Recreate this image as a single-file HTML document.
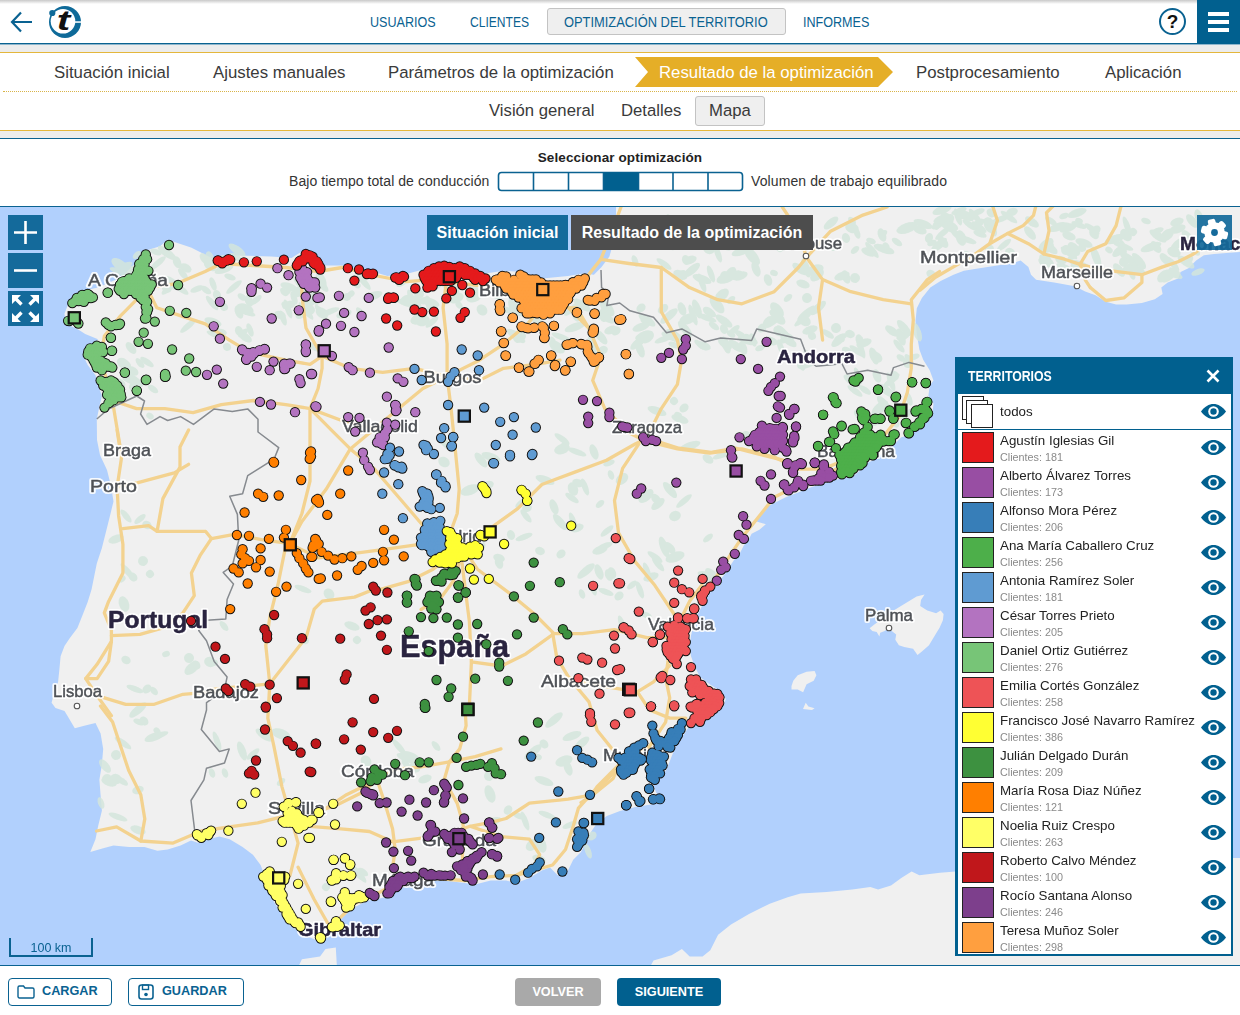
<!DOCTYPE html>
<html lang="es"><head><meta charset="utf-8"><title>Optimización del territorio</title>
<style>
*{box-sizing:border-box;margin:0;padding:0}
html,body{width:1240px;height:1015px;overflow:hidden;background:#fff;font-family:"Liberation Sans","DejaVu Sans",sans-serif;color:#333}
.abs{position:absolute}
#top{position:absolute;left:0;top:0;width:1240px;height:44px;background:#fff;border-bottom:1px solid #0a6291}
#topshadow{position:absolute;left:0;top:0;width:1240px;height:4px;background:linear-gradient(#c9c9c9,#fff)}
.nav{position:absolute;top:14px;font-size:14px;color:#0a6291;white-space:nowrap;line-height:16px;transform-origin:0 50%}
#navsel{position:absolute;left:547px;top:8px;width:239px;height:27px;border:1px solid #c3c3c3;border-radius:3px;background:#efefef}
#burger{position:absolute;left:1197px;top:0;width:43px;height:44px;background:#01608f}
#burger i{position:absolute;left:11px;width:21px;height:3.5px;background:#fff}
#help{position:absolute;left:1159px;top:8px;width:27px;height:27px;border:2px solid #0a6291;border-radius:50%;text-align:center;font-weight:bold;font-size:19px;line-height:23px;color:#111}
#grey1{position:absolute;left:0;top:44px;width:1240px;height:96px;background:#ececec;border-top:1px solid #8fb6cc}
#steps{position:absolute;left:0;top:52px;width:1240px;height:79px;background:#fff;border-top:1.5px solid #e4b73c;border-bottom:1.5px solid #e4b73c}
.step{position:absolute;top:62.5px;font-size:16.8px;line-height:20px;color:#3a3a3a;white-space:nowrap}
#dotline{position:absolute;left:3px;top:91px;width:1234px;height:0;border-top:1px dotted #d9b44a}
.sub{position:absolute;top:101px;font-size:16.7px;line-height:20px;color:#3a3a3a;white-space:nowrap}
#mapa{position:absolute;left:695px;top:96px;width:70px;height:30px;border:1px solid #c3c3c3;border-radius:3px;background:#efefef}
#selbar{position:absolute;left:0;top:138px;width:1240px;height:69px;background:#fff;border-top:1.5px solid #0a6291}
#map{position:absolute;left:0;top:206px;width:1240px;height:760px;border-top:1px solid #0a6291;border-bottom:1px solid #0a6291;background:#b1d0fd;overflow:hidden}
.mbtn{position:absolute;width:35px;height:35px;background:#146a9b}
.tog{position:absolute;top:215px;height:35px;color:#fff;font-weight:bold;font-size:16px;line-height:35px;white-space:nowrap;text-align:center}
.fbtn{position:absolute;top:978px;height:28px;border-radius:4px;font-weight:bold;font-size:12.7px;line-height:28px;white-space:nowrap}
#legend{position:absolute;left:955px;top:357px;width:278px;height:599px;background:#fff;border:2px solid #01608f;border-left-width:3px;border-top:0}
#leghead{position:absolute;left:-3px;top:0;width:278px;height:37px;background:#01608f;color:#fff;font-weight:bold;font-size:13.5px;line-height:39px;padding-left:13px}
.row{position:absolute;left:0;width:273px;height:35px}
.sw{position:absolute;left:4px;top:2px;width:32px;height:31px;border:1px solid #222}
.nm{position:absolute;left:42px;top:3px;font-size:13.35px;line-height:15px;color:#222;white-space:nowrap}
.ct{position:absolute;left:42px;top:20.5px;font-size:10.8px;line-height:12px;color:#8a8a8a;white-space:nowrap}
.eye{position:absolute;left:242.5px;top:10px;width:25px;height:15px}
</style></head><body>
<div id="top"></div><div id="topshadow"></div>
<svg class="abs" style="left:8px;top:8px" width="28" height="28" viewBox="0 0 28 28"><path d="M4 14H24M13 4.5L4 14L13 23.5" fill="none" stroke="#0a6291" stroke-width="2.2"/></svg>
<svg class="abs" style="left:46px;top:4px" width="38" height="36" viewBox="0 0 38 36"><circle cx="19" cy="18" r="16" fill="#0e6a99"/><circle cx="17" cy="17.3" r="12.3" fill="#fff"/><rect x="29" y="17.3" width="7" height="1.5" fill="#fff"/><circle cx="6.3" cy="9" r="3.1" fill="#0e6a99"/><text x="0" y="0" transform="translate(17.5 26.3) scale(1.5 1)" text-anchor="middle" font-family="Liberation Sans,sans-serif" font-weight="bold" font-style="italic" font-size="27" fill="#111">t</text></svg>
<div id="navsel"></div>
<div class="nav" style="left:370px;transform:scaleX(.897)">USUARIOS</div>
<div class="nav" style="left:470px;transform:scaleX(.862)">CLIENTES</div>
<div class="nav" style="left:564px;transform:scaleX(.92)">OPTIMIZACIÓN DEL TERRITORIO</div>
<div class="nav" style="left:803px;transform:scaleX(.898)">INFORMES</div>
<div id="help">?</div>
<div id="burger"><i style="top:12px"></i><i style="top:20px"></i><i style="top:28px"></i></div>
<div id="grey1"></div>
<div id="steps"></div>
<svg class="abs" style="left:635px;top:57px" width="260" height="30" viewBox="0 0 260 30"><path d="M0 0H243L258 15L243 30H0L13 15Z" fill="#e5ae27"/></svg>
<div class="step" style="left:54px">Situación inicial</div>
<div class="step" style="left:213px">Ajustes manuales</div>
<div class="step" style="left:388px">Parámetros de la optimización</div>
<div class="step" style="left:659px;color:#fff">Resultado de la optimización</div>
<div class="step" style="left:916px">Postprocesamiento</div>
<div class="step" style="left:1105px">Aplicación</div>
<div id="dotline"></div>
<div id="mapa"></div>
<div class="sub" style="left:489px">Visión general</div>
<div class="sub" style="left:621px">Detalles</div>
<div class="sub" style="left:709px">Mapa</div>
<div id="selbar"></div>
<div class="abs" style="left:420px;top:150px;width:400px;text-align:center;font-weight:bold;font-size:13.5px;letter-spacing:.1px;line-height:15px;color:#222">Seleccionar optimización</div>
<div class="abs" id="lbl1" style="left:289px;top:174px;font-size:14px;letter-spacing:.06px;line-height:15px;white-space:nowrap">Bajo tiempo total de conducción</div>
<div class="abs" id="lbl2" style="left:751px;top:174px;font-size:14px;letter-spacing:.1px;line-height:15px;white-space:nowrap">Volumen de trabajo equilibrado</div>
<svg class="abs" style="left:497px;top:171px" width="248" height="22" viewBox="0 0 248 22"><rect x="1.5" y="1.5" width="244" height="18" rx="3" fill="#fff" stroke="#0a6291" stroke-width="1.6"/><rect x="106" y="1.5" width="35" height="18" fill="#01608f"/><path d="M36.5 2v17M71.5 2v17M106.5 2v17M141.5 2v17M176 2v17M211 2v17" stroke="#0a6291" stroke-width="1.6"/></svg>
<div id="map">
<svg class="abs" style="left:0;top:0" width="1240" height="758" viewBox="0 0 1240 758">
<g fill="#f0f0f0" stroke="none">
<path d="M64.5 106.4 L69.7 93.5 L85.2 83.2 L98.0 80.6 L121.3 70.3 L134.2 57.4 L140.6 49.6 L147.1 43.2 L160.0 39.3 L167.7 32.8 L191.0 40.6 L203.9 47.0 L211.6 50.9 L232.3 48.3 L271.0 49.6 L291.6 50.9 L305.8 41.9 L320.0 53.5 L325.5 58.6 L343.5 58.6 L374.5 65.1 L387.4 69.0 L408.0 66.4 L423.5 62.5 L433.9 58.6 L449.4 56.1 L464.8 58.6 L485.5 66.4 L503.5 63.8 L521.6 65.1 L542.3 71.5 L568.0 69.0 L583.5 66.4 L593.9 67.7 L601.6 59.9 L609.4 49.6 L613.0 36.7 L615.0 23.8 L616.0 10.9 L616.0 -7.0 L1245.0 -7.0 L1245.0 44.5 L1229.7 45.7 L1214.2 47.0 L1203.9 48.3 L1196.1 53.5 L1188.4 61.2 L1180.6 65.1 L1178.1 71.5 L1167.7 75.4 L1161.3 80.6 L1162.6 87.0 L1154.8 92.2 L1141.9 96.1 L1126.5 97.4 L1116.1 97.4 L1105.8 94.8 L1095.5 88.3 L1085.2 84.5 L1074.8 79.3 L1054.2 75.4 L1036.1 72.8 L1031.0 67.7 L1028.4 59.9 L1020.6 53.5 L1012.9 56.1 L997.4 58.6 L979.4 61.2 L963.9 63.8 L953.5 67.7 L940.6 74.1 L930.3 80.6 L921.9 90.9 L916.8 101.2 L915.5 114.1 L916.8 127.0 L919.4 142.5 L923.2 152.8 L929.7 163.2 L933.5 173.5 L929.7 178.6 L928.4 189.0 L933.5 196.7 L932.3 207.0 L925.8 214.8 L916.8 222.5 L911.6 227.7 L901.3 230.3 L893.5 238.0 L883.2 245.7 L876.0 252.0 L867.7 255.7 L860.0 263.5 L852.3 269.9 L836.8 272.5 L823.9 276.4 L811.0 280.3 L798.1 285.4 L785.2 290.6 L774.8 295.7 L767.1 299.6 L759.4 307.4 L754.2 313.8 L765.8 317.2 L759.4 322.8 L751.6 326.7 L749.0 331.9 L743.9 338.3 L740.0 346.1 L733.5 353.8 L728.4 361.5 L723.2 369.3 L715.5 377.0 L709.0 387.4 L702.6 397.7 L697.4 408.0 L693.5 418.3 L691.0 428.6 L689.7 439.0 L691.0 449.3 L694.8 459.6 L700.0 469.9 L710.3 477.7 L720.6 484.1 L725.8 491.9 L723.2 499.6 L705.2 510.9 L689.7 518.6 L684.5 526.4 L676.8 536.7 L671.6 549.6 L666.5 562.5 L658.7 572.8 L653.5 578.0 L656.1 585.7 L663.9 592.2 L651.0 597.4 L635.5 599.9 L620.0 604.0 L606.8 609.0 L596.5 616.7 L591.3 624.5 L586.1 634.8 L581.0 645.1 L573.2 652.8 L568.1 663.2 L557.7 668.3 L550.0 660.6 L542.3 663.2 L529.4 670.9 L516.5 676.1 L506.1 673.5 L490.6 673.5 L475.2 677.4 L464.8 676.1 L444.2 673.5 L426.1 673.5 L413.2 676.1 L400.3 681.2 L390.0 689.0 L379.7 691.5 L366.8 694.1 L356.5 699.3 L346.1 707.0 L335.8 717.4 L325.5 730.3 L320.0 735.0 L309.7 730.3 L299.4 725.1 L289.0 717.4 L281.3 707.0 L273.5 694.1 L267.1 681.2 L264.5 668.3 L260.6 658.0 L252.9 647.7 L242.6 639.9 L229.7 632.2 L219.4 629.6 L209.0 632.2 L198.7 636.1 L191.0 633.5 L180.6 638.6 L167.7 642.5 L157.4 643.8 L144.5 639.9 L129.0 639.9 L113.5 638.6 L103.2 641.2 L90.3 645.1 L95.5 632.2 L98.1 619.3 L101.9 603.8 L100.6 588.3 L99.4 572.8 L101.9 557.4 L103.2 541.9 L100.6 526.4 L95.5 516.1 L85.2 518.6 L74.8 521.2 L67.1 508.3 L64.5 504.0 L55.5 500.9 L51.6 495.7 L54.2 485.4 L58.1 475.1 L59.4 462.2 L60.6 449.3 L64.5 439.0 L69.7 431.2 L77.4 420.9 L82.6 408.0 L87.7 395.1 L91.6 382.2 L94.2 369.3 L96.8 356.4 L101.9 340.9 L105.8 325.4 L109.7 309.9 L113.5 294.5 L111.0 279.0 L107.0 263.0 L100.0 248.0 L97.0 233.0 L96.8 212.2 L99.4 199.3 L102.0 189.0 L98.0 178.6 L95.5 168.3 L87.7 158.0 L82.6 147.7 L87.7 142.5 L98.0 132.2 L85.2 127.0 L77.4 121.9 L65.8 116.7Z"/>
<path d="M296.8 763.0 L301.9 752.2 L320.0 749.6 L325.5 741.9 L335.8 740.6 L337.1 763.0Z"/>
<path d="M648.4 763.0 L653.5 753.5 L671.6 748.3 L681.9 741.9 L689.7 749.6 L702.6 749.6 L710.3 743.2 L718.1 727.7 L731.0 717.4 L749.0 707.0 L769.7 696.7 L787.7 690.3 L800.6 686.4 L826.5 685.1 L852.3 682.5 L870.3 679.9 L878.1 682.5 L891.0 678.6 L901.3 670.9 L911.6 664.5 L919.4 668.3 L929.7 667.0 L940.0 665.7 L1000.0 661.0 L1232.0 651.0 L1245.0 651.0 L1245.0 763.0Z"/>
<path d="M869.6 421.3 L874.0 417.8 L893.6 403.6 L916.6 389.4 L924.6 387.6 L921.0 392.9 L920.2 399.1 L927.3 403.6 L936.1 406.2 L940.6 403.6 L943.6 407.1 L942.9 413.3 L939.7 420.4 L934.4 429.3 L929.0 438.2 L921.9 444.4 L917.5 447.9 L913.1 441.7 L904.2 439.9 L898.9 438.2 L895.3 432.8 L896.2 427.5 L891.8 424.0 L888.2 421.3 L884.7 424.0 L880.2 425.7 L879.4 429.6 L876.7 424.9 L872.3 424.0Z"/>
<path d="M791.5 479.0 L793.3 473.7 L797.7 468.3 L806.6 464.8 L814.6 463.9 L816.4 468.3 L813.7 473.7 L806.6 477.2 L803.1 485.2 L797.7 482.5 L791.5 482.5Z"/>
<path d="M803.0 502.0 L805.7 495.8 L808.4 499.4 L814.6 501.2 L812.0 503.0Z"/>
</g>
<g fill="#d4e6dc" opacity=".85">
<ellipse cx="975" cy="9" rx="9" ry="3" transform="rotate(50 975 9)"/>
<ellipse cx="943" cy="26" rx="10" ry="3" transform="rotate(-40 943 26)"/>
<ellipse cx="991" cy="6" rx="5" ry="4" transform="rotate(50 991 6)"/>
<ellipse cx="947" cy="12" rx="8" ry="5" transform="rotate(50 947 12)"/>
<ellipse cx="1012" cy="5" rx="6" ry="4" transform="rotate(-20 1012 5)"/>
<ellipse cx="971" cy="9" rx="5" ry="3" transform="rotate(70 971 9)"/>
<ellipse cx="955" cy="26" rx="8" ry="3" transform="rotate(50 955 26)"/>
<ellipse cx="1030" cy="26" rx="8" ry="4" transform="rotate(50 1030 26)"/>
<ellipse cx="990" cy="16" rx="8" ry="4" transform="rotate(20 990 16)"/>
<ellipse cx="965" cy="10" rx="9" ry="3" transform="rotate(20 965 10)"/>
<ellipse cx="1004" cy="38" rx="9" ry="3" transform="rotate(-40 1004 38)"/>
<ellipse cx="947" cy="20" rx="9" ry="3" transform="rotate(35 947 20)"/>
<ellipse cx="989" cy="41" rx="5" ry="4" transform="rotate(20 989 41)"/>
<ellipse cx="978" cy="17" rx="7" ry="4" transform="rotate(-40 978 17)"/>
<ellipse cx="1048" cy="41" rx="7" ry="4" transform="rotate(-40 1048 41)"/>
<ellipse cx="1032" cy="15" rx="8" ry="4" transform="rotate(35 1032 15)"/>
<ellipse cx="970" cy="18" rx="9" ry="3" transform="rotate(35 970 18)"/>
<ellipse cx="980" cy="27" rx="7" ry="3" transform="rotate(20 980 27)"/>
<ellipse cx="948" cy="13" rx="7" ry="5" transform="rotate(-40 948 13)"/>
<ellipse cx="953" cy="19" rx="6" ry="3" transform="rotate(35 953 19)"/>
<ellipse cx="1051" cy="14" rx="7" ry="3" transform="rotate(35 1051 14)"/>
<ellipse cx="1064" cy="9" rx="5" ry="3" transform="rotate(-20 1064 9)"/>
<ellipse cx="932" cy="36" rx="5" ry="3" transform="rotate(-20 932 36)"/>
<ellipse cx="989" cy="18" rx="8" ry="5" transform="rotate(70 989 18)"/>
<ellipse cx="1050" cy="41" rx="9" ry="4" transform="rotate(35 1050 41)"/>
<ellipse cx="1186" cy="55" rx="10" ry="4" transform="rotate(35 1186 55)"/>
<ellipse cx="1116" cy="32" rx="7" ry="4" transform="rotate(-20 1116 32)"/>
<ellipse cx="1069" cy="21" rx="5" ry="3" transform="rotate(-40 1069 21)"/>
<ellipse cx="1074" cy="42" rx="8" ry="5" transform="rotate(50 1074 42)"/>
<ellipse cx="1064" cy="60" rx="8" ry="3" transform="rotate(20 1064 60)"/>
<ellipse cx="1194" cy="44" rx="7" ry="3" transform="rotate(35 1194 44)"/>
<ellipse cx="1199" cy="36" rx="7" ry="3" transform="rotate(-40 1199 36)"/>
<ellipse cx="1165" cy="52" rx="7" ry="4" transform="rotate(50 1165 52)"/>
<ellipse cx="1063" cy="65" rx="8" ry="3" transform="rotate(50 1063 65)"/>
<ellipse cx="1188" cy="53" rx="6" ry="4" transform="rotate(-40 1188 53)"/>
<ellipse cx="1157" cy="24" rx="7" ry="3" transform="rotate(-20 1157 24)"/>
<ellipse cx="1135" cy="55" rx="6" ry="3" transform="rotate(-20 1135 55)"/>
<ellipse cx="1173" cy="57" rx="9" ry="3" transform="rotate(50 1173 57)"/>
<ellipse cx="1129" cy="52" rx="11" ry="4" transform="rotate(35 1129 52)"/>
<ellipse cx="1096" cy="50" rx="11" ry="4" transform="rotate(70 1096 50)"/>
<ellipse cx="1198" cy="65" rx="7" ry="3" transform="rotate(-20 1198 65)"/>
<ellipse cx="1126" cy="28" rx="7" ry="5" transform="rotate(50 1126 28)"/>
<ellipse cx="1178" cy="37" rx="9" ry="4" transform="rotate(-40 1178 37)"/>
<ellipse cx="1177" cy="15" rx="7" ry="4" transform="rotate(-20 1177 15)"/>
<ellipse cx="1127" cy="19" rx="10" ry="3" transform="rotate(70 1127 19)"/>
<ellipse cx="1115" cy="32" rx="11" ry="4" transform="rotate(-20 1115 32)"/>
<ellipse cx="1199" cy="10" rx="8" ry="4" transform="rotate(70 1199 10)"/>
<ellipse cx="1080" cy="58" rx="11" ry="4" transform="rotate(20 1080 58)"/>
<ellipse cx="1082" cy="41" rx="4" ry="4" transform="rotate(70 1082 41)"/>
<ellipse cx="1151" cy="40" rx="11" ry="4" transform="rotate(-20 1151 40)"/>
<ellipse cx="1176" cy="21" rx="6" ry="3" transform="rotate(-20 1176 21)"/>
<ellipse cx="1167" cy="28" rx="8" ry="5" transform="rotate(-40 1167 28)"/>
<ellipse cx="1187" cy="29" rx="7" ry="4" transform="rotate(50 1187 29)"/>
<ellipse cx="1119" cy="63" rx="8" ry="4" transform="rotate(50 1119 63)"/>
<ellipse cx="1131" cy="60" rx="9" ry="4" transform="rotate(-20 1131 60)"/>
<ellipse cx="1084" cy="36" rx="9" ry="4" transform="rotate(20 1084 36)"/>
<ellipse cx="1156" cy="40" rx="7" ry="4" transform="rotate(50 1156 40)"/>
<ellipse cx="1068" cy="19" rx="4" ry="3" transform="rotate(35 1068 19)"/>
<ellipse cx="1139" cy="54" rx="10" ry="4" transform="rotate(50 1139 54)"/>
<ellipse cx="1196" cy="44" rx="5" ry="3" transform="rotate(50 1196 44)"/>
<ellipse cx="884" cy="42" rx="11" ry="4" transform="rotate(20 884 42)"/>
<ellipse cx="931" cy="67" rx="5" ry="4" transform="rotate(35 931 67)"/>
<ellipse cx="835" cy="40" rx="5" ry="3" transform="rotate(-40 835 40)"/>
<ellipse cx="846" cy="31" rx="5" ry="4" transform="rotate(70 846 31)"/>
<ellipse cx="897" cy="35" rx="6" ry="3" transform="rotate(35 897 35)"/>
<ellipse cx="846" cy="70" rx="7" ry="4" transform="rotate(70 846 70)"/>
<ellipse cx="920" cy="23" rx="7" ry="4" transform="rotate(20 920 23)"/>
<ellipse cx="871" cy="34" rx="5" ry="3" transform="rotate(20 871 34)"/>
<ellipse cx="886" cy="39" rx="4" ry="3" transform="rotate(50 886 39)"/>
<ellipse cx="855" cy="71" rx="5" ry="5" transform="rotate(-20 855 71)"/>
<ellipse cx="937" cy="19" rx="6" ry="3" transform="rotate(-20 937 19)"/>
<ellipse cx="852" cy="21" rx="7" ry="5" transform="rotate(20 852 21)"/>
<ellipse cx="869" cy="45" rx="8" ry="4" transform="rotate(20 869 45)"/>
<ellipse cx="831" cy="16" rx="9" ry="4" transform="rotate(-40 831 16)"/>
<ellipse cx="852" cy="14" rx="5" ry="3" transform="rotate(50 852 14)"/>
<ellipse cx="923" cy="17" rx="10" ry="4" transform="rotate(20 923 17)"/>
<ellipse cx="939" cy="38" rx="10" ry="4" transform="rotate(-40 939 38)"/>
<ellipse cx="883" cy="27" rx="5" ry="3" transform="rotate(-40 883 27)"/>
<ellipse cx="842" cy="69" rx="8" ry="4" transform="rotate(-20 842 69)"/>
<ellipse cx="855" cy="43" rx="5" ry="3" transform="rotate(-40 855 43)"/>
<ellipse cx="939" cy="15" rx="4" ry="4" transform="rotate(-20 939 15)"/>
<ellipse cx="882" cy="28" rx="7" ry="4" transform="rotate(70 882 28)"/>
<ellipse cx="872" cy="43" rx="10" ry="3" transform="rotate(50 872 43)"/>
<ellipse cx="857" cy="26" rx="6" ry="3" transform="rotate(70 857 26)"/>
<ellipse cx="907" cy="21" rx="11" ry="5" transform="rotate(-20 907 21)"/>
<ellipse cx="692" cy="63" rx="10" ry="4" transform="rotate(-40 692 63)"/>
<ellipse cx="702" cy="72" rx="10" ry="4" transform="rotate(20 702 72)"/>
<ellipse cx="774" cy="66" rx="4" ry="3" transform="rotate(20 774 66)"/>
<ellipse cx="752" cy="49" rx="11" ry="5" transform="rotate(50 752 49)"/>
<ellipse cx="735" cy="39" rx="10" ry="3" transform="rotate(-20 735 39)"/>
<ellipse cx="690" cy="53" rx="7" ry="4" transform="rotate(-20 690 53)"/>
<ellipse cx="725" cy="69" rx="5" ry="5" transform="rotate(-20 725 69)"/>
<ellipse cx="746" cy="40" rx="4" ry="3" transform="rotate(-20 746 40)"/>
<ellipse cx="702" cy="76" rx="10" ry="3" transform="rotate(70 702 76)"/>
<ellipse cx="800" cy="62" rx="9" ry="4" transform="rotate(35 800 62)"/>
<ellipse cx="711" cy="67" rx="9" ry="3" transform="rotate(70 711 67)"/>
<ellipse cx="815" cy="63" rx="9" ry="5" transform="rotate(-20 815 63)"/>
<ellipse cx="817" cy="68" rx="8" ry="5" transform="rotate(-40 817 68)"/>
<ellipse cx="806" cy="61" rx="10" ry="4" transform="rotate(70 806 61)"/>
<ellipse cx="780" cy="41" rx="4" ry="4" transform="rotate(-40 780 41)"/>
<ellipse cx="653" cy="31" rx="4" ry="3" transform="rotate(50 653 31)"/>
<ellipse cx="671" cy="32" rx="4" ry="4" transform="rotate(70 671 32)"/>
<ellipse cx="686" cy="53" rx="5" ry="4" transform="rotate(70 686 53)"/>
<ellipse cx="674" cy="21" rx="5" ry="3" transform="rotate(70 674 21)"/>
<ellipse cx="675" cy="20" rx="9" ry="4" transform="rotate(35 675 20)"/>
<ellipse cx="635" cy="54" rx="6" ry="3" transform="rotate(70 635 54)"/>
<ellipse cx="669" cy="12" rx="5" ry="3" transform="rotate(70 669 12)"/>
<ellipse cx="672" cy="39" rx="5" ry="4" transform="rotate(35 672 39)"/>
<ellipse cx="152" cy="72" rx="9" ry="4" transform="rotate(20 152 72)"/>
<ellipse cx="205" cy="52" rx="7" ry="4" transform="rotate(50 205 52)"/>
<ellipse cx="144" cy="87" rx="11" ry="3" transform="rotate(35 144 87)"/>
<ellipse cx="129" cy="63" rx="11" ry="5" transform="rotate(35 129 63)"/>
<ellipse cx="145" cy="85" rx="5" ry="4" transform="rotate(-20 145 85)"/>
<ellipse cx="210" cy="51" rx="7" ry="4" transform="rotate(70 210 51)"/>
<ellipse cx="181" cy="82" rx="9" ry="3" transform="rotate(35 181 82)"/>
<ellipse cx="167" cy="46" rx="11" ry="4" transform="rotate(35 167 46)"/>
<ellipse cx="156" cy="45" rx="6" ry="3" transform="rotate(20 156 45)"/>
<ellipse cx="120" cy="76" rx="10" ry="3" transform="rotate(-20 120 76)"/>
<ellipse cx="206" cy="83" rx="6" ry="3" transform="rotate(35 206 83)"/>
<ellipse cx="167" cy="81" rx="5" ry="5" transform="rotate(20 167 81)"/>
<ellipse cx="223" cy="52" rx="4" ry="4" transform="rotate(70 223 52)"/>
<ellipse cx="232" cy="50" rx="6" ry="4" transform="rotate(-20 232 50)"/>
<ellipse cx="213" cy="77" rx="7" ry="3" transform="rotate(70 213 77)"/>
<ellipse cx="168" cy="82" rx="8" ry="3" transform="rotate(-40 168 82)"/>
<ellipse cx="126" cy="75" rx="7" ry="4" transform="rotate(70 126 75)"/>
<ellipse cx="224" cy="62" rx="10" ry="4" transform="rotate(-20 224 62)"/>
<ellipse cx="177" cy="55" rx="6" ry="4" transform="rotate(70 177 55)"/>
<ellipse cx="151" cy="71" rx="6" ry="4" transform="rotate(35 151 71)"/>
<ellipse cx="134" cy="70" rx="5" ry="4" transform="rotate(35 134 70)"/>
<ellipse cx="186" cy="61" rx="6" ry="4" transform="rotate(35 186 61)"/>
<ellipse cx="137" cy="48" rx="5" ry="3" transform="rotate(-40 137 48)"/>
<ellipse cx="158" cy="56" rx="10" ry="3" transform="rotate(-40 158 56)"/>
<ellipse cx="210" cy="59" rx="7" ry="4" transform="rotate(35 210 59)"/>
<ellipse cx="152" cy="76" rx="7" ry="4" transform="rotate(20 152 76)"/>
<ellipse cx="135" cy="63" rx="8" ry="5" transform="rotate(-20 135 63)"/>
<ellipse cx="131" cy="83" rx="7" ry="4" transform="rotate(35 131 83)"/>
<ellipse cx="234" cy="80" rx="10" ry="3" transform="rotate(-40 234 80)"/>
<ellipse cx="171" cy="76" rx="10" ry="5" transform="rotate(35 171 76)"/>
<ellipse cx="120" cy="58" rx="10" ry="5" transform="rotate(35 120 58)"/>
<ellipse cx="237" cy="50" rx="5" ry="3" transform="rotate(50 237 50)"/>
<ellipse cx="237" cy="43" rx="10" ry="4" transform="rotate(35 237 43)"/>
<ellipse cx="130" cy="77" rx="4" ry="3" transform="rotate(50 130 77)"/>
<ellipse cx="230" cy="70" rx="6" ry="3" transform="rotate(20 230 70)"/>
<ellipse cx="183" cy="60" rx="9" ry="3" transform="rotate(20 183 60)"/>
<ellipse cx="183" cy="67" rx="7" ry="3" transform="rotate(50 183 67)"/>
<ellipse cx="120" cy="65" rx="11" ry="3" transform="rotate(20 120 65)"/>
<ellipse cx="197" cy="82" rx="7" ry="3" transform="rotate(-20 197 82)"/>
<ellipse cx="124" cy="59" rx="9" ry="3" transform="rotate(-20 124 59)"/>
<ellipse cx="250" cy="123" rx="7" ry="3" transform="rotate(70 250 123)"/>
<ellipse cx="239" cy="105" rx="7" ry="4" transform="rotate(70 239 105)"/>
<ellipse cx="239" cy="124" rx="5" ry="4" transform="rotate(70 239 124)"/>
<ellipse cx="298" cy="87" rx="7" ry="3" transform="rotate(-20 298 87)"/>
<ellipse cx="212" cy="96" rx="9" ry="3" transform="rotate(50 212 96)"/>
<ellipse cx="249" cy="94" rx="6" ry="4" transform="rotate(70 249 94)"/>
<ellipse cx="188" cy="119" rx="10" ry="3" transform="rotate(-40 188 119)"/>
<ellipse cx="316" cy="92" rx="4" ry="3" transform="rotate(35 316 92)"/>
<ellipse cx="243" cy="126" rx="6" ry="3" transform="rotate(-40 243 126)"/>
<ellipse cx="310" cy="103" rx="5" ry="5" transform="rotate(70 310 103)"/>
<ellipse cx="245" cy="102" rx="9" ry="5" transform="rotate(20 245 102)"/>
<ellipse cx="242" cy="90" rx="5" ry="3" transform="rotate(35 242 90)"/>
<ellipse cx="314" cy="90" rx="11" ry="3" transform="rotate(20 314 90)"/>
<ellipse cx="288" cy="102" rx="10" ry="3" transform="rotate(70 288 102)"/>
<ellipse cx="246" cy="105" rx="10" ry="3" transform="rotate(20 246 105)"/>
<ellipse cx="283" cy="111" rx="8" ry="3" transform="rotate(70 283 111)"/>
<ellipse cx="287" cy="85" rx="4" ry="3" transform="rotate(-40 287 85)"/>
<ellipse cx="216" cy="128" rx="10" ry="3" transform="rotate(20 216 128)"/>
<ellipse cx="227" cy="140" rx="4" ry="4" transform="rotate(70 227 140)"/>
<ellipse cx="224" cy="100" rx="4" ry="4" transform="rotate(70 224 100)"/>
<ellipse cx="313" cy="87" rx="10" ry="3" transform="rotate(70 313 87)"/>
<ellipse cx="314" cy="140" rx="7" ry="3" transform="rotate(35 314 140)"/>
<ellipse cx="294" cy="91" rx="7" ry="3" transform="rotate(70 294 91)"/>
<ellipse cx="222" cy="125" rx="5" ry="3" transform="rotate(20 222 125)"/>
<ellipse cx="245" cy="130" rx="8" ry="4" transform="rotate(35 245 130)"/>
<ellipse cx="285" cy="98" rx="4" ry="3" transform="rotate(50 285 98)"/>
<ellipse cx="256" cy="93" rx="7" ry="3" transform="rotate(-40 256 93)"/>
<ellipse cx="217" cy="88" rx="5" ry="4" transform="rotate(70 217 88)"/>
<ellipse cx="316" cy="93" rx="5" ry="4" transform="rotate(70 316 93)"/>
<ellipse cx="213" cy="115" rx="9" ry="4" transform="rotate(20 213 115)"/>
<ellipse cx="309" cy="96" rx="7" ry="4" transform="rotate(-20 309 96)"/>
<ellipse cx="324" cy="80" rx="6" ry="3" transform="rotate(50 324 80)"/>
<ellipse cx="299" cy="76" rx="6" ry="3" transform="rotate(50 299 76)"/>
<ellipse cx="303" cy="105" rx="9" ry="5" transform="rotate(-40 303 105)"/>
<ellipse cx="280" cy="108" rx="6" ry="4" transform="rotate(20 280 108)"/>
<ellipse cx="284" cy="85" rx="5" ry="3" transform="rotate(50 284 85)"/>
<ellipse cx="299" cy="76" rx="8" ry="3" transform="rotate(50 299 76)"/>
<ellipse cx="306" cy="104" rx="11" ry="3" transform="rotate(50 306 104)"/>
<ellipse cx="351" cy="87" rx="4" ry="3" transform="rotate(-40 351 87)"/>
<ellipse cx="300" cy="83" rx="8" ry="4" transform="rotate(-20 300 83)"/>
<ellipse cx="361" cy="106" rx="7" ry="3" transform="rotate(50 361 106)"/>
<ellipse cx="311" cy="81" rx="10" ry="4" transform="rotate(-40 311 81)"/>
<ellipse cx="321" cy="105" rx="9" ry="3" transform="rotate(50 321 105)"/>
<ellipse cx="289" cy="80" rx="9" ry="4" transform="rotate(20 289 80)"/>
<ellipse cx="347" cy="90" rx="4" ry="4" transform="rotate(20 347 90)"/>
<ellipse cx="321" cy="74" rx="9" ry="5" transform="rotate(70 321 74)"/>
<ellipse cx="300" cy="102" rx="5" ry="3" transform="rotate(-20 300 102)"/>
<ellipse cx="322" cy="106" rx="7" ry="5" transform="rotate(35 322 106)"/>
<ellipse cx="357" cy="78" rx="4" ry="3" transform="rotate(35 357 78)"/>
<ellipse cx="289" cy="98" rx="7" ry="4" transform="rotate(-20 289 98)"/>
<ellipse cx="315" cy="79" rx="5" ry="3" transform="rotate(35 315 79)"/>
<ellipse cx="329" cy="105" rx="11" ry="3" transform="rotate(-20 329 105)"/>
<ellipse cx="364" cy="75" rx="10" ry="3" transform="rotate(50 364 75)"/>
<ellipse cx="373" cy="89" rx="10" ry="4" transform="rotate(-20 373 89)"/>
<ellipse cx="344" cy="107" rx="8" ry="4" transform="rotate(-20 344 107)"/>
<ellipse cx="500" cy="79" rx="6" ry="3" transform="rotate(50 500 79)"/>
<ellipse cx="419" cy="87" rx="5" ry="5" transform="rotate(-20 419 87)"/>
<ellipse cx="405" cy="96" rx="9" ry="3" transform="rotate(20 405 96)"/>
<ellipse cx="414" cy="97" rx="8" ry="4" transform="rotate(20 414 97)"/>
<ellipse cx="478" cy="85" rx="6" ry="3" transform="rotate(20 478 85)"/>
<ellipse cx="454" cy="90" rx="4" ry="4" transform="rotate(35 454 90)"/>
<ellipse cx="456" cy="91" rx="8" ry="5" transform="rotate(-20 456 91)"/>
<ellipse cx="497" cy="89" rx="4" ry="3" transform="rotate(20 497 89)"/>
<ellipse cx="411" cy="90" rx="8" ry="3" transform="rotate(70 411 90)"/>
<ellipse cx="416" cy="112" rx="6" ry="4" transform="rotate(-40 416 112)"/>
<ellipse cx="407" cy="93" rx="7" ry="5" transform="rotate(-20 407 93)"/>
<ellipse cx="403" cy="74" rx="8" ry="4" transform="rotate(-40 403 74)"/>
<ellipse cx="423" cy="114" rx="7" ry="5" transform="rotate(-20 423 114)"/>
<ellipse cx="482" cy="103" rx="6" ry="5" transform="rotate(50 482 103)"/>
<ellipse cx="491" cy="78" rx="10" ry="3" transform="rotate(35 491 78)"/>
<ellipse cx="417" cy="93" rx="10" ry="3" transform="rotate(20 417 93)"/>
<ellipse cx="474" cy="81" rx="7" ry="3" transform="rotate(35 474 81)"/>
<ellipse cx="419" cy="112" rx="9" ry="5" transform="rotate(-20 419 112)"/>
<ellipse cx="495" cy="83" rx="9" ry="3" transform="rotate(20 495 83)"/>
<ellipse cx="516" cy="91" rx="8" ry="4" transform="rotate(-40 516 91)"/>
<ellipse cx="430" cy="95" rx="10" ry="4" transform="rotate(20 430 95)"/>
<ellipse cx="432" cy="115" rx="8" ry="3" transform="rotate(-40 432 115)"/>
<ellipse cx="453" cy="79" rx="9" ry="3" transform="rotate(50 453 79)"/>
<ellipse cx="430" cy="99" rx="11" ry="4" transform="rotate(70 430 99)"/>
<ellipse cx="507" cy="103" rx="9" ry="3" transform="rotate(20 507 103)"/>
<ellipse cx="474" cy="90" rx="8" ry="5" transform="rotate(-20 474 90)"/>
<ellipse cx="459" cy="98" rx="4" ry="3" transform="rotate(50 459 98)"/>
<ellipse cx="443" cy="76" rx="7" ry="3" transform="rotate(50 443 76)"/>
<ellipse cx="436" cy="77" rx="7" ry="5" transform="rotate(-20 436 77)"/>
<ellipse cx="416" cy="112" rx="6" ry="3" transform="rotate(-40 416 112)"/>
<ellipse cx="516" cy="105" rx="9" ry="3" transform="rotate(20 516 105)"/>
<ellipse cx="607" cy="101" rx="10" ry="5" transform="rotate(50 607 101)"/>
<ellipse cx="575" cy="120" rx="11" ry="4" transform="rotate(-20 575 120)"/>
<ellipse cx="527" cy="98" rx="4" ry="3" transform="rotate(-20 527 98)"/>
<ellipse cx="534" cy="101" rx="9" ry="3" transform="rotate(50 534 101)"/>
<ellipse cx="576" cy="108" rx="7" ry="4" transform="rotate(70 576 108)"/>
<ellipse cx="561" cy="130" rx="10" ry="3" transform="rotate(20 561 130)"/>
<ellipse cx="516" cy="129" rx="11" ry="4" transform="rotate(35 516 129)"/>
<ellipse cx="582" cy="98" rx="10" ry="4" transform="rotate(35 582 98)"/>
<ellipse cx="518" cy="131" rx="5" ry="5" transform="rotate(20 518 131)"/>
<ellipse cx="533" cy="100" rx="6" ry="4" transform="rotate(70 533 100)"/>
<ellipse cx="604" cy="111" rx="4" ry="4" transform="rotate(70 604 111)"/>
<ellipse cx="554" cy="137" rx="8" ry="3" transform="rotate(70 554 137)"/>
<ellipse cx="603" cy="143" rx="5" ry="4" transform="rotate(-20 603 143)"/>
<ellipse cx="536" cy="110" rx="9" ry="5" transform="rotate(70 536 110)"/>
<ellipse cx="601" cy="108" rx="7" ry="4" transform="rotate(35 601 108)"/>
<ellipse cx="601" cy="130" rx="9" ry="4" transform="rotate(50 601 130)"/>
<ellipse cx="557" cy="140" rx="9" ry="5" transform="rotate(35 557 140)"/>
<ellipse cx="606" cy="110" rx="10" ry="4" transform="rotate(35 606 110)"/>
<ellipse cx="572" cy="102" rx="10" ry="3" transform="rotate(-40 572 102)"/>
<ellipse cx="521" cy="129" rx="5" ry="5" transform="rotate(70 521 129)"/>
<ellipse cx="513" cy="100" rx="9" ry="4" transform="rotate(70 513 100)"/>
<ellipse cx="517" cy="100" rx="10" ry="4" transform="rotate(-20 517 100)"/>
<ellipse cx="592" cy="139" rx="10" ry="3" transform="rotate(70 592 139)"/>
<ellipse cx="604" cy="103" rx="5" ry="3" transform="rotate(-40 604 103)"/>
<ellipse cx="781" cy="141" rx="9" ry="3" transform="rotate(70 781 141)"/>
<ellipse cx="724" cy="122" rx="5" ry="4" transform="rotate(70 724 122)"/>
<ellipse cx="647" cy="115" rx="7" ry="3" transform="rotate(20 647 115)"/>
<ellipse cx="777" cy="103" rx="9" ry="5" transform="rotate(50 777 103)"/>
<ellipse cx="701" cy="138" rx="8" ry="3" transform="rotate(35 701 138)"/>
<ellipse cx="616" cy="124" rx="5" ry="4" transform="rotate(-40 616 124)"/>
<ellipse cx="707" cy="111" rx="10" ry="3" transform="rotate(20 707 111)"/>
<ellipse cx="641" cy="101" rx="5" ry="4" transform="rotate(-40 641 101)"/>
<ellipse cx="611" cy="123" rx="7" ry="4" transform="rotate(-20 611 123)"/>
<ellipse cx="784" cy="127" rx="11" ry="4" transform="rotate(50 784 127)"/>
<ellipse cx="780" cy="113" rx="6" ry="4" transform="rotate(35 780 113)"/>
<ellipse cx="640" cy="142" rx="9" ry="4" transform="rotate(70 640 142)"/>
<ellipse cx="711" cy="106" rx="6" ry="3" transform="rotate(35 711 106)"/>
<ellipse cx="771" cy="134" rx="7" ry="4" transform="rotate(20 771 134)"/>
<ellipse cx="647" cy="113" rx="10" ry="4" transform="rotate(35 647 113)"/>
<ellipse cx="787" cy="129" rx="11" ry="3" transform="rotate(50 787 129)"/>
<ellipse cx="746" cy="134" rx="9" ry="3" transform="rotate(20 746 134)"/>
<ellipse cx="704" cy="139" rx="7" ry="4" transform="rotate(20 704 139)"/>
<ellipse cx="641" cy="120" rx="9" ry="4" transform="rotate(-20 641 120)"/>
<ellipse cx="670" cy="129" rx="9" ry="4" transform="rotate(20 670 129)"/>
<ellipse cx="664" cy="132" rx="10" ry="3" transform="rotate(-20 664 132)"/>
<ellipse cx="785" cy="133" rx="8" ry="3" transform="rotate(-20 785 133)"/>
<ellipse cx="669" cy="109" rx="11" ry="4" transform="rotate(-40 669 109)"/>
<ellipse cx="640" cy="130" rx="5" ry="3" transform="rotate(-20 640 130)"/>
<ellipse cx="753" cy="133" rx="7" ry="3" transform="rotate(70 753 133)"/>
<ellipse cx="774" cy="113" rx="10" ry="4" transform="rotate(-40 774 113)"/>
<ellipse cx="682" cy="136" rx="9" ry="4" transform="rotate(70 682 136)"/>
<ellipse cx="663" cy="102" rx="6" ry="4" transform="rotate(-40 663 102)"/>
<ellipse cx="743" cy="141" rx="7" ry="4" transform="rotate(70 743 141)"/>
<ellipse cx="726" cy="138" rx="9" ry="4" transform="rotate(70 726 138)"/>
<ellipse cx="736" cy="139" rx="9" ry="4" transform="rotate(35 736 139)"/>
<ellipse cx="688" cy="112" rx="9" ry="5" transform="rotate(-20 688 112)"/>
<ellipse cx="751" cy="132" rx="8" ry="3" transform="rotate(35 751 132)"/>
<ellipse cx="697" cy="102" rx="10" ry="4" transform="rotate(70 697 102)"/>
<ellipse cx="777" cy="109" rx="9" ry="4" transform="rotate(35 777 109)"/>
<ellipse cx="760" cy="141" rx="5" ry="3" transform="rotate(-20 760 141)"/>
<ellipse cx="639" cy="135" rx="11" ry="4" transform="rotate(-40 639 135)"/>
<ellipse cx="762" cy="121" rx="5" ry="4" transform="rotate(-40 762 121)"/>
<ellipse cx="725" cy="137" rx="8" ry="4" transform="rotate(35 725 137)"/>
<ellipse cx="648" cy="131" rx="7" ry="4" transform="rotate(-40 648 131)"/>
<ellipse cx="741" cy="128" rx="8" ry="3" transform="rotate(35 741 128)"/>
<ellipse cx="682" cy="102" rx="7" ry="4" transform="rotate(70 682 102)"/>
<ellipse cx="731" cy="127" rx="5" ry="3" transform="rotate(35 731 127)"/>
<ellipse cx="779" cy="124" rx="6" ry="5" transform="rotate(35 779 124)"/>
<ellipse cx="693" cy="108" rx="11" ry="3" transform="rotate(70 693 108)"/>
<ellipse cx="645" cy="129" rx="9" ry="5" transform="rotate(-20 645 129)"/>
<ellipse cx="674" cy="129" rx="10" ry="5" transform="rotate(35 674 129)"/>
<ellipse cx="789" cy="134" rx="9" ry="4" transform="rotate(35 789 134)"/>
<ellipse cx="674" cy="138" rx="6" ry="3" transform="rotate(20 674 138)"/>
<ellipse cx="787" cy="131" rx="7" ry="5" transform="rotate(20 787 131)"/>
<ellipse cx="843" cy="150" rx="6" ry="4" transform="rotate(50 843 150)"/>
<ellipse cx="876" cy="150" rx="7" ry="5" transform="rotate(35 876 150)"/>
<ellipse cx="807" cy="157" rx="10" ry="4" transform="rotate(-20 807 157)"/>
<ellipse cx="864" cy="136" rx="8" ry="4" transform="rotate(-20 864 136)"/>
<ellipse cx="914" cy="150" rx="6" ry="3" transform="rotate(-20 914 150)"/>
<ellipse cx="903" cy="129" rx="7" ry="4" transform="rotate(-20 903 129)"/>
<ellipse cx="908" cy="156" rx="5" ry="5" transform="rotate(50 908 156)"/>
<ellipse cx="917" cy="125" rx="10" ry="4" transform="rotate(70 917 125)"/>
<ellipse cx="901" cy="130" rx="9" ry="4" transform="rotate(70 901 130)"/>
<ellipse cx="901" cy="151" rx="5" ry="3" transform="rotate(35 901 151)"/>
<ellipse cx="828" cy="127" rx="7" ry="3" transform="rotate(35 828 127)"/>
<ellipse cx="909" cy="152" rx="6" ry="3" transform="rotate(50 909 152)"/>
<ellipse cx="904" cy="121" rx="10" ry="4" transform="rotate(50 904 121)"/>
<ellipse cx="860" cy="134" rx="7" ry="4" transform="rotate(70 860 134)"/>
<ellipse cx="809" cy="149" rx="8" ry="3" transform="rotate(50 809 149)"/>
<ellipse cx="806" cy="153" rx="11" ry="5" transform="rotate(-40 806 153)"/>
<ellipse cx="861" cy="142" rx="10" ry="3" transform="rotate(70 861 142)"/>
<ellipse cx="850" cy="127" rx="5" ry="4" transform="rotate(20 850 127)"/>
<ellipse cx="857" cy="144" rx="9" ry="3" transform="rotate(35 857 144)"/>
<ellipse cx="841" cy="132" rx="4" ry="3" transform="rotate(20 841 132)"/>
<ellipse cx="899" cy="139" rx="8" ry="3" transform="rotate(50 899 139)"/>
<ellipse cx="841" cy="130" rx="7" ry="3" transform="rotate(-20 841 130)"/>
<ellipse cx="838" cy="134" rx="8" ry="4" transform="rotate(-40 838 134)"/>
<ellipse cx="848" cy="145" rx="7" ry="4" transform="rotate(35 848 145)"/>
<ellipse cx="836" cy="121" rx="5" ry="5" transform="rotate(50 836 121)"/>
<ellipse cx="892" cy="124" rx="8" ry="4" transform="rotate(35 892 124)"/>
<ellipse cx="874" cy="149" rx="9" ry="4" transform="rotate(70 874 149)"/>
<ellipse cx="810" cy="123" rx="8" ry="4" transform="rotate(-20 810 123)"/>
<ellipse cx="812" cy="129" rx="4" ry="4" transform="rotate(70 812 129)"/>
<ellipse cx="802" cy="159" rx="5" ry="3" transform="rotate(70 802 159)"/>
<ellipse cx="865" cy="183" rx="7" ry="3" transform="rotate(35 865 183)"/>
<ellipse cx="884" cy="197" rx="10" ry="4" transform="rotate(50 884 197)"/>
<ellipse cx="852" cy="174" rx="10" ry="4" transform="rotate(35 852 174)"/>
<ellipse cx="877" cy="169" rx="7" ry="4" transform="rotate(70 877 169)"/>
<ellipse cx="909" cy="192" rx="7" ry="3" transform="rotate(70 909 192)"/>
<ellipse cx="878" cy="213" rx="8" ry="4" transform="rotate(-40 878 213)"/>
<ellipse cx="891" cy="174" rx="11" ry="3" transform="rotate(-40 891 174)"/>
<ellipse cx="858" cy="169" rx="9" ry="3" transform="rotate(70 858 169)"/>
<ellipse cx="895" cy="214" rx="7" ry="4" transform="rotate(70 895 214)"/>
<ellipse cx="901" cy="204" rx="5" ry="4" transform="rotate(70 901 204)"/>
<ellipse cx="880" cy="201" rx="10" ry="5" transform="rotate(-40 880 201)"/>
<ellipse cx="893" cy="169" rx="4" ry="4" transform="rotate(50 893 169)"/>
<ellipse cx="855" cy="184" rx="9" ry="3" transform="rotate(35 855 184)"/>
<ellipse cx="887" cy="184" rx="11" ry="4" transform="rotate(35 887 184)"/>
<ellipse cx="891" cy="175" rx="10" ry="3" transform="rotate(70 891 175)"/>
<ellipse cx="860" cy="208" rx="7" ry="4" transform="rotate(35 860 208)"/>
<ellipse cx="907" cy="207" rx="8" ry="3" transform="rotate(-40 907 207)"/>
<ellipse cx="887" cy="201" rx="10" ry="4" transform="rotate(50 887 201)"/>
<ellipse cx="894" cy="169" rx="5" ry="5" transform="rotate(50 894 169)"/>
<ellipse cx="876" cy="212" rx="7" ry="4" transform="rotate(50 876 212)"/>
<ellipse cx="803" cy="77" rx="7" ry="4" transform="rotate(20 803 77)"/>
<ellipse cx="722" cy="88" rx="8" ry="5" transform="rotate(-40 722 88)"/>
<ellipse cx="726" cy="71" rx="10" ry="5" transform="rotate(-20 726 71)"/>
<ellipse cx="724" cy="114" rx="10" ry="4" transform="rotate(35 724 114)"/>
<ellipse cx="735" cy="68" rx="8" ry="4" transform="rotate(-20 735 68)"/>
<ellipse cx="806" cy="106" rx="11" ry="3" transform="rotate(-40 806 106)"/>
<ellipse cx="788" cy="91" rx="5" ry="3" transform="rotate(-40 788 91)"/>
<ellipse cx="807" cy="91" rx="5" ry="5" transform="rotate(-40 807 91)"/>
<ellipse cx="717" cy="98" rx="10" ry="5" transform="rotate(50 717 98)"/>
<ellipse cx="731" cy="93" rx="5" ry="3" transform="rotate(-40 731 93)"/>
<ellipse cx="709" cy="105" rx="7" ry="4" transform="rotate(35 709 105)"/>
<ellipse cx="805" cy="114" rx="6" ry="5" transform="rotate(35 805 114)"/>
<ellipse cx="740" cy="69" rx="8" ry="4" transform="rotate(-20 740 69)"/>
<ellipse cx="731" cy="65" rx="6" ry="4" transform="rotate(-40 731 65)"/>
<ellipse cx="685" cy="122" rx="10" ry="4" transform="rotate(50 685 122)"/>
<ellipse cx="714" cy="119" rx="6" ry="3" transform="rotate(35 714 119)"/>
<ellipse cx="803" cy="112" rx="11" ry="3" transform="rotate(-40 803 112)"/>
<ellipse cx="734" cy="123" rx="7" ry="3" transform="rotate(-40 734 123)"/>
<ellipse cx="769" cy="115" rx="7" ry="5" transform="rotate(-40 769 115)"/>
<ellipse cx="818" cy="101" rx="10" ry="4" transform="rotate(-40 818 101)"/>
<ellipse cx="961" cy="31" rx="8" ry="5" transform="rotate(70 961 31)"/>
<ellipse cx="1001" cy="12" rx="10" ry="3" transform="rotate(-20 1001 12)"/>
<ellipse cx="1079" cy="14" rx="4" ry="3" transform="rotate(20 1079 14)"/>
<ellipse cx="929" cy="31" rx="4" ry="5" transform="rotate(20 929 31)"/>
<ellipse cx="1046" cy="38" rx="9" ry="5" transform="rotate(-40 1046 38)"/>
<ellipse cx="936" cy="19" rx="4" ry="3" transform="rotate(70 936 19)"/>
<ellipse cx="968" cy="33" rx="9" ry="3" transform="rotate(20 968 33)"/>
<ellipse cx="979" cy="23" rx="7" ry="3" transform="rotate(35 979 23)"/>
<ellipse cx="958" cy="10" rx="9" ry="3" transform="rotate(70 958 10)"/>
<ellipse cx="1066" cy="43" rx="5" ry="5" transform="rotate(-40 1066 43)"/>
<ellipse cx="1069" cy="46" rx="10" ry="3" transform="rotate(35 1069 46)"/>
<ellipse cx="1073" cy="49" rx="7" ry="3" transform="rotate(-40 1073 49)"/>
<ellipse cx="992" cy="20" rx="10" ry="4" transform="rotate(70 992 20)"/>
<ellipse cx="979" cy="20" rx="9" ry="3" transform="rotate(35 979 20)"/>
<ellipse cx="1009" cy="10" rx="10" ry="3" transform="rotate(35 1009 10)"/>
<ellipse cx="959" cy="4" rx="8" ry="3" transform="rotate(-20 959 4)"/>
<ellipse cx="962" cy="8" rx="7" ry="4" transform="rotate(-20 962 8)"/>
<ellipse cx="1077" cy="6" rx="10" ry="4" transform="rotate(-20 1077 6)"/>
<ellipse cx="1010" cy="45" rx="5" ry="4" transform="rotate(20 1010 45)"/>
<ellipse cx="989" cy="16" rx="6" ry="3" transform="rotate(35 989 16)"/>
<ellipse cx="966" cy="48" rx="4" ry="4" transform="rotate(20 966 48)"/>
<ellipse cx="943" cy="35" rx="7" ry="4" transform="rotate(50 943 35)"/>
<ellipse cx="942" cy="3" rx="10" ry="4" transform="rotate(-20 942 3)"/>
<ellipse cx="978" cy="5" rx="7" ry="3" transform="rotate(-20 978 5)"/>
<ellipse cx="942" cy="12" rx="9" ry="4" transform="rotate(-20 942 12)"/>
<ellipse cx="1136" cy="63" rx="10" ry="4" transform="rotate(20 1136 63)"/>
<ellipse cx="1068" cy="21" rx="9" ry="4" transform="rotate(-20 1068 21)"/>
<ellipse cx="1133" cy="25" rx="4" ry="4" transform="rotate(35 1133 25)"/>
<ellipse cx="1175" cy="68" rx="8" ry="3" transform="rotate(20 1175 68)"/>
<ellipse cx="1175" cy="65" rx="7" ry="3" transform="rotate(35 1175 65)"/>
<ellipse cx="1061" cy="53" rx="6" ry="4" transform="rotate(20 1061 53)"/>
<ellipse cx="1046" cy="55" rx="8" ry="5" transform="rotate(20 1046 55)"/>
<ellipse cx="1123" cy="40" rx="8" ry="3" transform="rotate(70 1123 40)"/>
<ellipse cx="1079" cy="63" rx="10" ry="4" transform="rotate(35 1079 63)"/>
<ellipse cx="1132" cy="67" rx="6" ry="3" transform="rotate(70 1132 67)"/>
<ellipse cx="1119" cy="44" rx="8" ry="4" transform="rotate(-40 1119 44)"/>
<ellipse cx="1079" cy="18" rx="8" ry="3" transform="rotate(20 1079 18)"/>
<ellipse cx="1080" cy="62" rx="4" ry="3" transform="rotate(70 1080 62)"/>
<ellipse cx="1158" cy="29" rx="10" ry="4" transform="rotate(35 1158 29)"/>
<ellipse cx="1124" cy="55" rx="5" ry="5" transform="rotate(70 1124 55)"/>
<ellipse cx="1069" cy="29" rx="7" ry="4" transform="rotate(20 1069 29)"/>
<ellipse cx="1058" cy="20" rx="10" ry="4" transform="rotate(-20 1058 20)"/>
<ellipse cx="1178" cy="22" rx="8" ry="4" transform="rotate(-20 1178 22)"/>
<ellipse cx="1192" cy="14" rx="8" ry="4" transform="rotate(50 1192 14)"/>
<ellipse cx="1174" cy="45" rx="7" ry="5" transform="rotate(20 1174 45)"/>
<ellipse cx="1094" cy="27" rx="6" ry="4" transform="rotate(50 1094 27)"/>
<ellipse cx="1169" cy="68" rx="10" ry="5" transform="rotate(-40 1169 68)"/>
<ellipse cx="1092" cy="22" rx="9" ry="3" transform="rotate(35 1092 22)"/>
<ellipse cx="1146" cy="14" rx="5" ry="3" transform="rotate(20 1146 14)"/>
<ellipse cx="1109" cy="43" rx="4" ry="3" transform="rotate(35 1109 43)"/>
<ellipse cx="1164" cy="69" rx="8" ry="5" transform="rotate(-40 1164 69)"/>
<ellipse cx="1045" cy="51" rx="6" ry="4" transform="rotate(20 1045 51)"/>
<ellipse cx="1141" cy="61" rx="4" ry="3" transform="rotate(-40 1141 61)"/>
<ellipse cx="1123" cy="39" rx="11" ry="3" transform="rotate(20 1123 39)"/>
<ellipse cx="1096" cy="23" rx="4" ry="5" transform="rotate(50 1096 23)"/>
<ellipse cx="764" cy="18" rx="8" ry="5" transform="rotate(35 764 18)"/>
<ellipse cx="640" cy="21" rx="6" ry="4" transform="rotate(20 640 21)"/>
<ellipse cx="664" cy="57" rx="9" ry="3" transform="rotate(35 664 57)"/>
<ellipse cx="718" cy="47" rx="9" ry="3" transform="rotate(70 718 47)"/>
<ellipse cx="679" cy="67" rx="6" ry="4" transform="rotate(20 679 67)"/>
<ellipse cx="625" cy="33" rx="5" ry="4" transform="rotate(50 625 33)"/>
<ellipse cx="683" cy="68" rx="5" ry="5" transform="rotate(20 683 68)"/>
<ellipse cx="709" cy="42" rx="6" ry="5" transform="rotate(20 709 42)"/>
<ellipse cx="629" cy="14" rx="8" ry="4" transform="rotate(20 629 14)"/>
<ellipse cx="690" cy="17" rx="7" ry="4" transform="rotate(70 690 17)"/>
<ellipse cx="742" cy="44" rx="11" ry="4" transform="rotate(-20 742 44)"/>
<ellipse cx="687" cy="53" rx="5" ry="3" transform="rotate(50 687 53)"/>
<ellipse cx="756" cy="62" rx="8" ry="4" transform="rotate(70 756 62)"/>
<ellipse cx="768" cy="73" rx="6" ry="4" transform="rotate(70 768 73)"/>
<ellipse cx="766" cy="21" rx="10" ry="3" transform="rotate(50 766 21)"/>
<ellipse cx="134" cy="173" rx="11" ry="4" transform="rotate(35 134 173)"/>
<ellipse cx="147" cy="155" rx="8" ry="3" transform="rotate(35 147 155)"/>
<ellipse cx="140" cy="156" rx="6" ry="3" transform="rotate(50 140 156)"/>
<ellipse cx="133" cy="164" rx="6" ry="4" transform="rotate(35 133 164)"/>
<ellipse cx="124" cy="157" rx="8" ry="5" transform="rotate(35 124 157)"/>
<ellipse cx="134" cy="180" rx="5" ry="5" transform="rotate(20 134 180)"/>
<ellipse cx="153" cy="182" rx="6" ry="3" transform="rotate(35 153 182)"/>
<ellipse cx="150" cy="209" rx="4" ry="3" transform="rotate(35 150 209)"/>
<ellipse cx="120" cy="176" rx="6" ry="4" transform="rotate(35 120 176)"/>
<ellipse cx="131" cy="174" rx="9" ry="3" transform="rotate(20 131 174)"/>
<ellipse cx="107" cy="187" rx="7" ry="3" transform="rotate(-40 107 187)"/>
<ellipse cx="131" cy="141" rx="7" ry="4" transform="rotate(50 131 141)"/>
<ellipse cx="147" cy="318" rx="5" ry="4" transform="rotate(35 147 318)"/>
<ellipse cx="128" cy="365" rx="11" ry="3" transform="rotate(50 128 365)"/>
<ellipse cx="140" cy="312" rx="7" ry="3" transform="rotate(-40 140 312)"/>
<ellipse cx="143" cy="354" rx="5" ry="5" transform="rotate(70 143 354)"/>
<ellipse cx="124" cy="397" rx="8" ry="5" transform="rotate(70 124 397)"/>
<ellipse cx="116" cy="332" rx="8" ry="4" transform="rotate(-20 116 332)"/>
<ellipse cx="126" cy="309" rx="8" ry="3" transform="rotate(50 126 309)"/>
<ellipse cx="150" cy="367" rx="4" ry="4" transform="rotate(-40 150 367)"/>
<ellipse cx="122" cy="372" rx="4" ry="3" transform="rotate(-40 122 372)"/>
<ellipse cx="133" cy="370" rx="5" ry="4" transform="rotate(50 133 370)"/>
<ellipse cx="154" cy="530" rx="10" ry="4" transform="rotate(-20 154 530)"/>
<ellipse cx="154" cy="484" rx="5" ry="3" transform="rotate(50 154 484)"/>
<ellipse cx="126" cy="453" rx="5" ry="4" transform="rotate(35 126 453)"/>
<ellipse cx="157" cy="524" rx="4" ry="3" transform="rotate(50 157 524)"/>
<ellipse cx="139" cy="515" rx="6" ry="3" transform="rotate(20 139 515)"/>
<ellipse cx="158" cy="529" rx="11" ry="3" transform="rotate(-20 158 529)"/>
<ellipse cx="147" cy="482" rx="4" ry="5" transform="rotate(50 147 482)"/>
<ellipse cx="166" cy="447" rx="4" ry="3" transform="rotate(-20 166 447)"/>
<ellipse cx="123" cy="536" rx="10" ry="3" transform="rotate(35 123 536)"/>
<ellipse cx="138" cy="503" rx="11" ry="4" transform="rotate(-40 138 503)"/>
<ellipse cx="135" cy="482" rx="9" ry="3" transform="rotate(20 135 482)"/>
<ellipse cx="144" cy="514" rx="4" ry="5" transform="rotate(-40 144 514)"/>
<ellipse cx="107" cy="572" rx="5" ry="5" transform="rotate(20 107 572)"/>
<ellipse cx="116" cy="572" rx="6" ry="5" transform="rotate(20 116 572)"/>
<ellipse cx="116" cy="548" rx="5" ry="5" transform="rotate(20 116 548)"/>
<ellipse cx="122" cy="574" rx="7" ry="3" transform="rotate(35 122 574)"/>
<ellipse cx="101" cy="596" rx="6" ry="3" transform="rotate(70 101 596)"/>
<ellipse cx="105" cy="559" rx="8" ry="4" transform="rotate(50 105 559)"/>
<ellipse cx="118" cy="610" rx="10" ry="3" transform="rotate(20 118 610)"/>
<ellipse cx="109" cy="575" rx="8" ry="4" transform="rotate(20 109 575)"/>
<ellipse cx="138" cy="583" rx="6" ry="4" transform="rotate(-20 138 583)"/>
<ellipse cx="138" cy="623" rx="8" ry="4" transform="rotate(20 138 623)"/>
<ellipse cx="253" cy="547" rx="8" ry="3" transform="rotate(-40 253 547)"/>
<ellipse cx="264" cy="528" rx="10" ry="4" transform="rotate(35 264 528)"/>
<ellipse cx="212" cy="566" rx="5" ry="3" transform="rotate(70 212 566)"/>
<ellipse cx="217" cy="534" rx="10" ry="3" transform="rotate(70 217 534)"/>
<ellipse cx="281" cy="527" rx="10" ry="5" transform="rotate(20 281 527)"/>
<ellipse cx="225" cy="566" rx="5" ry="3" transform="rotate(70 225 566)"/>
<ellipse cx="242" cy="544" rx="10" ry="4" transform="rotate(70 242 544)"/>
<ellipse cx="281" cy="575" rx="5" ry="3" transform="rotate(-40 281 575)"/>
<ellipse cx="192" cy="461" rx="9" ry="5" transform="rotate(-40 192 461)"/>
<ellipse cx="210" cy="455" rx="6" ry="5" transform="rotate(20 210 455)"/>
<ellipse cx="224" cy="419" rx="6" ry="3" transform="rotate(50 224 419)"/>
<ellipse cx="214" cy="456" rx="4" ry="3" transform="rotate(-20 214 456)"/>
<ellipse cx="196" cy="458" rx="5" ry="4" transform="rotate(50 196 458)"/>
<ellipse cx="189" cy="451" rx="5" ry="5" transform="rotate(50 189 451)"/>
<ellipse cx="560" cy="315" rx="10" ry="4" transform="rotate(50 560 315)"/>
<ellipse cx="545" cy="273" rx="10" ry="4" transform="rotate(20 545 273)"/>
<ellipse cx="600" cy="343" rx="8" ry="4" transform="rotate(-20 600 343)"/>
<ellipse cx="578" cy="276" rx="6" ry="4" transform="rotate(20 578 276)"/>
<ellipse cx="585" cy="280" rx="9" ry="3" transform="rotate(70 585 280)"/>
<ellipse cx="572" cy="291" rx="8" ry="3" transform="rotate(35 572 291)"/>
<ellipse cx="554" cy="300" rx="8" ry="4" transform="rotate(70 554 300)"/>
<ellipse cx="573" cy="314" rx="9" ry="3" transform="rotate(70 573 314)"/>
<ellipse cx="561" cy="347" rx="5" ry="4" transform="rotate(-40 561 347)"/>
<ellipse cx="605" cy="339" rx="8" ry="3" transform="rotate(-20 605 339)"/>
<ellipse cx="607" cy="324" rx="8" ry="3" transform="rotate(-40 607 324)"/>
<ellipse cx="527" cy="301" rx="5" ry="4" transform="rotate(-20 527 301)"/>
<ellipse cx="524" cy="330" rx="9" ry="3" transform="rotate(-20 524 330)"/>
<ellipse cx="511" cy="328" rx="5" ry="4" transform="rotate(70 511 328)"/>
<ellipse cx="540" cy="344" rx="5" ry="4" transform="rotate(20 540 344)"/>
<ellipse cx="573" cy="282" rx="7" ry="5" transform="rotate(70 573 282)"/>
<ellipse cx="577" cy="321" rx="7" ry="4" transform="rotate(-20 577 321)"/>
<ellipse cx="521" cy="296" rx="7" ry="3" transform="rotate(-40 521 296)"/>
<ellipse cx="600" cy="297" rx="5" ry="3" transform="rotate(-40 600 297)"/>
<ellipse cx="526" cy="309" rx="8" ry="3" transform="rotate(50 526 309)"/>
<ellipse cx="586" cy="364" rx="11" ry="4" transform="rotate(-40 586 364)"/>
<ellipse cx="640" cy="383" rx="9" ry="3" transform="rotate(70 640 383)"/>
<ellipse cx="619" cy="389" rx="5" ry="4" transform="rotate(-40 619 389)"/>
<ellipse cx="609" cy="368" rx="6" ry="4" transform="rotate(70 609 368)"/>
<ellipse cx="632" cy="378" rx="6" ry="3" transform="rotate(-40 632 378)"/>
<ellipse cx="582" cy="387" rx="5" ry="3" transform="rotate(70 582 387)"/>
<ellipse cx="622" cy="417" rx="9" ry="3" transform="rotate(70 622 417)"/>
<ellipse cx="646" cy="408" rx="6" ry="3" transform="rotate(20 646 408)"/>
<ellipse cx="606" cy="385" rx="8" ry="3" transform="rotate(20 606 385)"/>
<ellipse cx="599" cy="365" rx="8" ry="4" transform="rotate(70 599 365)"/>
<ellipse cx="612" cy="366" rx="6" ry="4" transform="rotate(70 612 366)"/>
<ellipse cx="593" cy="381" rx="8" ry="3" transform="rotate(70 593 381)"/>
<ellipse cx="658" cy="297" rx="8" ry="4" transform="rotate(-40 658 297)"/>
<ellipse cx="708" cy="331" rx="6" ry="3" transform="rotate(-40 708 331)"/>
<ellipse cx="707" cy="369" rx="10" ry="4" transform="rotate(20 707 369)"/>
<ellipse cx="646" cy="289" rx="9" ry="5" transform="rotate(-40 646 289)"/>
<ellipse cx="675" cy="350" rx="10" ry="5" transform="rotate(-20 675 350)"/>
<ellipse cx="670" cy="283" rx="10" ry="4" transform="rotate(50 670 283)"/>
<ellipse cx="656" cy="292" rx="6" ry="4" transform="rotate(50 656 292)"/>
<ellipse cx="713" cy="370" rx="11" ry="5" transform="rotate(50 713 370)"/>
<ellipse cx="647" cy="364" rx="9" ry="3" transform="rotate(70 647 364)"/>
<ellipse cx="664" cy="340" rx="11" ry="4" transform="rotate(70 664 340)"/>
<ellipse cx="651" cy="370" rx="8" ry="4" transform="rotate(-20 651 370)"/>
<ellipse cx="658" cy="357" rx="9" ry="3" transform="rotate(50 658 357)"/>
<ellipse cx="670" cy="341" rx="7" ry="4" transform="rotate(50 670 341)"/>
<ellipse cx="675" cy="309" rx="6" ry="5" transform="rotate(-20 675 309)"/>
<ellipse cx="684" cy="294" rx="10" ry="3" transform="rotate(-40 684 294)"/>
<ellipse cx="655" cy="350" rx="9" ry="3" transform="rotate(35 655 350)"/>
<ellipse cx="544" cy="537" rx="5" ry="4" transform="rotate(50 544 537)"/>
<ellipse cx="564" cy="554" rx="9" ry="5" transform="rotate(-20 564 554)"/>
<ellipse cx="582" cy="536" rx="9" ry="4" transform="rotate(-40 582 536)"/>
<ellipse cx="568" cy="561" rx="8" ry="4" transform="rotate(70 568 561)"/>
<ellipse cx="554" cy="513" rx="11" ry="4" transform="rotate(-40 554 513)"/>
<ellipse cx="538" cy="550" rx="4" ry="3" transform="rotate(20 538 550)"/>
<ellipse cx="533" cy="545" rx="11" ry="4" transform="rotate(-40 533 545)"/>
<ellipse cx="572" cy="529" rx="10" ry="4" transform="rotate(-20 572 529)"/>
<ellipse cx="525" cy="614" rx="10" ry="3" transform="rotate(70 525 614)"/>
<ellipse cx="547" cy="608" rx="9" ry="3" transform="rotate(20 547 608)"/>
<ellipse cx="490" cy="587" rx="9" ry="5" transform="rotate(70 490 587)"/>
<ellipse cx="519" cy="609" rx="6" ry="3" transform="rotate(20 519 609)"/>
<ellipse cx="544" cy="574" rx="10" ry="4" transform="rotate(20 544 574)"/>
<ellipse cx="508" cy="603" rx="4" ry="5" transform="rotate(35 508 603)"/>
<ellipse cx="489" cy="569" rx="5" ry="5" transform="rotate(-20 489 569)"/>
<ellipse cx="492" cy="615" rx="10" ry="4" transform="rotate(-20 492 615)"/>
<ellipse cx="407" cy="551" rx="11" ry="4" transform="rotate(20 407 551)"/>
<ellipse cx="436" cy="539" rx="6" ry="3" transform="rotate(50 436 539)"/>
<ellipse cx="399" cy="540" rx="10" ry="3" transform="rotate(50 399 540)"/>
<ellipse cx="425" cy="572" rx="7" ry="4" transform="rotate(-20 425 572)"/>
<ellipse cx="415" cy="560" rx="6" ry="5" transform="rotate(50 415 560)"/>
<ellipse cx="366" cy="554" rx="6" ry="5" transform="rotate(50 366 554)"/>
<ellipse cx="410" cy="549" rx="10" ry="4" transform="rotate(20 410 549)"/>
<ellipse cx="406" cy="557" rx="6" ry="3" transform="rotate(50 406 557)"/>
<ellipse cx="329" cy="387" rx="6" ry="5" transform="rotate(50 329 387)"/>
<ellipse cx="303" cy="382" rx="9" ry="3" transform="rotate(20 303 382)"/>
<ellipse cx="304" cy="432" rx="6" ry="4" transform="rotate(50 304 432)"/>
<ellipse cx="357" cy="433" rx="4" ry="4" transform="rotate(-40 357 433)"/>
<ellipse cx="352" cy="419" rx="8" ry="4" transform="rotate(20 352 419)"/>
<ellipse cx="488" cy="278" rx="6" ry="4" transform="rotate(-20 488 278)"/>
<ellipse cx="481" cy="253" rx="9" ry="4" transform="rotate(50 481 253)"/>
<ellipse cx="491" cy="250" rx="10" ry="4" transform="rotate(20 491 250)"/>
<ellipse cx="444" cy="255" rx="6" ry="5" transform="rotate(35 444 255)"/>
<ellipse cx="470" cy="283" rx="10" ry="5" transform="rotate(-20 470 283)"/>
<ellipse cx="448" cy="238" rx="10" ry="4" transform="rotate(35 448 238)"/>
<ellipse cx="690" cy="239" rx="11" ry="4" transform="rotate(-20 690 239)"/>
<ellipse cx="680" cy="212" rx="9" ry="4" transform="rotate(20 680 212)"/>
<ellipse cx="657" cy="204" rx="10" ry="4" transform="rotate(20 657 204)"/>
<ellipse cx="708" cy="252" rx="6" ry="4" transform="rotate(35 708 252)"/>
<ellipse cx="722" cy="248" rx="10" ry="3" transform="rotate(-20 722 248)"/>
<ellipse cx="678" cy="208" rx="4" ry="3" transform="rotate(20 678 208)"/>
<ellipse cx="674" cy="194" rx="4" ry="4" transform="rotate(50 674 194)"/>
<ellipse cx="678" cy="223" rx="5" ry="3" transform="rotate(-40 678 223)"/>
<ellipse cx="746" cy="229" rx="5" ry="5" transform="rotate(50 746 229)"/>
<ellipse cx="684" cy="201" rx="5" ry="4" transform="rotate(-40 684 201)"/>
<ellipse cx="611" cy="268" rx="5" ry="3" transform="rotate(70 611 268)"/>
<ellipse cx="562" cy="242" rx="8" ry="5" transform="rotate(-20 562 242)"/>
<ellipse cx="565" cy="238" rx="4" ry="4" transform="rotate(20 565 238)"/>
<ellipse cx="622" cy="272" rx="7" ry="5" transform="rotate(-40 622 272)"/>
<ellipse cx="562" cy="232" rx="9" ry="3" transform="rotate(35 562 232)"/>
<ellipse cx="609" cy="256" rx="6" ry="3" transform="rotate(-20 609 256)"/>
<ellipse cx="577" cy="245" rx="10" ry="3" transform="rotate(20 577 245)"/>
<ellipse cx="594" cy="245" rx="8" ry="4" transform="rotate(70 594 245)"/>
<ellipse cx="499" cy="356" rx="6" ry="4" transform="rotate(70 499 356)"/>
<ellipse cx="479" cy="334" rx="9" ry="4" transform="rotate(50 479 334)"/>
<ellipse cx="499" cy="351" rx="6" ry="4" transform="rotate(20 499 351)"/>
<ellipse cx="465" cy="333" rx="7" ry="4" transform="rotate(20 465 333)"/>
<ellipse cx="532" cy="638" rx="7" ry="5" transform="rotate(-40 532 638)"/>
<ellipse cx="570" cy="618" rx="8" ry="3" transform="rotate(-20 570 618)"/>
<ellipse cx="541" cy="637" rx="9" ry="5" transform="rotate(70 541 637)"/>
<ellipse cx="588" cy="644" rx="8" ry="3" transform="rotate(70 588 644)"/>
<ellipse cx="539" cy="652" rx="7" ry="4" transform="rotate(20 539 652)"/>
<ellipse cx="592" cy="629" rx="5" ry="4" transform="rotate(-40 592 629)"/>
<ellipse cx="326" cy="680" rx="4" ry="4" transform="rotate(35 326 680)"/>
<ellipse cx="360" cy="669" rx="6" ry="3" transform="rotate(35 360 669)"/>
<ellipse cx="377" cy="677" rx="6" ry="3" transform="rotate(20 377 677)"/>
<ellipse cx="363" cy="665" rx="6" ry="3" transform="rotate(35 363 665)"/>
<ellipse cx="359" cy="667" rx="11" ry="3" transform="rotate(50 359 667)"/>
</g>
<g fill="none" stroke="#f3d28f" stroke-width="3.3" stroke-linejoin="round" stroke-linecap="round">
<path d="M146.7 80.6 L176.9 76.6 L205.2 64.5 L221.3 56.5 L253.5 58.5 L285.8 60.5 L318.1 64.5 L342.3 60.5 L374.5 68.5 L406.8 74.6 L431.0 72.6 L463.2 76.6 L495.5 80.6 L527.7 86.7 L560.0 92.7"/>
<path d="M146.7 80.6 L156.8 100.8 L181.0 108.9 L205.2 116.9 L229.4 133.1 L249.5 145.2 L285.8 153.2 L310.0 157.3 L322.1 149.2"/>
<path d="M322.1 149.2 L322.1 161.3 L318.1 181.5 L310.0 201.6 L318.1 209.7 L334.2 225.8 L350.3 241.9 L374.5 262.1 L398.7 290.3 L422.9 318.5 L439.0 334.7"/>
<path d="M112.4 193.5 L108.4 177.4 L100.3 153.2 L104.4 129.0 L120.5 108.9 L136.6 92.7 L146.7 80.6"/>
<path d="M112.4 193.5 L136.6 201.6 L164.8 201.6 L193.1 205.6 L221.3 197.6 L253.5 193.5 L285.8 197.6 L310.0 201.6"/>
<path d="M322.1 149.2 L350.3 161.3 L382.6 165.3 L414.8 161.3 L447.1 169.4 L479.4 153.2 L503.5 137.1 L527.7 116.9 L543.9 96.8"/>
<path d="M447.1 169.4 L451.1 201.6 L455.2 241.9 L459.2 282.3 L457.2 306.5 L447.1 334.7"/>
<path d="M447.1 68.5 L443.1 100.8 L447.1 137.1 L447.1 169.4"/>
<path d="M310.0 201.6 L342.3 213.7 L374.5 221.8 L398.7 201.6 L422.9 181.5 L447.1 169.4"/>
<path d="M301.9 64.5 L301.9 88.7 L306.0 121.0 L322.1 149.2"/>
<path d="M234.2 327.4 L261.6 332.7 L289.8 336.7 L318.1 350.8 L350.3 346.8 L382.6 342.7 L410.8 338.7 L439.0 334.7"/>
<path d="M289.8 336.7 L301.9 306.5 L310.0 274.2 L310.0 241.9 L310.0 201.6"/>
<path d="M374.5 221.8 L350.3 241.9 L326.1 282.3 L301.9 314.5 L289.8 336.7"/>
<path d="M120.5 241.9 L112.4 193.5"/>
<path d="M447.1 169.4 L479.4 173.4 L503.5 161.3 L535.8 157.3 L560.0 153.2"/>
<path d="M540.3 84.7 L568.5 100.8 L588.7 121.0 L600.8 149.2 L592.7 173.4 L604.8 201.6 L629.0 225.8 L645.2 233.9"/>
<path d="M645.2 233.9 L677.4 241.9 L709.7 246.0 L741.9 241.9 L774.2 250.0 L798.4 262.1 L822.6 262.1 L842.7 254.0"/>
<path d="M645.2 233.9 L661.3 201.6 L677.4 177.4 L681.5 153.2 L677.4 133.1"/>
<path d="M709.7 379.8 L725.8 354.8 L741.9 330.6 L758.1 310.5 L774.2 290.3 L798.4 278.2 L822.6 270.2 L842.7 258.1 L862.9 241.9 L883.1 229.8 L899.2 209.7 L907.3 185.5 L911.3 161.3 L911.3 137.1 L913.3 112.9 L911.3 92.7 L927.4 72.6 L939.5 64.5"/>
<path d="M600.8 52.4 L629.0 56.5 L661.3 60.5 L689.5 80.6 L717.7 92.7 L741.9 96.8 L774.2 84.7 L798.4 60.5 L806.5 50.4"/>
<path d="M806.5 50.4 L822.6 72.6 L850.8 84.7 L883.1 92.7 L911.3 96.8"/>
<path d="M806.5 50.4 L798.4 24.2 L782.3 0.0"/>
<path d="M806.5 50.4 L830.6 24.2 L862.9 8.1 L887.1 0.0"/>
<path d="M600.8 52.4 L608.9 32.3 L621.0 0.0"/>
<path d="M540.3 84.7 L564.5 76.6 L584.7 72.6 L600.8 52.4"/>
<path d="M822.6 72.6 L818.5 100.8 L822.6 133.1"/>
<path d="M588.7 121.0 L576.6 100.8 L568.5 100.8"/>
<path d="M677.4 133.1 L661.3 104.8 L661.3 60.5"/>
<path d="M209.4 482.8 L225.5 480.8 L249.7 478.8 L269.8 476.8 L306.1 430.4 L314.2 402.2 L322.3 394.1 L354.5 390.1 L374.7 382.0"/>
<path d="M290.0 607.8 L281.9 579.6 L273.9 539.3 L267.8 511.1 L269.8 476.8 L265.8 438.5 L269.8 410.3 L275.9 386.1 L277.9 378.0 L286.0 337.7"/>
<path d="M377.1 572.8 L346.5 587.7 L322.3 603.8 L290.0 607.8"/>
<path d="M290.0 607.8 L310.2 617.9"/>
<path d="M290.0 607.8 L257.7 615.9 L229.5 619.9 L201.3 624.0 L173.1 636.1 L140.8 634.0 L116.6 619.9 L96.5 624.0"/>
<path d="M290.0 607.8 L298.1 636.1 L290.0 668.3 L281.9 676.4"/>
<path d="M298.1 660.3 L314.2 692.5 L330.3 720.7"/>
<path d="M330.3 720.7 L354.5 696.5 L377.1 686.1"/>
<path d="M100.5 499.0 L112.6 515.1 L120.6 539.3 L128.7 563.5 L140.8 587.7 L144.8 611.9 L140.8 634.0"/>
<path d="M552.7 426.4 L556.8 450.6 L568.9 470.7 L601.1 478.8 L637.4 484.9 L653.5 474.8 L669.7 458.6"/>
<path d="M637.4 484.9 L649.5 503.0 L669.7 511.1 L685.8 511.1"/>
<path d="M568.9 470.7 L589.0 494.9 L597.1 523.2 L613.2 543.3 L621.3 551.4 L613.2 571.5 L593.1 587.7 L581.0 595.7"/>
<path d="M677.7 418.3 L669.7 442.5 L665.6 470.7 L669.7 490.9 L665.6 515.1 L649.5 539.3 L621.3 555.4 L597.1 579.6 L589.0 591.7"/>
<path d="M677.7 418.3 L689.8 394.1 L701.9 378.0"/>
<path d="M461.3 338.0 L489.5 321.9 L517.7 301.7 L541.9 277.5 L574.2 265.4 L606.5 253.3 L634.7 237.2 L646.8 231.1"/>
<path d="M461.3 338.0 L477.4 362.2 L509.7 386.4 L533.9 406.5 L554.0 426.7 L582.3 426.7 L614.5 422.7 L646.8 430.7 L671.0 430.7"/>
<path d="M461.3 350.1 L465.3 382.4 L469.4 414.6 L471.4 454.9 L469.4 498.1"/>
<path d="M453.2 346.1 L433.1 362.2 L408.9 374.3 L380.6 382.4"/>
<path d="M638.7 237.2 L622.6 261.4 L614.5 293.6 L618.5 325.9 L634.7 354.1 L654.8 378.3 L671.0 402.5 L679.0 414.6"/>
<path d="M471.4 454.9 L501.6 459.0 L525.8 446.9 L554.0 426.7"/>
<path d="M646.8 231.1 L679.0 241.2 L711.3 245.3 L735.5 241.2 L767.7 249.3 L800.0 257.4"/>
<path d="M461.3 350.1 L453.2 374.3 L441.1 390.4 L421.0 402.5"/>
<path d="M117.1 223.0 L121.4 251.6 L117.1 280.1 L118.6 308.7 L122.9 337.3 L122.9 365.9 L108.6 394.4 L104.3 405.9 L111.4 423.0 L111.4 434.4 L97.1 457.3 L85.7 471.6 L97.1 488.7 L111.4 508.7"/>
<path d="M122.9 321.6 L148.6 318.7 L157.1 324.4 L182.9 324.4 L205.7 324.4 L211.4 331.6 L234.3 327.3"/>
<path d="M117.1 280.1 L137.1 275.9 L174.3 265.9 L188.6 257.3"/>
<path d="M188.6 223.0 L180.0 240.1 L180.0 260.1 L162.9 291.6 L157.1 324.4"/>
<path d="M211.4 331.6 L200.0 348.7 L191.4 365.9 L194.3 388.7 L182.9 405.9 L165.7 420.1 L140.0 427.3 L111.4 428.7"/>
<path d="M97.1 488.7 L125.7 497.3 L154.3 497.3 L182.9 487.3 L200.0 485.9 L222.9 484.4"/>
<path d="M111.4 434.4 L108.6 454.4 L97.1 471.6 L85.7 471.6"/>
<path d="M470.0 619.3 L490.6 615.4 L506.1 611.5 L529.4 596.1 L568.1 592.2 L590.0 588.3 L606.8 572.8 L619.7 559.9 L630.0 549.6"/>
<path d="M501.0 629.6 L529.4 632.2 L539.7 647.7 L534.5 658.0 L516.5 668.3"/>
<path d="M377.1 686.4 L397.7 676.1 L426.1 670.9 L464.8 673.5 L490.6 669.6 L516.5 668.3 L552.6 658.0 L565.5 642.5 L573.2 619.3 L578.4 601.2 L590.0 588.3"/>
<path d="M464.8 498.0 L466.1 518.6 L459.7 541.9 L449.4 554.8 L444.2 572.8 L457.1 596.1 L462.3 614.1 L464.8 627.0 L462.3 647.7 L464.8 673.5"/>
<path d="M449.4 554.8 L421.0 559.9 L395.2 562.5 L377.1 572.8 L361.6 585.7 L335.8 598.6 L310.0 606.4"/>
<path d="M377.1 572.8 L384.8 596.1 L392.6 621.9 L395.2 642.5 L392.6 660.6 L397.7 676.1"/>
<path d="M310.0 619.3 L341.0 621.9 L369.4 624.5 L392.6 634.8 L423.5 630.9 L454.5 624.5 L470.0 619.3 L501.0 629.6"/>
<path d="M449.4 554.8 L475.2 549.6 L501.0 541.9"/>
<path d="M920.0 83.2 L935.5 70.3 L953.5 59.9 L971.6 49.6 L989.7 36.7 L1007.7 26.4 L1023.2 18.6 L1033.5 8.3 L1036.1 -2.0"/>
<path d="M1007.7 26.4 L1028.4 36.7 L1043.9 47.0 L1064.5 52.2 L1080.0 57.4 L1085.2 72.8 L1090.3 80.6"/>
<path d="M1080.0 57.4 L1100.6 62.5 L1121.3 65.1 L1141.9 67.7 L1162.6 59.9 L1178.1 54.8 L1193.5 47.0 L1203.9 39.3"/>
<path d="M1090.3 80.6 L1105.8 93.5 L1123.9 90.9 L1141.9 75.4 L1141.9 67.7"/>
<path d="M1080.0 57.4 L1087.7 44.5 L1105.8 36.7 L1116.1 18.6 L1121.3 -2.0"/>
<path d="M1043.9 47.0 L1049.0 23.8 L1046.5 5.7 L1054.2 -2.0"/>
<path d="M989.7 36.7 L997.4 13.5 L992.3 -2.0"/>
</g>
<g fill="none" stroke="#868a8f" stroke-width="1.5" stroke-linejoin="round">
<path d="M96.8 212.0 L108.4 202.0 L136.8 189.0 L144.5 194.0 L140.6 207.0 L147.0 217.4 L160.0 209.6 L167.7 213.5 L180.6 209.6 L193.5 217.4 L214.2 201.9 L232.3 204.5 L247.7 201.9 L258.0 212.2 L258.0 225.0 L278.7 240.6 L273.5 253.5 L268.4 255.7 L247.7 268.6 L242.6 286.7 L229.7 289.3 L237.4 307.4 L238.7 333.2 L232.3 359.0 L223.2 365.4 L233.5 377.0 L227.1 392.5 L225.8 411.9 L206.5 413.2 L198.7 423.5 L206.5 433.8 L214.2 454.5 L227.1 469.9 L224.5 482.8 L206.5 495.7 L206.5 503.0 L201.3 522.5 L219.4 544.5 L229.2 541.9 L224.5 556.0 L206.5 561.2 L203.9 572.8 L191.0 593.5 L194.8 624.5"/><path d="M601.0 63.0 L601.6 80.6 L609.4 85.7 L606.8 98.6 L619.7 96.0 L630.0 103.8 L653.5 110.3 L666.5 125.7 L681.9 121.9 L705.2 134.8 L720.6 130.9 L751.6 133.5 L756.8 121.9 L800.6 132.2 L808.4 152.8 L816.1 159.3 L841.9 156.7 L847.1 167.0 L867.7 163.2 L891.0 168.3 L893.5 160.6 L909.0 155.4 L924.5 159.3"/>
</g>
<g font-family="Liberation Sans,DejaVu Sans,sans-serif" stroke-linejoin="round">
<text x="88.0" y="79.0" font-size="17" textLength="80" lengthAdjust="spacingAndGlyphs" fill="#fff" stroke="#fff" stroke-width="4" opacity=".9">A Coruña</text>
<text x="88.0" y="79.0" font-size="17" textLength="80" lengthAdjust="spacingAndGlyphs" fill="#4e5156" stroke="#4e5156" stroke-width="0.45">A Coruña</text>
<text x="103.0" y="248.9" font-size="17" textLength="48" lengthAdjust="spacingAndGlyphs" fill="#fff" stroke="#fff" stroke-width="4" opacity=".9">Braga</text>
<text x="103.0" y="248.9" font-size="17" textLength="48" lengthAdjust="spacingAndGlyphs" fill="#4e5156" stroke="#4e5156" stroke-width="0.45">Braga</text>
<text x="90.0" y="284.9" font-size="17" textLength="47" lengthAdjust="spacingAndGlyphs" fill="#fff" stroke="#fff" stroke-width="4" opacity=".9">Porto</text>
<text x="90.0" y="284.9" font-size="17" textLength="47" lengthAdjust="spacingAndGlyphs" fill="#4e5156" stroke="#4e5156" stroke-width="0.45">Porto</text>
<text x="108.0" y="421.4" font-size="24" font-weight="bold" textLength="100" lengthAdjust="spacingAndGlyphs" fill="#fff" stroke="#fff" stroke-width="4" opacity=".9">Portugal</text>
<text x="108.0" y="421.4" font-size="24" font-weight="bold" textLength="100" lengthAdjust="spacingAndGlyphs" fill="#2a2440" stroke="#2a2440" stroke-width="0.5">Portugal</text>
<text x="53.0" y="489.9" font-size="17" textLength="49" lengthAdjust="spacingAndGlyphs" fill="#fff" stroke="#fff" stroke-width="4" opacity=".9">Lisboa</text>
<text x="53.0" y="489.9" font-size="17" textLength="49" lengthAdjust="spacingAndGlyphs" fill="#4e5156" stroke="#4e5156" stroke-width="0.45">Lisboa</text>
<text x="193.0" y="490.9" font-size="17" textLength="66" lengthAdjust="spacingAndGlyphs" fill="#fff" stroke="#fff" stroke-width="4" opacity=".9">Badajoz</text>
<text x="193.0" y="490.9" font-size="17" textLength="66" lengthAdjust="spacingAndGlyphs" fill="#4e5156" stroke="#4e5156" stroke-width="0.45">Badajoz</text>
<text x="479.0" y="89.0" font-size="17" textLength="51" lengthAdjust="spacingAndGlyphs" fill="#fff" stroke="#fff" stroke-width="4" opacity=".9">Bilbao</text>
<text x="479.0" y="89.0" font-size="17" textLength="51" lengthAdjust="spacingAndGlyphs" fill="#4e5156" stroke="#4e5156" stroke-width="0.45">Bilbao</text>
<text x="423.5" y="175.6" font-size="17" textLength="58" lengthAdjust="spacingAndGlyphs" fill="#fff" stroke="#fff" stroke-width="4" opacity=".9">Burgos</text>
<text x="423.5" y="175.6" font-size="17" textLength="58" lengthAdjust="spacingAndGlyphs" fill="#4e5156" stroke="#4e5156" stroke-width="0.45">Burgos</text>
<text x="342.0" y="224.6" font-size="17" textLength="76" lengthAdjust="spacingAndGlyphs" fill="#fff" stroke="#fff" stroke-width="4" opacity=".9">Valladolid</text>
<text x="342.0" y="224.6" font-size="17" textLength="76" lengthAdjust="spacingAndGlyphs" fill="#4e5156" stroke="#4e5156" stroke-width="0.45">Valladolid</text>
<text x="612.0" y="225.9" font-size="17" textLength="70" lengthAdjust="spacingAndGlyphs" fill="#fff" stroke="#fff" stroke-width="4" opacity=".9">Zaragoza</text>
<text x="612.0" y="225.9" font-size="17" textLength="70" lengthAdjust="spacingAndGlyphs" fill="#4e5156" stroke="#4e5156" stroke-width="0.45">Zaragoza</text>
<text x="777.0" y="155.7" font-size="19" font-weight="bold" textLength="78" lengthAdjust="spacingAndGlyphs" fill="#fff" stroke="#fff" stroke-width="4" opacity=".9">Andorra</text>
<text x="777.0" y="155.7" font-size="19" font-weight="bold" textLength="78" lengthAdjust="spacingAndGlyphs" fill="#2a2440" stroke="#2a2440" stroke-width="0.5">Andorra</text>
<text x="817.0" y="250.4" font-size="17" textLength="78" lengthAdjust="spacingAndGlyphs" fill="#fff" stroke="#fff" stroke-width="4" opacity=".9">Barcelona</text>
<text x="817.0" y="250.4" font-size="17" textLength="78" lengthAdjust="spacingAndGlyphs" fill="#4e5156" stroke="#4e5156" stroke-width="0.45">Barcelona</text>
<text x="775.0" y="42.0" font-size="17" textLength="67" lengthAdjust="spacingAndGlyphs" fill="#fff" stroke="#fff" stroke-width="4" opacity=".9">Toulouse</text>
<text x="775.0" y="42.0" font-size="17" textLength="67" lengthAdjust="spacingAndGlyphs" fill="#4e5156" stroke="#4e5156" stroke-width="0.45">Toulouse</text>
<text x="920.0" y="56.0" font-size="17" textLength="97" lengthAdjust="spacingAndGlyphs" fill="#fff" stroke="#fff" stroke-width="4" opacity=".9">Montpellier</text>
<text x="920.0" y="56.0" font-size="17" textLength="97" lengthAdjust="spacingAndGlyphs" fill="#4e5156" stroke="#4e5156" stroke-width="0.45">Montpellier</text>
<text x="1041.0" y="71.0" font-size="17" textLength="72" lengthAdjust="spacingAndGlyphs" fill="#fff" stroke="#fff" stroke-width="4" opacity=".9">Marseille</text>
<text x="1041.0" y="71.0" font-size="17" textLength="72" lengthAdjust="spacingAndGlyphs" fill="#4e5156" stroke="#4e5156" stroke-width="0.45">Marseille</text>
<text x="1180.0" y="42.6" font-size="19" font-weight="bold" textLength="72" lengthAdjust="spacingAndGlyphs" fill="#fff" stroke="#fff" stroke-width="4" opacity=".9">Monaco</text>
<text x="1180.0" y="42.6" font-size="19" font-weight="bold" textLength="72" lengthAdjust="spacingAndGlyphs" fill="#2a2440" stroke="#2a2440" stroke-width="0.5">Monaco</text>
<text x="428.0" y="334.9" font-size="17" textLength="54" lengthAdjust="spacingAndGlyphs" fill="#fff" stroke="#fff" stroke-width="4" opacity=".9">Madrid</text>
<text x="428.0" y="334.9" font-size="17" textLength="54" lengthAdjust="spacingAndGlyphs" fill="#4e5156" stroke="#4e5156" stroke-width="0.45">Madrid</text>
<text x="400.0" y="449.9" font-size="31" font-weight="bold" textLength="109" lengthAdjust="spacingAndGlyphs" fill="#fff" stroke="#fff" stroke-width="4" opacity=".9">España</text>
<text x="400.0" y="449.9" font-size="31" font-weight="bold" textLength="109" lengthAdjust="spacingAndGlyphs" fill="#2a2440" stroke="#2a2440" stroke-width="0.5">España</text>
<text x="648.0" y="422.9" font-size="17" textLength="66" lengthAdjust="spacingAndGlyphs" fill="#fff" stroke="#fff" stroke-width="4" opacity=".9">Valencia</text>
<text x="648.0" y="422.9" font-size="17" textLength="66" lengthAdjust="spacingAndGlyphs" fill="#4e5156" stroke="#4e5156" stroke-width="0.45">Valencia</text>
<text x="541.0" y="479.9" font-size="17" textLength="75" lengthAdjust="spacingAndGlyphs" fill="#fff" stroke="#fff" stroke-width="4" opacity=".9">Albacete</text>
<text x="541.0" y="479.9" font-size="17" textLength="75" lengthAdjust="spacingAndGlyphs" fill="#4e5156" stroke="#4e5156" stroke-width="0.45">Albacete</text>
<text x="865.0" y="413.9" font-size="17" textLength="48" lengthAdjust="spacingAndGlyphs" fill="#fff" stroke="#fff" stroke-width="4" opacity=".9">Palma</text>
<text x="865.0" y="413.9" font-size="17" textLength="48" lengthAdjust="spacingAndGlyphs" fill="#4e5156" stroke="#4e5156" stroke-width="0.45">Palma</text>
<text x="341.0" y="570.0" font-size="17" textLength="73" lengthAdjust="spacingAndGlyphs" fill="#fff" stroke="#fff" stroke-width="4" opacity=".9">Córdoba</text>
<text x="341.0" y="570.0" font-size="17" textLength="73" lengthAdjust="spacingAndGlyphs" fill="#4e5156" stroke="#4e5156" stroke-width="0.45">Córdoba</text>
<text x="268.0" y="607.0" font-size="17" textLength="57" lengthAdjust="spacingAndGlyphs" fill="#fff" stroke="#fff" stroke-width="4" opacity=".9">Sevilla</text>
<text x="268.0" y="607.0" font-size="17" textLength="57" lengthAdjust="spacingAndGlyphs" fill="#4e5156" stroke="#4e5156" stroke-width="0.45">Sevilla</text>
<text x="422.0" y="639.0" font-size="17" textLength="74" lengthAdjust="spacingAndGlyphs" fill="#fff" stroke="#fff" stroke-width="4" opacity=".9">Granada</text>
<text x="422.0" y="639.0" font-size="17" textLength="74" lengthAdjust="spacingAndGlyphs" fill="#4e5156" stroke="#4e5156" stroke-width="0.45">Granada</text>
<text x="372.0" y="679.0" font-size="17" textLength="62" lengthAdjust="spacingAndGlyphs" fill="#fff" stroke="#fff" stroke-width="4" opacity=".9">Málaga</text>
<text x="372.0" y="679.0" font-size="17" textLength="62" lengthAdjust="spacingAndGlyphs" fill="#4e5156" stroke="#4e5156" stroke-width="0.45">Málaga</text>
<text x="603.0" y="554.0" font-size="17" textLength="54" lengthAdjust="spacingAndGlyphs" fill="#fff" stroke="#fff" stroke-width="4" opacity=".9">Murcia</text>
<text x="603.0" y="554.0" font-size="17" textLength="54" lengthAdjust="spacingAndGlyphs" fill="#4e5156" stroke="#4e5156" stroke-width="0.45">Murcia</text>
<text x="298.0" y="728.6" font-size="19" font-weight="bold" textLength="83" lengthAdjust="spacingAndGlyphs" fill="#fff" stroke="#fff" stroke-width="4" opacity=".9">Gibraltar</text>
<text x="298.0" y="728.6" font-size="19" font-weight="bold" textLength="83" lengthAdjust="spacingAndGlyphs" fill="#2a2440" stroke="#2a2440" stroke-width="0.5">Gibraltar</text>
</g>
<circle cx="806" cy="49" r="2.8" fill="#fff" stroke="#555" stroke-width="1.1"/>
<circle cx="1077" cy="79" r="2.8" fill="#fff" stroke="#555" stroke-width="1.1"/>
<circle cx="889" cy="421" r="2.8" fill="#fff" stroke="#555" stroke-width="1.1"/>
<circle cx="77" cy="499" r="2.8" fill="#fff" stroke="#555" stroke-width="1.1"/>
<g fill="#111"><circle cx="169.0" cy="38.0" r="5.15"/><circle cx="178.1" cy="78.0" r="5.15"/><circle cx="169.8" cy="103.8" r="5.15"/><circle cx="186.3" cy="105.9" r="5.15"/><circle cx="154.8" cy="114.6" r="5.15"/><circle cx="143.7" cy="125.7" r="5.15"/><circle cx="138.6" cy="134.8" r="5.15"/><circle cx="147.9" cy="136.8" r="5.15"/><circle cx="111.0" cy="130.9" r="5.15"/><circle cx="111.7" cy="143.8" r="5.15"/><circle cx="172.1" cy="142.5" r="5.15"/><circle cx="189.2" cy="151.5" r="5.15"/><circle cx="185.8" cy="163.7" r="5.15"/><circle cx="196.1" cy="165.0" r="5.15"/><circle cx="165.2" cy="167.0" r="5.15"/><circle cx="165.7" cy="169.6" r="5.15"/><circle cx="145.8" cy="173.0" r="5.15"/><circle cx="124.9" cy="165.7" r="5.15"/><circle cx="136.8" cy="183.8" r="5.15"/><circle cx="107.6" cy="85.7" r="5.15"/><circle cx="123.9" cy="87.0" r="5.15"/><circle cx="145.8" cy="47.5" r="5.15"/><circle cx="143.2" cy="52.2" r="5.15"/><circle cx="139.4" cy="57.4" r="5.15"/><circle cx="138.1" cy="62.5" r="5.15"/><circle cx="141.9" cy="66.4" r="5.15"/><circle cx="144.5" cy="71.5" r="5.15"/><circle cx="139.4" cy="75.4" r="5.15"/><circle cx="134.2" cy="72.8" r="5.15"/><circle cx="129.0" cy="71.5" r="5.15"/><circle cx="123.9" cy="74.1" r="5.15"/><circle cx="120.0" cy="78.0" r="5.15"/><circle cx="118.7" cy="81.9" r="5.15"/><circle cx="140.6" cy="80.6" r="5.15"/><circle cx="141.9" cy="85.7" r="5.15"/><circle cx="140.6" cy="90.9" r="5.15"/><circle cx="151.7" cy="77.5" r="5.15"/><circle cx="147.1" cy="94.8" r="5.15"/><circle cx="145.8" cy="99.9" r="5.15"/><circle cx="147.1" cy="105.1" r="5.15"/><circle cx="145.0" cy="111.5" r="5.15"/><circle cx="148.4" cy="63.8" r="5.15"/><circle cx="136.8" cy="67.7" r="5.15"/><circle cx="132.9" cy="76.7" r="5.15"/><circle cx="144.5" cy="57.4" r="5.15"/><circle cx="147.1" cy="52.2" r="5.15"/><circle cx="72.3" cy="96.1" r="5.15"/><circle cx="77.4" cy="92.2" r="5.15"/><circle cx="82.6" cy="88.3" r="5.15"/><circle cx="87.7" cy="87.0" r="5.15"/><circle cx="92.9" cy="90.4" r="5.15"/><circle cx="83.9" cy="94.8" r="5.15"/><circle cx="69.2" cy="114.1" r="5.15"/><circle cx="77.4" cy="115.4" r="5.15"/><circle cx="105.8" cy="115.4" r="5.15"/><circle cx="111.0" cy="119.3" r="5.15"/><circle cx="116.1" cy="118.0" r="5.15"/><circle cx="120.0" cy="116.7" r="5.15"/><circle cx="87.7" cy="147.7" r="5.15"/><circle cx="91.6" cy="142.5" r="5.15"/><circle cx="96.8" cy="138.6" r="5.15"/><circle cx="101.9" cy="139.9" r="5.15"/><circle cx="103.2" cy="145.1" r="5.15"/><circle cx="94.2" cy="152.8" r="5.15"/><circle cx="98.1" cy="156.7" r="5.15"/><circle cx="103.2" cy="155.4" r="5.15"/><circle cx="108.4" cy="159.3" r="5.15"/><circle cx="112.3" cy="160.6" r="5.15"/><circle cx="101.9" cy="163.2" r="5.15"/><circle cx="96.8" cy="160.6" r="5.15"/><circle cx="100.6" cy="173.5" r="5.15"/><circle cx="105.8" cy="176.1" r="5.15"/><circle cx="111.0" cy="173.5" r="5.15"/><circle cx="114.8" cy="176.1" r="5.15"/><circle cx="108.4" cy="181.2" r="5.15"/><circle cx="113.5" cy="183.8" r="5.15"/><circle cx="120.0" cy="182.5" r="5.15"/><circle cx="121.3" cy="190.3" r="5.15"/><circle cx="113.5" cy="191.5" r="5.15"/><circle cx="109.7" cy="195.4" r="5.15"/><circle cx="104.5" cy="200.6" r="5.15"/><circle cx="103.2" cy="178.6" r="5.15"/><circle cx="117.4" cy="178.6" r="5.15"/><circle cx="107.1" cy="187.7" r="5.15"/><circle cx="144.6" cy="53.6" r="5.15"/><circle cx="139.4" cy="56.6" r="5.15"/><circle cx="142.9" cy="56.6" r="5.15"/><circle cx="141.1" cy="59.7" r="5.15"/><circle cx="139.4" cy="62.7" r="5.15"/><circle cx="142.9" cy="62.7" r="5.15"/><circle cx="137.6" cy="65.7" r="5.15"/><circle cx="141.1" cy="65.7" r="5.15"/><circle cx="135.9" cy="68.8" r="5.15"/><circle cx="139.4" cy="68.8" r="5.15"/><circle cx="142.9" cy="68.8" r="5.15"/><circle cx="130.6" cy="71.8" r="5.15"/><circle cx="134.1" cy="71.8" r="5.15"/><circle cx="137.6" cy="71.8" r="5.15"/><circle cx="141.1" cy="71.8" r="5.15"/><circle cx="121.9" cy="74.8" r="5.15"/><circle cx="125.4" cy="74.8" r="5.15"/><circle cx="128.9" cy="74.8" r="5.15"/><circle cx="132.4" cy="74.8" r="5.15"/><circle cx="135.9" cy="74.8" r="5.15"/><circle cx="139.4" cy="74.8" r="5.15"/><circle cx="142.9" cy="74.8" r="5.15"/><circle cx="146.4" cy="74.8" r="5.15"/><circle cx="120.1" cy="77.9" r="5.15"/><circle cx="123.6" cy="77.9" r="5.15"/><circle cx="127.1" cy="77.9" r="5.15"/><circle cx="130.6" cy="77.9" r="5.15"/><circle cx="134.1" cy="77.9" r="5.15"/><circle cx="137.6" cy="77.9" r="5.15"/><circle cx="141.1" cy="77.9" r="5.15"/><circle cx="144.6" cy="77.9" r="5.15"/><circle cx="148.1" cy="77.9" r="5.15"/><circle cx="121.9" cy="80.9" r="5.15"/><circle cx="125.4" cy="80.9" r="5.15"/><circle cx="128.9" cy="80.9" r="5.15"/><circle cx="132.4" cy="80.9" r="5.15"/><circle cx="135.9" cy="80.9" r="5.15"/><circle cx="139.4" cy="80.9" r="5.15"/><circle cx="142.9" cy="80.9" r="5.15"/><circle cx="146.4" cy="80.9" r="5.15"/><circle cx="149.9" cy="80.9" r="5.15"/><circle cx="120.1" cy="83.9" r="5.15"/><circle cx="123.6" cy="83.9" r="5.15"/><circle cx="127.1" cy="83.9" r="5.15"/><circle cx="130.6" cy="83.9" r="5.15"/><circle cx="134.1" cy="83.9" r="5.15"/><circle cx="137.6" cy="83.9" r="5.15"/><circle cx="141.1" cy="83.9" r="5.15"/><circle cx="144.6" cy="83.9" r="5.15"/><circle cx="148.1" cy="83.9" r="5.15"/><circle cx="135.9" cy="87.0" r="5.15"/><circle cx="139.4" cy="87.0" r="5.15"/><circle cx="142.9" cy="87.0" r="5.15"/><circle cx="141.1" cy="90.0" r="5.15"/><circle cx="144.6" cy="90.0" r="5.15"/><circle cx="142.9" cy="93.0" r="5.15"/><circle cx="148.1" cy="102.1" r="5.15"/><circle cx="146.4" cy="105.1" r="5.15"/><circle cx="146.4" cy="111.2" r="5.15"/><circle cx="82.1" cy="88.0" r="5.15"/><circle cx="85.6" cy="88.0" r="5.15"/><circle cx="89.1" cy="88.0" r="5.15"/><circle cx="76.8" cy="91.0" r="5.15"/><circle cx="80.3" cy="91.0" r="5.15"/><circle cx="83.8" cy="91.0" r="5.15"/><circle cx="87.3" cy="91.0" r="5.15"/><circle cx="90.8" cy="91.0" r="5.15"/><circle cx="75.1" cy="94.1" r="5.15"/><circle cx="78.6" cy="94.1" r="5.15"/><circle cx="82.1" cy="94.1" r="5.15"/><circle cx="108.4" cy="117.9" r="5.15"/><circle cx="115.4" cy="117.9" r="5.15"/><circle cx="118.9" cy="117.9" r="5.15"/><circle cx="90.1" cy="141.3" r="5.15"/><circle cx="93.6" cy="141.3" r="5.15"/><circle cx="97.1" cy="141.3" r="5.15"/><circle cx="100.6" cy="141.3" r="5.15"/><circle cx="88.3" cy="144.4" r="5.15"/><circle cx="91.8" cy="144.4" r="5.15"/><circle cx="95.3" cy="144.4" r="5.15"/><circle cx="98.8" cy="144.4" r="5.15"/><circle cx="90.1" cy="147.4" r="5.15"/><circle cx="93.6" cy="147.4" r="5.15"/><circle cx="97.1" cy="147.4" r="5.15"/><circle cx="91.8" cy="150.4" r="5.15"/><circle cx="95.3" cy="150.4" r="5.15"/><circle cx="93.6" cy="153.5" r="5.15"/><circle cx="97.1" cy="153.5" r="5.15"/><circle cx="100.6" cy="153.5" r="5.15"/><circle cx="95.3" cy="156.5" r="5.15"/><circle cx="98.8" cy="156.5" r="5.15"/><circle cx="102.3" cy="156.5" r="5.15"/><circle cx="105.8" cy="156.5" r="5.15"/><circle cx="97.1" cy="159.5" r="5.15"/><circle cx="100.6" cy="159.5" r="5.15"/><circle cx="104.1" cy="159.5" r="5.15"/><circle cx="107.6" cy="159.5" r="5.15"/><circle cx="111.1" cy="159.5" r="5.15"/><circle cx="103.2" cy="175.0" r="5.15"/><circle cx="106.7" cy="175.0" r="5.15"/><circle cx="110.2" cy="175.0" r="5.15"/><circle cx="113.7" cy="175.0" r="5.15"/><circle cx="104.9" cy="178.1" r="5.15"/><circle cx="108.4" cy="178.1" r="5.15"/><circle cx="111.9" cy="178.1" r="5.15"/><circle cx="115.4" cy="178.1" r="5.15"/><circle cx="106.7" cy="181.1" r="5.15"/><circle cx="110.2" cy="181.1" r="5.15"/><circle cx="113.7" cy="181.1" r="5.15"/><circle cx="117.2" cy="181.1" r="5.15"/><circle cx="108.4" cy="184.1" r="5.15"/><circle cx="111.9" cy="184.1" r="5.15"/><circle cx="115.4" cy="184.1" r="5.15"/><circle cx="118.9" cy="184.1" r="5.15"/><circle cx="110.2" cy="187.1" r="5.15"/><circle cx="113.7" cy="187.1" r="5.15"/><circle cx="117.2" cy="187.1" r="5.15"/><circle cx="120.7" cy="187.1" r="5.15"/><circle cx="111.9" cy="190.2" r="5.15"/><circle cx="115.4" cy="190.2" r="5.15"/><circle cx="118.9" cy="190.2" r="5.15"/><circle cx="110.2" cy="193.2" r="5.15"/><circle cx="113.7" cy="193.2" r="5.15"/><circle cx="108.4" cy="196.2" r="5.15"/><circle cx="108.0" cy="85.7" r="5.15"/><circle cx="68.1" cy="113.8" r="5.15"/><circle cx="78.4" cy="116.6" r="5.15"/><circle cx="110.8" cy="130.6" r="5.15"/><circle cx="112.1" cy="143.7" r="5.15"/><circle cx="124.8" cy="165.6" r="5.15"/><circle cx="136.8" cy="183.6" r="5.15"/><circle cx="146.3" cy="172.7" r="5.15"/><circle cx="165.0" cy="168.0" r="5.15"/><circle cx="165.0" cy="169.9" r="5.15"/></g>
<g fill="#77c577"><circle cx="169.0" cy="38.0" r="4.2"/><circle cx="178.1" cy="78.0" r="4.2"/><circle cx="169.8" cy="103.8" r="4.2"/><circle cx="186.3" cy="105.9" r="4.2"/><circle cx="154.8" cy="114.6" r="4.2"/><circle cx="143.7" cy="125.7" r="4.2"/><circle cx="138.6" cy="134.8" r="4.2"/><circle cx="147.9" cy="136.8" r="4.2"/><circle cx="111.0" cy="130.9" r="4.2"/><circle cx="111.7" cy="143.8" r="4.2"/><circle cx="172.1" cy="142.5" r="4.2"/><circle cx="189.2" cy="151.5" r="4.2"/><circle cx="185.8" cy="163.7" r="4.2"/><circle cx="196.1" cy="165.0" r="4.2"/><circle cx="165.2" cy="167.0" r="4.2"/><circle cx="165.7" cy="169.6" r="4.2"/><circle cx="145.8" cy="173.0" r="4.2"/><circle cx="124.9" cy="165.7" r="4.2"/><circle cx="136.8" cy="183.8" r="4.2"/><circle cx="107.6" cy="85.7" r="4.2"/><circle cx="123.9" cy="87.0" r="4.2"/><circle cx="145.8" cy="47.5" r="4.2"/><circle cx="143.2" cy="52.2" r="4.2"/><circle cx="139.4" cy="57.4" r="4.2"/><circle cx="138.1" cy="62.5" r="4.2"/><circle cx="141.9" cy="66.4" r="4.2"/><circle cx="144.5" cy="71.5" r="4.2"/><circle cx="139.4" cy="75.4" r="4.2"/><circle cx="134.2" cy="72.8" r="4.2"/><circle cx="129.0" cy="71.5" r="4.2"/><circle cx="123.9" cy="74.1" r="4.2"/><circle cx="120.0" cy="78.0" r="4.2"/><circle cx="118.7" cy="81.9" r="4.2"/><circle cx="140.6" cy="80.6" r="4.2"/><circle cx="141.9" cy="85.7" r="4.2"/><circle cx="140.6" cy="90.9" r="4.2"/><circle cx="151.7" cy="77.5" r="4.2"/><circle cx="147.1" cy="94.8" r="4.2"/><circle cx="145.8" cy="99.9" r="4.2"/><circle cx="147.1" cy="105.1" r="4.2"/><circle cx="145.0" cy="111.5" r="4.2"/><circle cx="148.4" cy="63.8" r="4.2"/><circle cx="136.8" cy="67.7" r="4.2"/><circle cx="132.9" cy="76.7" r="4.2"/><circle cx="144.5" cy="57.4" r="4.2"/><circle cx="147.1" cy="52.2" r="4.2"/><circle cx="72.3" cy="96.1" r="4.2"/><circle cx="77.4" cy="92.2" r="4.2"/><circle cx="82.6" cy="88.3" r="4.2"/><circle cx="87.7" cy="87.0" r="4.2"/><circle cx="92.9" cy="90.4" r="4.2"/><circle cx="83.9" cy="94.8" r="4.2"/><circle cx="69.2" cy="114.1" r="4.2"/><circle cx="77.4" cy="115.4" r="4.2"/><circle cx="105.8" cy="115.4" r="4.2"/><circle cx="111.0" cy="119.3" r="4.2"/><circle cx="116.1" cy="118.0" r="4.2"/><circle cx="120.0" cy="116.7" r="4.2"/><circle cx="87.7" cy="147.7" r="4.2"/><circle cx="91.6" cy="142.5" r="4.2"/><circle cx="96.8" cy="138.6" r="4.2"/><circle cx="101.9" cy="139.9" r="4.2"/><circle cx="103.2" cy="145.1" r="4.2"/><circle cx="94.2" cy="152.8" r="4.2"/><circle cx="98.1" cy="156.7" r="4.2"/><circle cx="103.2" cy="155.4" r="4.2"/><circle cx="108.4" cy="159.3" r="4.2"/><circle cx="112.3" cy="160.6" r="4.2"/><circle cx="101.9" cy="163.2" r="4.2"/><circle cx="96.8" cy="160.6" r="4.2"/><circle cx="100.6" cy="173.5" r="4.2"/><circle cx="105.8" cy="176.1" r="4.2"/><circle cx="111.0" cy="173.5" r="4.2"/><circle cx="114.8" cy="176.1" r="4.2"/><circle cx="108.4" cy="181.2" r="4.2"/><circle cx="113.5" cy="183.8" r="4.2"/><circle cx="120.0" cy="182.5" r="4.2"/><circle cx="121.3" cy="190.3" r="4.2"/><circle cx="113.5" cy="191.5" r="4.2"/><circle cx="109.7" cy="195.4" r="4.2"/><circle cx="104.5" cy="200.6" r="4.2"/><circle cx="103.2" cy="178.6" r="4.2"/><circle cx="117.4" cy="178.6" r="4.2"/><circle cx="107.1" cy="187.7" r="4.2"/><circle cx="144.6" cy="53.6" r="4.2"/><circle cx="139.4" cy="56.6" r="4.2"/><circle cx="142.9" cy="56.6" r="4.2"/><circle cx="141.1" cy="59.7" r="4.2"/><circle cx="139.4" cy="62.7" r="4.2"/><circle cx="142.9" cy="62.7" r="4.2"/><circle cx="137.6" cy="65.7" r="4.2"/><circle cx="141.1" cy="65.7" r="4.2"/><circle cx="135.9" cy="68.8" r="4.2"/><circle cx="139.4" cy="68.8" r="4.2"/><circle cx="142.9" cy="68.8" r="4.2"/><circle cx="130.6" cy="71.8" r="4.2"/><circle cx="134.1" cy="71.8" r="4.2"/><circle cx="137.6" cy="71.8" r="4.2"/><circle cx="141.1" cy="71.8" r="4.2"/><circle cx="121.9" cy="74.8" r="4.2"/><circle cx="125.4" cy="74.8" r="4.2"/><circle cx="128.9" cy="74.8" r="4.2"/><circle cx="132.4" cy="74.8" r="4.2"/><circle cx="135.9" cy="74.8" r="4.2"/><circle cx="139.4" cy="74.8" r="4.2"/><circle cx="142.9" cy="74.8" r="4.2"/><circle cx="146.4" cy="74.8" r="4.2"/><circle cx="120.1" cy="77.9" r="4.2"/><circle cx="123.6" cy="77.9" r="4.2"/><circle cx="127.1" cy="77.9" r="4.2"/><circle cx="130.6" cy="77.9" r="4.2"/><circle cx="134.1" cy="77.9" r="4.2"/><circle cx="137.6" cy="77.9" r="4.2"/><circle cx="141.1" cy="77.9" r="4.2"/><circle cx="144.6" cy="77.9" r="4.2"/><circle cx="148.1" cy="77.9" r="4.2"/><circle cx="121.9" cy="80.9" r="4.2"/><circle cx="125.4" cy="80.9" r="4.2"/><circle cx="128.9" cy="80.9" r="4.2"/><circle cx="132.4" cy="80.9" r="4.2"/><circle cx="135.9" cy="80.9" r="4.2"/><circle cx="139.4" cy="80.9" r="4.2"/><circle cx="142.9" cy="80.9" r="4.2"/><circle cx="146.4" cy="80.9" r="4.2"/><circle cx="149.9" cy="80.9" r="4.2"/><circle cx="120.1" cy="83.9" r="4.2"/><circle cx="123.6" cy="83.9" r="4.2"/><circle cx="127.1" cy="83.9" r="4.2"/><circle cx="130.6" cy="83.9" r="4.2"/><circle cx="134.1" cy="83.9" r="4.2"/><circle cx="137.6" cy="83.9" r="4.2"/><circle cx="141.1" cy="83.9" r="4.2"/><circle cx="144.6" cy="83.9" r="4.2"/><circle cx="148.1" cy="83.9" r="4.2"/><circle cx="135.9" cy="87.0" r="4.2"/><circle cx="139.4" cy="87.0" r="4.2"/><circle cx="142.9" cy="87.0" r="4.2"/><circle cx="141.1" cy="90.0" r="4.2"/><circle cx="144.6" cy="90.0" r="4.2"/><circle cx="142.9" cy="93.0" r="4.2"/><circle cx="148.1" cy="102.1" r="4.2"/><circle cx="146.4" cy="105.1" r="4.2"/><circle cx="146.4" cy="111.2" r="4.2"/><circle cx="82.1" cy="88.0" r="4.2"/><circle cx="85.6" cy="88.0" r="4.2"/><circle cx="89.1" cy="88.0" r="4.2"/><circle cx="76.8" cy="91.0" r="4.2"/><circle cx="80.3" cy="91.0" r="4.2"/><circle cx="83.8" cy="91.0" r="4.2"/><circle cx="87.3" cy="91.0" r="4.2"/><circle cx="90.8" cy="91.0" r="4.2"/><circle cx="75.1" cy="94.1" r="4.2"/><circle cx="78.6" cy="94.1" r="4.2"/><circle cx="82.1" cy="94.1" r="4.2"/><circle cx="108.4" cy="117.9" r="4.2"/><circle cx="115.4" cy="117.9" r="4.2"/><circle cx="118.9" cy="117.9" r="4.2"/><circle cx="90.1" cy="141.3" r="4.2"/><circle cx="93.6" cy="141.3" r="4.2"/><circle cx="97.1" cy="141.3" r="4.2"/><circle cx="100.6" cy="141.3" r="4.2"/><circle cx="88.3" cy="144.4" r="4.2"/><circle cx="91.8" cy="144.4" r="4.2"/><circle cx="95.3" cy="144.4" r="4.2"/><circle cx="98.8" cy="144.4" r="4.2"/><circle cx="90.1" cy="147.4" r="4.2"/><circle cx="93.6" cy="147.4" r="4.2"/><circle cx="97.1" cy="147.4" r="4.2"/><circle cx="91.8" cy="150.4" r="4.2"/><circle cx="95.3" cy="150.4" r="4.2"/><circle cx="93.6" cy="153.5" r="4.2"/><circle cx="97.1" cy="153.5" r="4.2"/><circle cx="100.6" cy="153.5" r="4.2"/><circle cx="95.3" cy="156.5" r="4.2"/><circle cx="98.8" cy="156.5" r="4.2"/><circle cx="102.3" cy="156.5" r="4.2"/><circle cx="105.8" cy="156.5" r="4.2"/><circle cx="97.1" cy="159.5" r="4.2"/><circle cx="100.6" cy="159.5" r="4.2"/><circle cx="104.1" cy="159.5" r="4.2"/><circle cx="107.6" cy="159.5" r="4.2"/><circle cx="111.1" cy="159.5" r="4.2"/><circle cx="103.2" cy="175.0" r="4.2"/><circle cx="106.7" cy="175.0" r="4.2"/><circle cx="110.2" cy="175.0" r="4.2"/><circle cx="113.7" cy="175.0" r="4.2"/><circle cx="104.9" cy="178.1" r="4.2"/><circle cx="108.4" cy="178.1" r="4.2"/><circle cx="111.9" cy="178.1" r="4.2"/><circle cx="115.4" cy="178.1" r="4.2"/><circle cx="106.7" cy="181.1" r="4.2"/><circle cx="110.2" cy="181.1" r="4.2"/><circle cx="113.7" cy="181.1" r="4.2"/><circle cx="117.2" cy="181.1" r="4.2"/><circle cx="108.4" cy="184.1" r="4.2"/><circle cx="111.9" cy="184.1" r="4.2"/><circle cx="115.4" cy="184.1" r="4.2"/><circle cx="118.9" cy="184.1" r="4.2"/><circle cx="110.2" cy="187.1" r="4.2"/><circle cx="113.7" cy="187.1" r="4.2"/><circle cx="117.2" cy="187.1" r="4.2"/><circle cx="120.7" cy="187.1" r="4.2"/><circle cx="111.9" cy="190.2" r="4.2"/><circle cx="115.4" cy="190.2" r="4.2"/><circle cx="118.9" cy="190.2" r="4.2"/><circle cx="110.2" cy="193.2" r="4.2"/><circle cx="113.7" cy="193.2" r="4.2"/><circle cx="108.4" cy="196.2" r="4.2"/><circle cx="108.0" cy="85.7" r="4.2"/><circle cx="68.1" cy="113.8" r="4.2"/><circle cx="78.4" cy="116.6" r="4.2"/><circle cx="110.8" cy="130.6" r="4.2"/><circle cx="112.1" cy="143.7" r="4.2"/><circle cx="124.8" cy="165.6" r="4.2"/><circle cx="136.8" cy="183.6" r="4.2"/><circle cx="146.3" cy="172.7" r="4.2"/><circle cx="165.0" cy="168.0" r="4.2"/><circle cx="165.0" cy="169.9" r="4.2"/></g>
<g fill="#111"><circle cx="277.4" cy="61.2" r="5.15"/><circle cx="288.5" cy="68.2" r="5.15"/><circle cx="251.6" cy="81.9" r="5.15"/><circle cx="260.6" cy="76.7" r="5.15"/><circle cx="267.1" cy="80.6" r="5.15"/><circle cx="219.9" cy="94.8" r="5.15"/><circle cx="271.7" cy="111.5" r="5.15"/><circle cx="298.8" cy="103.3" r="5.15"/><circle cx="213.7" cy="119.3" r="5.15"/><circle cx="219.9" cy="131.7" r="5.15"/><circle cx="242.6" cy="143.3" r="5.15"/><circle cx="247.7" cy="147.7" r="5.15"/><circle cx="254.2" cy="146.4" r="5.15"/><circle cx="259.4" cy="143.8" r="5.15"/><circle cx="264.5" cy="142.0" r="5.15"/><circle cx="246.5" cy="152.8" r="5.15"/><circle cx="256.8" cy="159.8" r="5.15"/><circle cx="273.5" cy="154.6" r="5.15"/><circle cx="269.7" cy="163.2" r="5.15"/><circle cx="283.9" cy="158.0" r="5.15"/><circle cx="289.0" cy="156.7" r="5.15"/><circle cx="285.2" cy="161.9" r="5.15"/><circle cx="216.8" cy="162.6" r="5.15"/><circle cx="207.0" cy="167.8" r="5.15"/><circle cx="223.2" cy="176.6" r="5.15"/><circle cx="299.4" cy="172.2" r="5.15"/><circle cx="300.6" cy="176.1" r="5.15"/><circle cx="311.0" cy="167.0" r="5.15"/><circle cx="305.8" cy="137.4" r="5.15"/><circle cx="305.8" cy="143.8" r="5.15"/><circle cx="318.7" cy="124.5" r="5.15"/><circle cx="259.9" cy="194.9" r="5.15"/><circle cx="271.0" cy="197.5" r="5.15"/><circle cx="295.0" cy="205.2" r="5.15"/><circle cx="315.4" cy="199.3" r="5.15"/><circle cx="299.4" cy="65.1" r="5.15"/><circle cx="303.2" cy="70.3" r="5.15"/><circle cx="307.1" cy="75.4" r="5.15"/><circle cx="309.7" cy="80.6" r="5.15"/><circle cx="314.8" cy="75.4" r="5.15"/><circle cx="305.8" cy="89.6" r="5.15"/><circle cx="317.4" cy="90.9" r="5.15"/><circle cx="301.9" cy="61.2" r="5.15"/><circle cx="307.1" cy="65.1" r="5.15"/><circle cx="312.6" cy="75.4" r="5.15"/><circle cx="315.2" cy="80.6" r="5.15"/><circle cx="319.8" cy="90.4" r="5.15"/><circle cx="338.9" cy="88.8" r="5.15"/><circle cx="368.8" cy="90.9" r="5.15"/><circle cx="344.1" cy="105.9" r="5.15"/><circle cx="361.6" cy="109.0" r="5.15"/><circle cx="326.0" cy="116.7" r="5.15"/><circle cx="319.0" cy="123.2" r="5.15"/><circle cx="341.0" cy="118.8" r="5.15"/><circle cx="354.4" cy="125.0" r="5.15"/><circle cx="388.7" cy="140.5" r="5.15"/><circle cx="331.9" cy="149.0" r="5.15"/><circle cx="348.7" cy="160.1" r="5.15"/><circle cx="352.6" cy="163.2" r="5.15"/><circle cx="369.9" cy="165.7" r="5.15"/><circle cx="397.7" cy="171.4" r="5.15"/><circle cx="403.4" cy="174.8" r="5.15"/><circle cx="312.1" cy="167.0" r="5.15"/><circle cx="386.9" cy="189.7" r="5.15"/><circle cx="316.5" cy="199.8" r="5.15"/><circle cx="395.2" cy="198.0" r="5.15"/><circle cx="396.5" cy="203.2" r="5.15"/><circle cx="415.3" cy="205.2" r="5.15"/><circle cx="348.2" cy="210.1" r="5.15"/><circle cx="359.5" cy="210.9" r="5.15"/><circle cx="355.2" cy="224.6" r="5.15"/><circle cx="379.7" cy="230.3" r="5.15"/><circle cx="384.8" cy="226.4" r="5.15"/><circle cx="377.1" cy="235.4" r="5.15"/><circle cx="383.5" cy="238.0" r="5.15"/><circle cx="387.4" cy="222.5" r="5.15"/><circle cx="362.9" cy="245.7" r="5.15"/><circle cx="364.2" cy="253.2" r="5.15"/><circle cx="368.1" cy="259.6" r="5.15"/><circle cx="369.9" cy="263.0" r="5.15"/><circle cx="301.9" cy="67.8" r="5.15"/><circle cx="305.4" cy="67.8" r="5.15"/><circle cx="300.2" cy="70.8" r="5.15"/><circle cx="303.7" cy="70.8" r="5.15"/><circle cx="307.2" cy="70.8" r="5.15"/><circle cx="301.9" cy="73.8" r="5.15"/><circle cx="305.4" cy="73.8" r="5.15"/><circle cx="308.9" cy="73.8" r="5.15"/><circle cx="303.7" cy="76.9" r="5.15"/><circle cx="307.2" cy="76.9" r="5.15"/><circle cx="310.7" cy="76.9" r="5.15"/><circle cx="314.2" cy="76.9" r="5.15"/><circle cx="308.9" cy="79.9" r="5.15"/><circle cx="312.4" cy="79.9" r="5.15"/><circle cx="381.3" cy="230.6" r="5.15"/><circle cx="384.8" cy="230.6" r="5.15"/><circle cx="379.6" cy="233.7" r="5.15"/><circle cx="381.3" cy="236.7" r="5.15"/><circle cx="251.5" cy="81.2" r="5.15"/><circle cx="251.5" cy="84.8" r="5.15"/><circle cx="242.1" cy="142.4" r="5.15"/><circle cx="247.9" cy="146.0" r="5.15"/><circle cx="253.2" cy="145.1" r="5.15"/><circle cx="259.4" cy="143.3" r="5.15"/><circle cx="264.8" cy="142.4" r="5.15"/><circle cx="246.1" cy="152.2" r="5.15"/><circle cx="251.5" cy="149.5" r="5.15"/><circle cx="284.3" cy="156.6" r="5.15"/><circle cx="290.5" cy="156.6" r="5.15"/><circle cx="284.3" cy="162.0" r="5.15"/><circle cx="305.9" cy="138.0" r="5.15"/><circle cx="305.9" cy="145.1" r="5.15"/><circle cx="395.8" cy="198.3" r="5.15"/><circle cx="395.8" cy="204.1" r="5.15"/><circle cx="386.8" cy="215.7" r="5.15"/><circle cx="395.2" cy="217.7" r="5.15"/></g>
<g fill="#b373c0"><circle cx="277.4" cy="61.2" r="4.2"/><circle cx="288.5" cy="68.2" r="4.2"/><circle cx="251.6" cy="81.9" r="4.2"/><circle cx="260.6" cy="76.7" r="4.2"/><circle cx="267.1" cy="80.6" r="4.2"/><circle cx="219.9" cy="94.8" r="4.2"/><circle cx="271.7" cy="111.5" r="4.2"/><circle cx="298.8" cy="103.3" r="4.2"/><circle cx="213.7" cy="119.3" r="4.2"/><circle cx="219.9" cy="131.7" r="4.2"/><circle cx="242.6" cy="143.3" r="4.2"/><circle cx="247.7" cy="147.7" r="4.2"/><circle cx="254.2" cy="146.4" r="4.2"/><circle cx="259.4" cy="143.8" r="4.2"/><circle cx="264.5" cy="142.0" r="4.2"/><circle cx="246.5" cy="152.8" r="4.2"/><circle cx="256.8" cy="159.8" r="4.2"/><circle cx="273.5" cy="154.6" r="4.2"/><circle cx="269.7" cy="163.2" r="4.2"/><circle cx="283.9" cy="158.0" r="4.2"/><circle cx="289.0" cy="156.7" r="4.2"/><circle cx="285.2" cy="161.9" r="4.2"/><circle cx="216.8" cy="162.6" r="4.2"/><circle cx="207.0" cy="167.8" r="4.2"/><circle cx="223.2" cy="176.6" r="4.2"/><circle cx="299.4" cy="172.2" r="4.2"/><circle cx="300.6" cy="176.1" r="4.2"/><circle cx="311.0" cy="167.0" r="4.2"/><circle cx="305.8" cy="137.4" r="4.2"/><circle cx="305.8" cy="143.8" r="4.2"/><circle cx="318.7" cy="124.5" r="4.2"/><circle cx="259.9" cy="194.9" r="4.2"/><circle cx="271.0" cy="197.5" r="4.2"/><circle cx="295.0" cy="205.2" r="4.2"/><circle cx="315.4" cy="199.3" r="4.2"/><circle cx="299.4" cy="65.1" r="4.2"/><circle cx="303.2" cy="70.3" r="4.2"/><circle cx="307.1" cy="75.4" r="4.2"/><circle cx="309.7" cy="80.6" r="4.2"/><circle cx="314.8" cy="75.4" r="4.2"/><circle cx="305.8" cy="89.6" r="4.2"/><circle cx="317.4" cy="90.9" r="4.2"/><circle cx="301.9" cy="61.2" r="4.2"/><circle cx="307.1" cy="65.1" r="4.2"/><circle cx="312.6" cy="75.4" r="4.2"/><circle cx="315.2" cy="80.6" r="4.2"/><circle cx="319.8" cy="90.4" r="4.2"/><circle cx="338.9" cy="88.8" r="4.2"/><circle cx="368.8" cy="90.9" r="4.2"/><circle cx="344.1" cy="105.9" r="4.2"/><circle cx="361.6" cy="109.0" r="4.2"/><circle cx="326.0" cy="116.7" r="4.2"/><circle cx="319.0" cy="123.2" r="4.2"/><circle cx="341.0" cy="118.8" r="4.2"/><circle cx="354.4" cy="125.0" r="4.2"/><circle cx="388.7" cy="140.5" r="4.2"/><circle cx="331.9" cy="149.0" r="4.2"/><circle cx="348.7" cy="160.1" r="4.2"/><circle cx="352.6" cy="163.2" r="4.2"/><circle cx="369.9" cy="165.7" r="4.2"/><circle cx="397.7" cy="171.4" r="4.2"/><circle cx="403.4" cy="174.8" r="4.2"/><circle cx="312.1" cy="167.0" r="4.2"/><circle cx="386.9" cy="189.7" r="4.2"/><circle cx="316.5" cy="199.8" r="4.2"/><circle cx="395.2" cy="198.0" r="4.2"/><circle cx="396.5" cy="203.2" r="4.2"/><circle cx="415.3" cy="205.2" r="4.2"/><circle cx="348.2" cy="210.1" r="4.2"/><circle cx="359.5" cy="210.9" r="4.2"/><circle cx="355.2" cy="224.6" r="4.2"/><circle cx="379.7" cy="230.3" r="4.2"/><circle cx="384.8" cy="226.4" r="4.2"/><circle cx="377.1" cy="235.4" r="4.2"/><circle cx="383.5" cy="238.0" r="4.2"/><circle cx="387.4" cy="222.5" r="4.2"/><circle cx="362.9" cy="245.7" r="4.2"/><circle cx="364.2" cy="253.2" r="4.2"/><circle cx="368.1" cy="259.6" r="4.2"/><circle cx="369.9" cy="263.0" r="4.2"/><circle cx="301.9" cy="67.8" r="4.2"/><circle cx="305.4" cy="67.8" r="4.2"/><circle cx="300.2" cy="70.8" r="4.2"/><circle cx="303.7" cy="70.8" r="4.2"/><circle cx="307.2" cy="70.8" r="4.2"/><circle cx="301.9" cy="73.8" r="4.2"/><circle cx="305.4" cy="73.8" r="4.2"/><circle cx="308.9" cy="73.8" r="4.2"/><circle cx="303.7" cy="76.9" r="4.2"/><circle cx="307.2" cy="76.9" r="4.2"/><circle cx="310.7" cy="76.9" r="4.2"/><circle cx="314.2" cy="76.9" r="4.2"/><circle cx="308.9" cy="79.9" r="4.2"/><circle cx="312.4" cy="79.9" r="4.2"/><circle cx="381.3" cy="230.6" r="4.2"/><circle cx="384.8" cy="230.6" r="4.2"/><circle cx="379.6" cy="233.7" r="4.2"/><circle cx="381.3" cy="236.7" r="4.2"/><circle cx="251.5" cy="81.2" r="4.2"/><circle cx="251.5" cy="84.8" r="4.2"/><circle cx="242.1" cy="142.4" r="4.2"/><circle cx="247.9" cy="146.0" r="4.2"/><circle cx="253.2" cy="145.1" r="4.2"/><circle cx="259.4" cy="143.3" r="4.2"/><circle cx="264.8" cy="142.4" r="4.2"/><circle cx="246.1" cy="152.2" r="4.2"/><circle cx="251.5" cy="149.5" r="4.2"/><circle cx="284.3" cy="156.6" r="4.2"/><circle cx="290.5" cy="156.6" r="4.2"/><circle cx="284.3" cy="162.0" r="4.2"/><circle cx="305.9" cy="138.0" r="4.2"/><circle cx="305.9" cy="145.1" r="4.2"/><circle cx="395.8" cy="198.3" r="4.2"/><circle cx="395.8" cy="204.1" r="4.2"/><circle cx="386.8" cy="215.7" r="4.2"/><circle cx="395.2" cy="217.7" r="4.2"/></g>
<g fill="#111"><circle cx="218.1" cy="53.5" r="5.15"/><circle cx="223.2" cy="54.8" r="5.15"/><circle cx="228.4" cy="52.2" r="5.15"/><circle cx="243.9" cy="55.3" r="5.15"/><circle cx="256.8" cy="54.3" r="5.15"/><circle cx="283.9" cy="52.7" r="5.15"/><circle cx="296.8" cy="58.6" r="5.15"/><circle cx="300.6" cy="53.5" r="5.15"/><circle cx="305.8" cy="47.0" r="5.15"/><circle cx="309.7" cy="50.9" r="5.15"/><circle cx="313.5" cy="56.1" r="5.15"/><circle cx="318.7" cy="59.9" r="5.15"/><circle cx="312.6" cy="49.6" r="5.15"/><circle cx="317.7" cy="56.1" r="5.15"/><circle cx="320.3" cy="62.5" r="5.15"/><circle cx="347.9" cy="61.2" r="5.15"/><circle cx="359.0" cy="62.5" r="5.15"/><circle cx="368.1" cy="66.4" r="5.15"/><circle cx="371.9" cy="67.2" r="5.15"/><circle cx="354.4" cy="73.6" r="5.15"/><circle cx="396.5" cy="70.3" r="5.15"/><circle cx="402.9" cy="69.0" r="5.15"/><circle cx="399.0" cy="72.8" r="5.15"/><circle cx="415.3" cy="81.4" r="5.15"/><circle cx="388.7" cy="90.4" r="5.15"/><circle cx="393.9" cy="90.9" r="5.15"/><circle cx="414.5" cy="102.5" r="5.15"/><circle cx="422.3" cy="105.1" r="5.15"/><circle cx="433.9" cy="104.6" r="5.15"/><circle cx="386.1" cy="111.5" r="5.15"/><circle cx="397.2" cy="118.5" r="5.15"/><circle cx="435.9" cy="124.5" r="5.15"/><circle cx="446.3" cy="91.4" r="5.15"/><circle cx="451.9" cy="83.9" r="5.15"/><circle cx="462.3" cy="78.0" r="5.15"/><circle cx="470.0" cy="85.7" r="5.15"/><circle cx="464.8" cy="105.1" r="5.15"/><circle cx="460.5" cy="110.8" r="5.15"/><circle cx="423.5" cy="67.7" r="5.15"/><circle cx="428.7" cy="63.8" r="5.15"/><circle cx="433.9" cy="61.2" r="5.15"/><circle cx="439.0" cy="59.4" r="5.15"/><circle cx="444.2" cy="58.6" r="5.15"/><circle cx="449.4" cy="59.9" r="5.15"/><circle cx="454.5" cy="61.2" r="5.15"/><circle cx="459.7" cy="59.4" r="5.15"/><circle cx="464.8" cy="61.2" r="5.15"/><circle cx="470.0" cy="63.8" r="5.15"/><circle cx="475.2" cy="66.4" r="5.15"/><circle cx="480.3" cy="69.0" r="5.15"/><circle cx="485.5" cy="71.5" r="5.15"/><circle cx="426.1" cy="72.8" r="5.15"/><circle cx="431.3" cy="75.4" r="5.15"/><circle cx="436.5" cy="72.8" r="5.15"/><circle cx="427.4" cy="80.6" r="5.15"/><circle cx="432.6" cy="79.3" r="5.15"/><circle cx="475.2" cy="72.8" r="5.15"/><circle cx="482.9" cy="74.1" r="5.15"/><circle cx="439.0" cy="65.6" r="5.15"/><circle cx="458.4" cy="65.6" r="5.15"/><circle cx="440.3" cy="61.8" r="5.15"/><circle cx="443.8" cy="61.8" r="5.15"/><circle cx="447.3" cy="61.8" r="5.15"/><circle cx="450.8" cy="61.8" r="5.15"/><circle cx="454.3" cy="61.8" r="5.15"/><circle cx="457.8" cy="61.8" r="5.15"/><circle cx="461.3" cy="61.8" r="5.15"/><circle cx="464.8" cy="61.8" r="5.15"/><circle cx="428.1" cy="64.8" r="5.15"/><circle cx="431.6" cy="64.8" r="5.15"/><circle cx="435.1" cy="64.8" r="5.15"/><circle cx="438.6" cy="64.8" r="5.15"/><circle cx="442.1" cy="64.8" r="5.15"/><circle cx="445.6" cy="64.8" r="5.15"/><circle cx="449.1" cy="64.8" r="5.15"/><circle cx="452.6" cy="64.8" r="5.15"/><circle cx="456.1" cy="64.8" r="5.15"/><circle cx="459.6" cy="64.8" r="5.15"/><circle cx="463.1" cy="64.8" r="5.15"/><circle cx="466.6" cy="64.8" r="5.15"/><circle cx="426.3" cy="67.8" r="5.15"/><circle cx="429.8" cy="67.8" r="5.15"/><circle cx="433.3" cy="67.8" r="5.15"/><circle cx="436.8" cy="67.8" r="5.15"/><circle cx="440.3" cy="67.8" r="5.15"/><circle cx="443.8" cy="67.8" r="5.15"/><circle cx="447.3" cy="67.8" r="5.15"/><circle cx="450.8" cy="67.8" r="5.15"/><circle cx="454.3" cy="67.8" r="5.15"/><circle cx="457.8" cy="67.8" r="5.15"/><circle cx="464.8" cy="67.8" r="5.15"/><circle cx="468.3" cy="67.8" r="5.15"/><circle cx="471.8" cy="67.8" r="5.15"/><circle cx="424.6" cy="70.9" r="5.15"/><circle cx="428.1" cy="70.9" r="5.15"/><circle cx="431.6" cy="70.9" r="5.15"/><circle cx="435.1" cy="70.9" r="5.15"/><circle cx="438.6" cy="70.9" r="5.15"/><circle cx="442.1" cy="70.9" r="5.15"/><circle cx="445.6" cy="70.9" r="5.15"/><circle cx="449.1" cy="70.9" r="5.15"/><circle cx="452.6" cy="70.9" r="5.15"/><circle cx="456.1" cy="70.9" r="5.15"/><circle cx="473.6" cy="70.9" r="5.15"/><circle cx="477.1" cy="70.9" r="5.15"/><circle cx="480.6" cy="70.9" r="5.15"/><circle cx="426.3" cy="73.9" r="5.15"/><circle cx="429.8" cy="73.9" r="5.15"/><circle cx="433.3" cy="73.9" r="5.15"/><circle cx="436.8" cy="73.9" r="5.15"/><circle cx="440.3" cy="73.9" r="5.15"/><circle cx="443.8" cy="73.9" r="5.15"/><circle cx="447.3" cy="73.9" r="5.15"/><circle cx="450.8" cy="73.9" r="5.15"/><circle cx="428.1" cy="76.9" r="5.15"/><circle cx="431.6" cy="76.9" r="5.15"/><circle cx="306.3" cy="48.3" r="5.15"/><circle cx="309.8" cy="48.3" r="5.15"/><circle cx="304.5" cy="51.3" r="5.15"/><circle cx="308.0" cy="51.3" r="5.15"/><circle cx="311.5" cy="51.3" r="5.15"/><circle cx="299.3" cy="54.3" r="5.15"/><circle cx="302.8" cy="54.3" r="5.15"/><circle cx="313.3" cy="54.3" r="5.15"/><circle cx="316.8" cy="54.3" r="5.15"/><circle cx="297.5" cy="57.3" r="5.15"/><circle cx="315.0" cy="57.3" r="5.15"/><circle cx="318.5" cy="57.3" r="5.15"/><circle cx="320.3" cy="60.4" r="5.15"/><circle cx="217.7" cy="53.7" r="5.15"/><circle cx="222.2" cy="56.4" r="5.15"/><circle cx="226.6" cy="53.7" r="5.15"/><circle cx="230.2" cy="52.8" r="5.15"/><circle cx="366.8" cy="67.0" r="5.15"/><circle cx="373.0" cy="66.7" r="5.15"/><circle cx="395.2" cy="70.6" r="5.15"/><circle cx="399.6" cy="72.4" r="5.15"/><circle cx="404.0" cy="69.7" r="5.15"/><circle cx="388.1" cy="91.9" r="5.15"/><circle cx="393.4" cy="90.5" r="5.15"/></g>
<g fill="#e41a1c"><circle cx="218.1" cy="53.5" r="4.2"/><circle cx="223.2" cy="54.8" r="4.2"/><circle cx="228.4" cy="52.2" r="4.2"/><circle cx="243.9" cy="55.3" r="4.2"/><circle cx="256.8" cy="54.3" r="4.2"/><circle cx="283.9" cy="52.7" r="4.2"/><circle cx="296.8" cy="58.6" r="4.2"/><circle cx="300.6" cy="53.5" r="4.2"/><circle cx="305.8" cy="47.0" r="4.2"/><circle cx="309.7" cy="50.9" r="4.2"/><circle cx="313.5" cy="56.1" r="4.2"/><circle cx="318.7" cy="59.9" r="4.2"/><circle cx="312.6" cy="49.6" r="4.2"/><circle cx="317.7" cy="56.1" r="4.2"/><circle cx="320.3" cy="62.5" r="4.2"/><circle cx="347.9" cy="61.2" r="4.2"/><circle cx="359.0" cy="62.5" r="4.2"/><circle cx="368.1" cy="66.4" r="4.2"/><circle cx="371.9" cy="67.2" r="4.2"/><circle cx="354.4" cy="73.6" r="4.2"/><circle cx="396.5" cy="70.3" r="4.2"/><circle cx="402.9" cy="69.0" r="4.2"/><circle cx="399.0" cy="72.8" r="4.2"/><circle cx="415.3" cy="81.4" r="4.2"/><circle cx="388.7" cy="90.4" r="4.2"/><circle cx="393.9" cy="90.9" r="4.2"/><circle cx="414.5" cy="102.5" r="4.2"/><circle cx="422.3" cy="105.1" r="4.2"/><circle cx="433.9" cy="104.6" r="4.2"/><circle cx="386.1" cy="111.5" r="4.2"/><circle cx="397.2" cy="118.5" r="4.2"/><circle cx="435.9" cy="124.5" r="4.2"/><circle cx="446.3" cy="91.4" r="4.2"/><circle cx="451.9" cy="83.9" r="4.2"/><circle cx="462.3" cy="78.0" r="4.2"/><circle cx="470.0" cy="85.7" r="4.2"/><circle cx="464.8" cy="105.1" r="4.2"/><circle cx="460.5" cy="110.8" r="4.2"/><circle cx="423.5" cy="67.7" r="4.2"/><circle cx="428.7" cy="63.8" r="4.2"/><circle cx="433.9" cy="61.2" r="4.2"/><circle cx="439.0" cy="59.4" r="4.2"/><circle cx="444.2" cy="58.6" r="4.2"/><circle cx="449.4" cy="59.9" r="4.2"/><circle cx="454.5" cy="61.2" r="4.2"/><circle cx="459.7" cy="59.4" r="4.2"/><circle cx="464.8" cy="61.2" r="4.2"/><circle cx="470.0" cy="63.8" r="4.2"/><circle cx="475.2" cy="66.4" r="4.2"/><circle cx="480.3" cy="69.0" r="4.2"/><circle cx="485.5" cy="71.5" r="4.2"/><circle cx="426.1" cy="72.8" r="4.2"/><circle cx="431.3" cy="75.4" r="4.2"/><circle cx="436.5" cy="72.8" r="4.2"/><circle cx="427.4" cy="80.6" r="4.2"/><circle cx="432.6" cy="79.3" r="4.2"/><circle cx="475.2" cy="72.8" r="4.2"/><circle cx="482.9" cy="74.1" r="4.2"/><circle cx="439.0" cy="65.6" r="4.2"/><circle cx="458.4" cy="65.6" r="4.2"/><circle cx="440.3" cy="61.8" r="4.2"/><circle cx="443.8" cy="61.8" r="4.2"/><circle cx="447.3" cy="61.8" r="4.2"/><circle cx="450.8" cy="61.8" r="4.2"/><circle cx="454.3" cy="61.8" r="4.2"/><circle cx="457.8" cy="61.8" r="4.2"/><circle cx="461.3" cy="61.8" r="4.2"/><circle cx="464.8" cy="61.8" r="4.2"/><circle cx="428.1" cy="64.8" r="4.2"/><circle cx="431.6" cy="64.8" r="4.2"/><circle cx="435.1" cy="64.8" r="4.2"/><circle cx="438.6" cy="64.8" r="4.2"/><circle cx="442.1" cy="64.8" r="4.2"/><circle cx="445.6" cy="64.8" r="4.2"/><circle cx="449.1" cy="64.8" r="4.2"/><circle cx="452.6" cy="64.8" r="4.2"/><circle cx="456.1" cy="64.8" r="4.2"/><circle cx="459.6" cy="64.8" r="4.2"/><circle cx="463.1" cy="64.8" r="4.2"/><circle cx="466.6" cy="64.8" r="4.2"/><circle cx="426.3" cy="67.8" r="4.2"/><circle cx="429.8" cy="67.8" r="4.2"/><circle cx="433.3" cy="67.8" r="4.2"/><circle cx="436.8" cy="67.8" r="4.2"/><circle cx="440.3" cy="67.8" r="4.2"/><circle cx="443.8" cy="67.8" r="4.2"/><circle cx="447.3" cy="67.8" r="4.2"/><circle cx="450.8" cy="67.8" r="4.2"/><circle cx="454.3" cy="67.8" r="4.2"/><circle cx="457.8" cy="67.8" r="4.2"/><circle cx="464.8" cy="67.8" r="4.2"/><circle cx="468.3" cy="67.8" r="4.2"/><circle cx="471.8" cy="67.8" r="4.2"/><circle cx="424.6" cy="70.9" r="4.2"/><circle cx="428.1" cy="70.9" r="4.2"/><circle cx="431.6" cy="70.9" r="4.2"/><circle cx="435.1" cy="70.9" r="4.2"/><circle cx="438.6" cy="70.9" r="4.2"/><circle cx="442.1" cy="70.9" r="4.2"/><circle cx="445.6" cy="70.9" r="4.2"/><circle cx="449.1" cy="70.9" r="4.2"/><circle cx="452.6" cy="70.9" r="4.2"/><circle cx="456.1" cy="70.9" r="4.2"/><circle cx="473.6" cy="70.9" r="4.2"/><circle cx="477.1" cy="70.9" r="4.2"/><circle cx="480.6" cy="70.9" r="4.2"/><circle cx="426.3" cy="73.9" r="4.2"/><circle cx="429.8" cy="73.9" r="4.2"/><circle cx="433.3" cy="73.9" r="4.2"/><circle cx="436.8" cy="73.9" r="4.2"/><circle cx="440.3" cy="73.9" r="4.2"/><circle cx="443.8" cy="73.9" r="4.2"/><circle cx="447.3" cy="73.9" r="4.2"/><circle cx="450.8" cy="73.9" r="4.2"/><circle cx="428.1" cy="76.9" r="4.2"/><circle cx="431.6" cy="76.9" r="4.2"/><circle cx="306.3" cy="48.3" r="4.2"/><circle cx="309.8" cy="48.3" r="4.2"/><circle cx="304.5" cy="51.3" r="4.2"/><circle cx="308.0" cy="51.3" r="4.2"/><circle cx="311.5" cy="51.3" r="4.2"/><circle cx="299.3" cy="54.3" r="4.2"/><circle cx="302.8" cy="54.3" r="4.2"/><circle cx="313.3" cy="54.3" r="4.2"/><circle cx="316.8" cy="54.3" r="4.2"/><circle cx="297.5" cy="57.3" r="4.2"/><circle cx="315.0" cy="57.3" r="4.2"/><circle cx="318.5" cy="57.3" r="4.2"/><circle cx="320.3" cy="60.4" r="4.2"/><circle cx="217.7" cy="53.7" r="4.2"/><circle cx="222.2" cy="56.4" r="4.2"/><circle cx="226.6" cy="53.7" r="4.2"/><circle cx="230.2" cy="52.8" r="4.2"/><circle cx="366.8" cy="67.0" r="4.2"/><circle cx="373.0" cy="66.7" r="4.2"/><circle cx="395.2" cy="70.6" r="4.2"/><circle cx="399.6" cy="72.4" r="4.2"/><circle cx="404.0" cy="69.7" r="4.2"/><circle cx="388.1" cy="91.9" r="4.2"/><circle cx="393.4" cy="90.5" r="4.2"/></g>
<g fill="#111"><circle cx="495.8" cy="72.8" r="5.15"/><circle cx="502.3" cy="69.0" r="5.15"/><circle cx="506.1" cy="72.8" r="5.15"/><circle cx="511.3" cy="78.0" r="5.15"/><circle cx="516.5" cy="83.2" r="5.15"/><circle cx="520.3" cy="67.7" r="5.15"/><circle cx="525.5" cy="71.5" r="5.15"/><circle cx="529.4" cy="75.4" r="5.15"/><circle cx="524.2" cy="88.3" r="5.15"/><circle cx="526.8" cy="96.1" r="5.15"/><circle cx="531.9" cy="101.2" r="5.15"/><circle cx="537.1" cy="106.4" r="5.15"/><circle cx="542.3" cy="103.8" r="5.15"/><circle cx="547.4" cy="99.9" r="5.15"/><circle cx="552.6" cy="96.1" r="5.15"/><circle cx="557.7" cy="101.2" r="5.15"/><circle cx="562.9" cy="97.4" r="5.15"/><circle cx="568.1" cy="92.2" r="5.15"/><circle cx="570.6" cy="85.7" r="5.15"/><circle cx="575.8" cy="80.6" r="5.15"/><circle cx="581.0" cy="75.4" r="5.15"/><circle cx="584.8" cy="71.5" r="5.15"/><circle cx="578.4" cy="72.8" r="5.15"/><circle cx="573.2" cy="75.4" r="5.15"/><circle cx="565.5" cy="78.0" r="5.15"/><circle cx="560.3" cy="80.6" r="5.15"/><circle cx="555.2" cy="83.2" r="5.15"/><circle cx="557.7" cy="90.9" r="5.15"/><circle cx="550.0" cy="106.4" r="5.15"/><circle cx="531.9" cy="85.7" r="5.15"/><circle cx="534.5" cy="93.5" r="5.15"/><circle cx="542.3" cy="96.1" r="5.15"/><circle cx="550.0" cy="90.9" r="5.15"/><circle cx="521.6" cy="101.2" r="5.15"/><circle cx="526.8" cy="106.4" r="5.15"/><circle cx="519.0" cy="75.4" r="5.15"/><circle cx="513.9" cy="72.8" r="5.15"/><circle cx="524.2" cy="80.6" r="5.15"/><circle cx="529.4" cy="106.4" r="5.15"/><circle cx="543.5" cy="107.7" r="5.15"/><circle cx="564.2" cy="85.7" r="5.15"/><circle cx="499.7" cy="97.4" r="5.15"/><circle cx="500.2" cy="103.8" r="5.15"/><circle cx="512.6" cy="110.8" r="5.15"/><circle cx="577.1" cy="105.1" r="5.15"/><circle cx="594.6" cy="106.4" r="5.15"/><circle cx="621.0" cy="112.3" r="5.15"/><circle cx="590.0" cy="93.5" r="5.15"/><circle cx="596.5" cy="90.9" r="5.15"/><circle cx="602.9" cy="87.0" r="5.15"/><circle cx="501.0" cy="124.5" r="5.15"/><circle cx="521.6" cy="119.3" r="5.15"/><circle cx="528.1" cy="121.4" r="5.15"/><circle cx="534.5" cy="120.6" r="5.15"/><circle cx="542.3" cy="119.3" r="5.15"/><circle cx="544.8" cy="125.7" r="5.15"/><circle cx="544.1" cy="130.9" r="5.15"/><circle cx="553.9" cy="118.8" r="5.15"/><circle cx="593.9" cy="122.4" r="5.15"/><circle cx="592.6" cy="125.7" r="5.15"/><circle cx="503.5" cy="136.1" r="5.15"/><circle cx="505.4" cy="148.5" r="5.15"/><circle cx="568.1" cy="137.4" r="5.15"/><circle cx="573.2" cy="136.1" r="5.15"/><circle cx="582.3" cy="137.4" r="5.15"/><circle cx="587.4" cy="139.9" r="5.15"/><circle cx="588.7" cy="146.4" r="5.15"/><circle cx="592.6" cy="151.5" r="5.15"/><circle cx="599.0" cy="150.3" r="5.15"/><circle cx="595.2" cy="154.1" r="5.15"/><circle cx="551.3" cy="148.5" r="5.15"/><circle cx="555.2" cy="158.0" r="5.15"/><circle cx="538.4" cy="152.8" r="5.15"/><circle cx="534.5" cy="156.7" r="5.15"/><circle cx="529.4" cy="164.5" r="5.15"/><circle cx="519.0" cy="160.6" r="5.15"/><circle cx="570.6" cy="154.6" r="5.15"/><circle cx="565.5" cy="163.2" r="5.15"/><circle cx="626.1" cy="147.2" r="5.15"/><circle cx="628.7" cy="167.0" r="5.15"/><circle cx="621.3" cy="112.3" r="5.15"/><circle cx="625.7" cy="147.2" r="5.15"/><circle cx="629.0" cy="167.0" r="5.15"/><circle cx="502.7" cy="69.4" r="5.15"/><circle cx="506.2" cy="69.4" r="5.15"/><circle cx="523.7" cy="69.4" r="5.15"/><circle cx="497.5" cy="72.4" r="5.15"/><circle cx="501.0" cy="72.4" r="5.15"/><circle cx="504.5" cy="72.4" r="5.15"/><circle cx="525.5" cy="72.4" r="5.15"/><circle cx="529.0" cy="72.4" r="5.15"/><circle cx="532.5" cy="72.4" r="5.15"/><circle cx="536.0" cy="72.4" r="5.15"/><circle cx="499.2" cy="75.4" r="5.15"/><circle cx="502.7" cy="75.4" r="5.15"/><circle cx="506.2" cy="75.4" r="5.15"/><circle cx="509.7" cy="75.4" r="5.15"/><circle cx="520.2" cy="75.4" r="5.15"/><circle cx="523.7" cy="75.4" r="5.15"/><circle cx="527.2" cy="75.4" r="5.15"/><circle cx="530.7" cy="75.4" r="5.15"/><circle cx="534.2" cy="75.4" r="5.15"/><circle cx="537.7" cy="75.4" r="5.15"/><circle cx="541.2" cy="75.4" r="5.15"/><circle cx="572.7" cy="75.4" r="5.15"/><circle cx="576.2" cy="75.4" r="5.15"/><circle cx="579.7" cy="75.4" r="5.15"/><circle cx="583.2" cy="75.4" r="5.15"/><circle cx="504.5" cy="78.5" r="5.15"/><circle cx="508.0" cy="78.5" r="5.15"/><circle cx="511.5" cy="78.5" r="5.15"/><circle cx="515.0" cy="78.5" r="5.15"/><circle cx="518.5" cy="78.5" r="5.15"/><circle cx="522.0" cy="78.5" r="5.15"/><circle cx="525.5" cy="78.5" r="5.15"/><circle cx="529.0" cy="78.5" r="5.15"/><circle cx="532.5" cy="78.5" r="5.15"/><circle cx="536.0" cy="78.5" r="5.15"/><circle cx="539.5" cy="78.5" r="5.15"/><circle cx="543.0" cy="78.5" r="5.15"/><circle cx="546.5" cy="78.5" r="5.15"/><circle cx="550.0" cy="78.5" r="5.15"/><circle cx="553.5" cy="78.5" r="5.15"/><circle cx="557.0" cy="78.5" r="5.15"/><circle cx="560.5" cy="78.5" r="5.15"/><circle cx="564.0" cy="78.5" r="5.15"/><circle cx="567.5" cy="78.5" r="5.15"/><circle cx="571.0" cy="78.5" r="5.15"/><circle cx="574.5" cy="78.5" r="5.15"/><circle cx="578.0" cy="78.5" r="5.15"/><circle cx="581.5" cy="78.5" r="5.15"/><circle cx="506.2" cy="81.5" r="5.15"/><circle cx="509.7" cy="81.5" r="5.15"/><circle cx="513.2" cy="81.5" r="5.15"/><circle cx="516.7" cy="81.5" r="5.15"/><circle cx="520.2" cy="81.5" r="5.15"/><circle cx="523.7" cy="81.5" r="5.15"/><circle cx="527.2" cy="81.5" r="5.15"/><circle cx="530.7" cy="81.5" r="5.15"/><circle cx="534.2" cy="81.5" r="5.15"/><circle cx="537.7" cy="81.5" r="5.15"/><circle cx="541.2" cy="81.5" r="5.15"/><circle cx="544.7" cy="81.5" r="5.15"/><circle cx="548.2" cy="81.5" r="5.15"/><circle cx="551.7" cy="81.5" r="5.15"/><circle cx="555.2" cy="81.5" r="5.15"/><circle cx="558.7" cy="81.5" r="5.15"/><circle cx="562.2" cy="81.5" r="5.15"/><circle cx="565.7" cy="81.5" r="5.15"/><circle cx="569.2" cy="81.5" r="5.15"/><circle cx="572.7" cy="81.5" r="5.15"/><circle cx="576.2" cy="81.5" r="5.15"/><circle cx="511.5" cy="84.5" r="5.15"/><circle cx="515.0" cy="84.5" r="5.15"/><circle cx="518.5" cy="84.5" r="5.15"/><circle cx="522.0" cy="84.5" r="5.15"/><circle cx="525.5" cy="84.5" r="5.15"/><circle cx="529.0" cy="84.5" r="5.15"/><circle cx="532.5" cy="84.5" r="5.15"/><circle cx="536.0" cy="84.5" r="5.15"/><circle cx="539.5" cy="84.5" r="5.15"/><circle cx="543.0" cy="84.5" r="5.15"/><circle cx="546.5" cy="84.5" r="5.15"/><circle cx="550.0" cy="84.5" r="5.15"/><circle cx="553.5" cy="84.5" r="5.15"/><circle cx="557.0" cy="84.5" r="5.15"/><circle cx="560.5" cy="84.5" r="5.15"/><circle cx="564.0" cy="84.5" r="5.15"/><circle cx="567.5" cy="84.5" r="5.15"/><circle cx="571.0" cy="84.5" r="5.15"/><circle cx="513.2" cy="87.6" r="5.15"/><circle cx="516.7" cy="87.6" r="5.15"/><circle cx="520.2" cy="87.6" r="5.15"/><circle cx="523.7" cy="87.6" r="5.15"/><circle cx="527.2" cy="87.6" r="5.15"/><circle cx="530.7" cy="87.6" r="5.15"/><circle cx="534.2" cy="87.6" r="5.15"/><circle cx="537.7" cy="87.6" r="5.15"/><circle cx="541.2" cy="87.6" r="5.15"/><circle cx="544.7" cy="87.6" r="5.15"/><circle cx="548.2" cy="87.6" r="5.15"/><circle cx="551.7" cy="87.6" r="5.15"/><circle cx="555.2" cy="87.6" r="5.15"/><circle cx="558.7" cy="87.6" r="5.15"/><circle cx="562.2" cy="87.6" r="5.15"/><circle cx="565.7" cy="87.6" r="5.15"/><circle cx="569.2" cy="87.6" r="5.15"/><circle cx="518.5" cy="90.6" r="5.15"/><circle cx="522.0" cy="90.6" r="5.15"/><circle cx="525.5" cy="90.6" r="5.15"/><circle cx="529.0" cy="90.6" r="5.15"/><circle cx="532.5" cy="90.6" r="5.15"/><circle cx="536.0" cy="90.6" r="5.15"/><circle cx="539.5" cy="90.6" r="5.15"/><circle cx="543.0" cy="90.6" r="5.15"/><circle cx="546.5" cy="90.6" r="5.15"/><circle cx="550.0" cy="90.6" r="5.15"/><circle cx="553.5" cy="90.6" r="5.15"/><circle cx="557.0" cy="90.6" r="5.15"/><circle cx="560.5" cy="90.6" r="5.15"/><circle cx="564.0" cy="90.6" r="5.15"/><circle cx="567.5" cy="90.6" r="5.15"/><circle cx="523.7" cy="93.6" r="5.15"/><circle cx="527.2" cy="93.6" r="5.15"/><circle cx="530.7" cy="93.6" r="5.15"/><circle cx="534.2" cy="93.6" r="5.15"/><circle cx="537.7" cy="93.6" r="5.15"/><circle cx="541.2" cy="93.6" r="5.15"/><circle cx="544.7" cy="93.6" r="5.15"/><circle cx="548.2" cy="93.6" r="5.15"/><circle cx="551.7" cy="93.6" r="5.15"/><circle cx="555.2" cy="93.6" r="5.15"/><circle cx="558.7" cy="93.6" r="5.15"/><circle cx="562.2" cy="93.6" r="5.15"/><circle cx="565.7" cy="93.6" r="5.15"/><circle cx="525.5" cy="96.7" r="5.15"/><circle cx="529.0" cy="96.7" r="5.15"/><circle cx="532.5" cy="96.7" r="5.15"/><circle cx="536.0" cy="96.7" r="5.15"/><circle cx="539.5" cy="96.7" r="5.15"/><circle cx="543.0" cy="96.7" r="5.15"/><circle cx="546.5" cy="96.7" r="5.15"/><circle cx="550.0" cy="96.7" r="5.15"/><circle cx="553.5" cy="96.7" r="5.15"/><circle cx="557.0" cy="96.7" r="5.15"/><circle cx="560.5" cy="96.7" r="5.15"/><circle cx="564.0" cy="96.7" r="5.15"/><circle cx="527.2" cy="99.7" r="5.15"/><circle cx="530.7" cy="99.7" r="5.15"/><circle cx="534.2" cy="99.7" r="5.15"/><circle cx="537.7" cy="99.7" r="5.15"/><circle cx="541.2" cy="99.7" r="5.15"/><circle cx="544.7" cy="99.7" r="5.15"/><circle cx="548.2" cy="99.7" r="5.15"/><circle cx="551.7" cy="99.7" r="5.15"/><circle cx="555.2" cy="99.7" r="5.15"/><circle cx="558.7" cy="99.7" r="5.15"/><circle cx="562.2" cy="99.7" r="5.15"/><circle cx="529.0" cy="102.7" r="5.15"/><circle cx="532.5" cy="102.7" r="5.15"/><circle cx="536.0" cy="102.7" r="5.15"/><circle cx="539.5" cy="102.7" r="5.15"/><circle cx="543.0" cy="102.7" r="5.15"/><circle cx="546.5" cy="102.7" r="5.15"/><circle cx="550.0" cy="102.7" r="5.15"/><circle cx="553.5" cy="102.7" r="5.15"/><circle cx="557.0" cy="102.7" r="5.15"/><circle cx="560.5" cy="102.7" r="5.15"/><circle cx="534.2" cy="105.8" r="5.15"/><circle cx="537.7" cy="105.8" r="5.15"/><circle cx="541.2" cy="105.8" r="5.15"/><circle cx="544.7" cy="105.8" r="5.15"/><circle cx="499.8" cy="97.2" r="5.15"/><circle cx="499.8" cy="102.3" r="5.15"/><circle cx="512.8" cy="110.7" r="5.15"/><circle cx="521.8" cy="120.1" r="5.15"/><circle cx="526.0" cy="120.9" r="5.15"/><circle cx="533.6" cy="120.9" r="5.15"/><circle cx="543.8" cy="120.9" r="5.15"/><circle cx="544.6" cy="131.1" r="5.15"/><circle cx="553.9" cy="118.9" r="5.15"/><circle cx="501.4" cy="124.3" r="5.15"/><circle cx="504.0" cy="135.8" r="5.15"/><circle cx="506.0" cy="148.8" r="5.15"/><circle cx="518.9" cy="160.7" r="5.15"/><circle cx="528.5" cy="164.6" r="5.15"/><circle cx="535.3" cy="156.5" r="5.15"/><circle cx="538.7" cy="153.1" r="5.15"/><circle cx="551.1" cy="148.8" r="5.15"/><circle cx="554.8" cy="159.0" r="5.15"/><circle cx="565.0" cy="163.6" r="5.15"/><circle cx="570.9" cy="154.8" r="5.15"/><circle cx="566.6" cy="137.8" r="5.15"/><circle cx="572.6" cy="136.1" r="5.15"/><circle cx="581.0" cy="137.0" r="5.15"/><circle cx="587.0" cy="137.8" r="5.15"/><circle cx="587.8" cy="144.6" r="5.15"/><circle cx="591.2" cy="149.7" r="5.15"/><circle cx="593.7" cy="154.8" r="5.15"/><circle cx="598.8" cy="150.5" r="5.15"/><circle cx="576.8" cy="105.7" r="5.15"/><circle cx="594.6" cy="106.8" r="5.15"/><circle cx="593.7" cy="121.7" r="5.15"/><circle cx="593.7" cy="125.1" r="5.15"/><circle cx="619.1" cy="112.8" r="5.15"/><circle cx="587.8" cy="93.0" r="5.15"/><circle cx="594.6" cy="93.8" r="5.15"/><circle cx="601.4" cy="90.4" r="5.15"/><circle cx="605.6" cy="87.0" r="5.15"/></g>
<g fill="#ff9f3f"><circle cx="495.8" cy="72.8" r="4.2"/><circle cx="502.3" cy="69.0" r="4.2"/><circle cx="506.1" cy="72.8" r="4.2"/><circle cx="511.3" cy="78.0" r="4.2"/><circle cx="516.5" cy="83.2" r="4.2"/><circle cx="520.3" cy="67.7" r="4.2"/><circle cx="525.5" cy="71.5" r="4.2"/><circle cx="529.4" cy="75.4" r="4.2"/><circle cx="524.2" cy="88.3" r="4.2"/><circle cx="526.8" cy="96.1" r="4.2"/><circle cx="531.9" cy="101.2" r="4.2"/><circle cx="537.1" cy="106.4" r="4.2"/><circle cx="542.3" cy="103.8" r="4.2"/><circle cx="547.4" cy="99.9" r="4.2"/><circle cx="552.6" cy="96.1" r="4.2"/><circle cx="557.7" cy="101.2" r="4.2"/><circle cx="562.9" cy="97.4" r="4.2"/><circle cx="568.1" cy="92.2" r="4.2"/><circle cx="570.6" cy="85.7" r="4.2"/><circle cx="575.8" cy="80.6" r="4.2"/><circle cx="581.0" cy="75.4" r="4.2"/><circle cx="584.8" cy="71.5" r="4.2"/><circle cx="578.4" cy="72.8" r="4.2"/><circle cx="573.2" cy="75.4" r="4.2"/><circle cx="565.5" cy="78.0" r="4.2"/><circle cx="560.3" cy="80.6" r="4.2"/><circle cx="555.2" cy="83.2" r="4.2"/><circle cx="557.7" cy="90.9" r="4.2"/><circle cx="550.0" cy="106.4" r="4.2"/><circle cx="531.9" cy="85.7" r="4.2"/><circle cx="534.5" cy="93.5" r="4.2"/><circle cx="542.3" cy="96.1" r="4.2"/><circle cx="550.0" cy="90.9" r="4.2"/><circle cx="521.6" cy="101.2" r="4.2"/><circle cx="526.8" cy="106.4" r="4.2"/><circle cx="519.0" cy="75.4" r="4.2"/><circle cx="513.9" cy="72.8" r="4.2"/><circle cx="524.2" cy="80.6" r="4.2"/><circle cx="529.4" cy="106.4" r="4.2"/><circle cx="543.5" cy="107.7" r="4.2"/><circle cx="564.2" cy="85.7" r="4.2"/><circle cx="499.7" cy="97.4" r="4.2"/><circle cx="500.2" cy="103.8" r="4.2"/><circle cx="512.6" cy="110.8" r="4.2"/><circle cx="577.1" cy="105.1" r="4.2"/><circle cx="594.6" cy="106.4" r="4.2"/><circle cx="621.0" cy="112.3" r="4.2"/><circle cx="590.0" cy="93.5" r="4.2"/><circle cx="596.5" cy="90.9" r="4.2"/><circle cx="602.9" cy="87.0" r="4.2"/><circle cx="501.0" cy="124.5" r="4.2"/><circle cx="521.6" cy="119.3" r="4.2"/><circle cx="528.1" cy="121.4" r="4.2"/><circle cx="534.5" cy="120.6" r="4.2"/><circle cx="542.3" cy="119.3" r="4.2"/><circle cx="544.8" cy="125.7" r="4.2"/><circle cx="544.1" cy="130.9" r="4.2"/><circle cx="553.9" cy="118.8" r="4.2"/><circle cx="593.9" cy="122.4" r="4.2"/><circle cx="592.6" cy="125.7" r="4.2"/><circle cx="503.5" cy="136.1" r="4.2"/><circle cx="505.4" cy="148.5" r="4.2"/><circle cx="568.1" cy="137.4" r="4.2"/><circle cx="573.2" cy="136.1" r="4.2"/><circle cx="582.3" cy="137.4" r="4.2"/><circle cx="587.4" cy="139.9" r="4.2"/><circle cx="588.7" cy="146.4" r="4.2"/><circle cx="592.6" cy="151.5" r="4.2"/><circle cx="599.0" cy="150.3" r="4.2"/><circle cx="595.2" cy="154.1" r="4.2"/><circle cx="551.3" cy="148.5" r="4.2"/><circle cx="555.2" cy="158.0" r="4.2"/><circle cx="538.4" cy="152.8" r="4.2"/><circle cx="534.5" cy="156.7" r="4.2"/><circle cx="529.4" cy="164.5" r="4.2"/><circle cx="519.0" cy="160.6" r="4.2"/><circle cx="570.6" cy="154.6" r="4.2"/><circle cx="565.5" cy="163.2" r="4.2"/><circle cx="626.1" cy="147.2" r="4.2"/><circle cx="628.7" cy="167.0" r="4.2"/><circle cx="621.3" cy="112.3" r="4.2"/><circle cx="625.7" cy="147.2" r="4.2"/><circle cx="629.0" cy="167.0" r="4.2"/><circle cx="502.7" cy="69.4" r="4.2"/><circle cx="506.2" cy="69.4" r="4.2"/><circle cx="523.7" cy="69.4" r="4.2"/><circle cx="497.5" cy="72.4" r="4.2"/><circle cx="501.0" cy="72.4" r="4.2"/><circle cx="504.5" cy="72.4" r="4.2"/><circle cx="525.5" cy="72.4" r="4.2"/><circle cx="529.0" cy="72.4" r="4.2"/><circle cx="532.5" cy="72.4" r="4.2"/><circle cx="536.0" cy="72.4" r="4.2"/><circle cx="499.2" cy="75.4" r="4.2"/><circle cx="502.7" cy="75.4" r="4.2"/><circle cx="506.2" cy="75.4" r="4.2"/><circle cx="509.7" cy="75.4" r="4.2"/><circle cx="520.2" cy="75.4" r="4.2"/><circle cx="523.7" cy="75.4" r="4.2"/><circle cx="527.2" cy="75.4" r="4.2"/><circle cx="530.7" cy="75.4" r="4.2"/><circle cx="534.2" cy="75.4" r="4.2"/><circle cx="537.7" cy="75.4" r="4.2"/><circle cx="541.2" cy="75.4" r="4.2"/><circle cx="572.7" cy="75.4" r="4.2"/><circle cx="576.2" cy="75.4" r="4.2"/><circle cx="579.7" cy="75.4" r="4.2"/><circle cx="583.2" cy="75.4" r="4.2"/><circle cx="504.5" cy="78.5" r="4.2"/><circle cx="508.0" cy="78.5" r="4.2"/><circle cx="511.5" cy="78.5" r="4.2"/><circle cx="515.0" cy="78.5" r="4.2"/><circle cx="518.5" cy="78.5" r="4.2"/><circle cx="522.0" cy="78.5" r="4.2"/><circle cx="525.5" cy="78.5" r="4.2"/><circle cx="529.0" cy="78.5" r="4.2"/><circle cx="532.5" cy="78.5" r="4.2"/><circle cx="536.0" cy="78.5" r="4.2"/><circle cx="539.5" cy="78.5" r="4.2"/><circle cx="543.0" cy="78.5" r="4.2"/><circle cx="546.5" cy="78.5" r="4.2"/><circle cx="550.0" cy="78.5" r="4.2"/><circle cx="553.5" cy="78.5" r="4.2"/><circle cx="557.0" cy="78.5" r="4.2"/><circle cx="560.5" cy="78.5" r="4.2"/><circle cx="564.0" cy="78.5" r="4.2"/><circle cx="567.5" cy="78.5" r="4.2"/><circle cx="571.0" cy="78.5" r="4.2"/><circle cx="574.5" cy="78.5" r="4.2"/><circle cx="578.0" cy="78.5" r="4.2"/><circle cx="581.5" cy="78.5" r="4.2"/><circle cx="506.2" cy="81.5" r="4.2"/><circle cx="509.7" cy="81.5" r="4.2"/><circle cx="513.2" cy="81.5" r="4.2"/><circle cx="516.7" cy="81.5" r="4.2"/><circle cx="520.2" cy="81.5" r="4.2"/><circle cx="523.7" cy="81.5" r="4.2"/><circle cx="527.2" cy="81.5" r="4.2"/><circle cx="530.7" cy="81.5" r="4.2"/><circle cx="534.2" cy="81.5" r="4.2"/><circle cx="537.7" cy="81.5" r="4.2"/><circle cx="541.2" cy="81.5" r="4.2"/><circle cx="544.7" cy="81.5" r="4.2"/><circle cx="548.2" cy="81.5" r="4.2"/><circle cx="551.7" cy="81.5" r="4.2"/><circle cx="555.2" cy="81.5" r="4.2"/><circle cx="558.7" cy="81.5" r="4.2"/><circle cx="562.2" cy="81.5" r="4.2"/><circle cx="565.7" cy="81.5" r="4.2"/><circle cx="569.2" cy="81.5" r="4.2"/><circle cx="572.7" cy="81.5" r="4.2"/><circle cx="576.2" cy="81.5" r="4.2"/><circle cx="511.5" cy="84.5" r="4.2"/><circle cx="515.0" cy="84.5" r="4.2"/><circle cx="518.5" cy="84.5" r="4.2"/><circle cx="522.0" cy="84.5" r="4.2"/><circle cx="525.5" cy="84.5" r="4.2"/><circle cx="529.0" cy="84.5" r="4.2"/><circle cx="532.5" cy="84.5" r="4.2"/><circle cx="536.0" cy="84.5" r="4.2"/><circle cx="539.5" cy="84.5" r="4.2"/><circle cx="543.0" cy="84.5" r="4.2"/><circle cx="546.5" cy="84.5" r="4.2"/><circle cx="550.0" cy="84.5" r="4.2"/><circle cx="553.5" cy="84.5" r="4.2"/><circle cx="557.0" cy="84.5" r="4.2"/><circle cx="560.5" cy="84.5" r="4.2"/><circle cx="564.0" cy="84.5" r="4.2"/><circle cx="567.5" cy="84.5" r="4.2"/><circle cx="571.0" cy="84.5" r="4.2"/><circle cx="513.2" cy="87.6" r="4.2"/><circle cx="516.7" cy="87.6" r="4.2"/><circle cx="520.2" cy="87.6" r="4.2"/><circle cx="523.7" cy="87.6" r="4.2"/><circle cx="527.2" cy="87.6" r="4.2"/><circle cx="530.7" cy="87.6" r="4.2"/><circle cx="534.2" cy="87.6" r="4.2"/><circle cx="537.7" cy="87.6" r="4.2"/><circle cx="541.2" cy="87.6" r="4.2"/><circle cx="544.7" cy="87.6" r="4.2"/><circle cx="548.2" cy="87.6" r="4.2"/><circle cx="551.7" cy="87.6" r="4.2"/><circle cx="555.2" cy="87.6" r="4.2"/><circle cx="558.7" cy="87.6" r="4.2"/><circle cx="562.2" cy="87.6" r="4.2"/><circle cx="565.7" cy="87.6" r="4.2"/><circle cx="569.2" cy="87.6" r="4.2"/><circle cx="518.5" cy="90.6" r="4.2"/><circle cx="522.0" cy="90.6" r="4.2"/><circle cx="525.5" cy="90.6" r="4.2"/><circle cx="529.0" cy="90.6" r="4.2"/><circle cx="532.5" cy="90.6" r="4.2"/><circle cx="536.0" cy="90.6" r="4.2"/><circle cx="539.5" cy="90.6" r="4.2"/><circle cx="543.0" cy="90.6" r="4.2"/><circle cx="546.5" cy="90.6" r="4.2"/><circle cx="550.0" cy="90.6" r="4.2"/><circle cx="553.5" cy="90.6" r="4.2"/><circle cx="557.0" cy="90.6" r="4.2"/><circle cx="560.5" cy="90.6" r="4.2"/><circle cx="564.0" cy="90.6" r="4.2"/><circle cx="567.5" cy="90.6" r="4.2"/><circle cx="523.7" cy="93.6" r="4.2"/><circle cx="527.2" cy="93.6" r="4.2"/><circle cx="530.7" cy="93.6" r="4.2"/><circle cx="534.2" cy="93.6" r="4.2"/><circle cx="537.7" cy="93.6" r="4.2"/><circle cx="541.2" cy="93.6" r="4.2"/><circle cx="544.7" cy="93.6" r="4.2"/><circle cx="548.2" cy="93.6" r="4.2"/><circle cx="551.7" cy="93.6" r="4.2"/><circle cx="555.2" cy="93.6" r="4.2"/><circle cx="558.7" cy="93.6" r="4.2"/><circle cx="562.2" cy="93.6" r="4.2"/><circle cx="565.7" cy="93.6" r="4.2"/><circle cx="525.5" cy="96.7" r="4.2"/><circle cx="529.0" cy="96.7" r="4.2"/><circle cx="532.5" cy="96.7" r="4.2"/><circle cx="536.0" cy="96.7" r="4.2"/><circle cx="539.5" cy="96.7" r="4.2"/><circle cx="543.0" cy="96.7" r="4.2"/><circle cx="546.5" cy="96.7" r="4.2"/><circle cx="550.0" cy="96.7" r="4.2"/><circle cx="553.5" cy="96.7" r="4.2"/><circle cx="557.0" cy="96.7" r="4.2"/><circle cx="560.5" cy="96.7" r="4.2"/><circle cx="564.0" cy="96.7" r="4.2"/><circle cx="527.2" cy="99.7" r="4.2"/><circle cx="530.7" cy="99.7" r="4.2"/><circle cx="534.2" cy="99.7" r="4.2"/><circle cx="537.7" cy="99.7" r="4.2"/><circle cx="541.2" cy="99.7" r="4.2"/><circle cx="544.7" cy="99.7" r="4.2"/><circle cx="548.2" cy="99.7" r="4.2"/><circle cx="551.7" cy="99.7" r="4.2"/><circle cx="555.2" cy="99.7" r="4.2"/><circle cx="558.7" cy="99.7" r="4.2"/><circle cx="562.2" cy="99.7" r="4.2"/><circle cx="529.0" cy="102.7" r="4.2"/><circle cx="532.5" cy="102.7" r="4.2"/><circle cx="536.0" cy="102.7" r="4.2"/><circle cx="539.5" cy="102.7" r="4.2"/><circle cx="543.0" cy="102.7" r="4.2"/><circle cx="546.5" cy="102.7" r="4.2"/><circle cx="550.0" cy="102.7" r="4.2"/><circle cx="553.5" cy="102.7" r="4.2"/><circle cx="557.0" cy="102.7" r="4.2"/><circle cx="560.5" cy="102.7" r="4.2"/><circle cx="534.2" cy="105.8" r="4.2"/><circle cx="537.7" cy="105.8" r="4.2"/><circle cx="541.2" cy="105.8" r="4.2"/><circle cx="544.7" cy="105.8" r="4.2"/><circle cx="499.8" cy="97.2" r="4.2"/><circle cx="499.8" cy="102.3" r="4.2"/><circle cx="512.8" cy="110.7" r="4.2"/><circle cx="521.8" cy="120.1" r="4.2"/><circle cx="526.0" cy="120.9" r="4.2"/><circle cx="533.6" cy="120.9" r="4.2"/><circle cx="543.8" cy="120.9" r="4.2"/><circle cx="544.6" cy="131.1" r="4.2"/><circle cx="553.9" cy="118.9" r="4.2"/><circle cx="501.4" cy="124.3" r="4.2"/><circle cx="504.0" cy="135.8" r="4.2"/><circle cx="506.0" cy="148.8" r="4.2"/><circle cx="518.9" cy="160.7" r="4.2"/><circle cx="528.5" cy="164.6" r="4.2"/><circle cx="535.3" cy="156.5" r="4.2"/><circle cx="538.7" cy="153.1" r="4.2"/><circle cx="551.1" cy="148.8" r="4.2"/><circle cx="554.8" cy="159.0" r="4.2"/><circle cx="565.0" cy="163.6" r="4.2"/><circle cx="570.9" cy="154.8" r="4.2"/><circle cx="566.6" cy="137.8" r="4.2"/><circle cx="572.6" cy="136.1" r="4.2"/><circle cx="581.0" cy="137.0" r="4.2"/><circle cx="587.0" cy="137.8" r="4.2"/><circle cx="587.8" cy="144.6" r="4.2"/><circle cx="591.2" cy="149.7" r="4.2"/><circle cx="593.7" cy="154.8" r="4.2"/><circle cx="598.8" cy="150.5" r="4.2"/><circle cx="576.8" cy="105.7" r="4.2"/><circle cx="594.6" cy="106.8" r="4.2"/><circle cx="593.7" cy="121.7" r="4.2"/><circle cx="593.7" cy="125.1" r="4.2"/><circle cx="619.1" cy="112.8" r="4.2"/><circle cx="587.8" cy="93.0" r="4.2"/><circle cx="594.6" cy="93.8" r="4.2"/><circle cx="601.4" cy="90.4" r="4.2"/><circle cx="605.6" cy="87.0" r="4.2"/></g>
<g fill="#111"><circle cx="583.0" cy="192.8" r="5.15"/><circle cx="597.0" cy="194.1" r="5.15"/><circle cx="609.4" cy="205.7" r="5.15"/><circle cx="609.4" cy="210.1" r="5.15"/><circle cx="588.2" cy="209.6" r="5.15"/><circle cx="588.2" cy="216.1" r="5.15"/><circle cx="622.3" cy="219.4" r="5.15"/><circle cx="627.4" cy="220.5" r="5.15"/><circle cx="685.8" cy="132.2" r="5.15"/><circle cx="685.8" cy="138.6" r="5.15"/><circle cx="683.2" cy="142.5" r="5.15"/><circle cx="669.0" cy="145.9" r="5.15"/><circle cx="661.3" cy="150.8" r="5.15"/><circle cx="681.9" cy="152.1" r="5.15"/><circle cx="766.6" cy="134.8" r="5.15"/><circle cx="740.8" cy="152.1" r="5.15"/><circle cx="758.1" cy="161.9" r="5.15"/><circle cx="780.0" cy="169.6" r="5.15"/><circle cx="774.8" cy="176.1" r="5.15"/><circle cx="771.0" cy="179.9" r="5.15"/><circle cx="768.4" cy="183.8" r="5.15"/><circle cx="778.7" cy="189.0" r="5.15"/><circle cx="777.9" cy="199.3" r="5.15"/><circle cx="794.2" cy="201.9" r="5.15"/><circle cx="789.0" cy="207.0" r="5.15"/><circle cx="776.6" cy="210.9" r="5.15"/><circle cx="796.0" cy="219.9" r="5.15"/><circle cx="794.2" cy="229.0" r="5.15"/><circle cx="792.9" cy="234.1" r="5.15"/><circle cx="739.5" cy="230.3" r="5.15"/><circle cx="731.0" cy="243.2" r="5.15"/><circle cx="731.7" cy="249.6" r="5.15"/><circle cx="623.9" cy="219.9" r="5.15"/><circle cx="643.2" cy="230.3" r="5.15"/><circle cx="645.8" cy="234.1" r="5.15"/><circle cx="652.3" cy="232.8" r="5.15"/><circle cx="656.1" cy="234.1" r="5.15"/><circle cx="761.9" cy="218.6" r="5.15"/><circle cx="769.7" cy="221.2" r="5.15"/><circle cx="774.8" cy="223.8" r="5.15"/><circle cx="782.6" cy="219.9" r="5.15"/><circle cx="759.4" cy="225.1" r="5.15"/><circle cx="754.2" cy="230.3" r="5.15"/><circle cx="749.0" cy="234.1" r="5.15"/><circle cx="756.8" cy="239.3" r="5.15"/><circle cx="764.5" cy="241.9" r="5.15"/><circle cx="772.3" cy="238.0" r="5.15"/><circle cx="777.4" cy="232.8" r="5.15"/><circle cx="782.6" cy="240.6" r="5.15"/><circle cx="786.5" cy="244.5" r="5.15"/><circle cx="768.4" cy="230.3" r="5.15"/><circle cx="774.8" cy="243.2" r="5.15"/><circle cx="765.8" cy="235.4" r="5.15"/><circle cx="787.7" cy="256.1" r="5.15"/><circle cx="800.6" cy="256.1" r="5.15"/><circle cx="814.8" cy="256.1" r="5.15"/><circle cx="823.9" cy="257.4" r="5.15"/><circle cx="732.3" cy="250.6" r="5.15"/><circle cx="676.3" cy="275.6" r="5.15"/><circle cx="636.8" cy="286.7" r="5.15"/><circle cx="641.2" cy="281.5" r="5.15"/><circle cx="771.0" cy="267.4" r="5.15"/><circle cx="760.6" cy="273.8" r="5.15"/><circle cx="764.5" cy="278.5" r="5.15"/><circle cx="771.0" cy="291.9" r="5.15"/><circle cx="787.2" cy="257.0" r="5.15"/><circle cx="795.5" cy="258.3" r="5.15"/><circle cx="801.9" cy="257.0" r="5.15"/><circle cx="814.8" cy="255.7" r="5.15"/><circle cx="823.9" cy="259.6" r="5.15"/><circle cx="792.9" cy="264.8" r="5.15"/><circle cx="798.1" cy="273.8" r="5.15"/><circle cx="783.9" cy="277.7" r="5.15"/><circle cx="787.7" cy="282.8" r="5.15"/><circle cx="794.2" cy="280.3" r="5.15"/><circle cx="803.2" cy="277.7" r="5.15"/><circle cx="811.0" cy="273.8" r="5.15"/><circle cx="818.7" cy="271.2" r="5.15"/><circle cx="826.5" cy="269.9" r="5.15"/><circle cx="832.9" cy="268.6" r="5.15"/><circle cx="829.0" cy="264.8" r="5.15"/><circle cx="821.3" cy="266.1" r="5.15"/><circle cx="743.1" cy="309.2" r="5.15"/><circle cx="746.5" cy="317.7" r="5.15"/><circle cx="738.7" cy="328.0" r="5.15"/><circle cx="743.9" cy="331.9" r="5.15"/><circle cx="734.8" cy="346.8" r="5.15"/><circle cx="723.2" cy="354.6" r="5.15"/><circle cx="725.8" cy="360.3" r="5.15"/><circle cx="721.2" cy="362.8" r="5.15"/><circle cx="716.8" cy="373.7" r="5.15"/><circle cx="822.3" cy="270.5" r="5.15"/><circle cx="825.8" cy="270.5" r="5.15"/><circle cx="829.3" cy="270.5" r="5.15"/><circle cx="813.6" cy="273.5" r="5.15"/><circle cx="817.1" cy="273.5" r="5.15"/><circle cx="820.6" cy="273.5" r="5.15"/><circle cx="765.5" cy="221.8" r="5.15"/><circle cx="769.0" cy="221.8" r="5.15"/><circle cx="772.5" cy="221.8" r="5.15"/><circle cx="776.0" cy="221.8" r="5.15"/><circle cx="760.2" cy="224.8" r="5.15"/><circle cx="763.7" cy="224.8" r="5.15"/><circle cx="767.2" cy="224.8" r="5.15"/><circle cx="770.7" cy="224.8" r="5.15"/><circle cx="774.2" cy="224.8" r="5.15"/><circle cx="777.7" cy="224.8" r="5.15"/><circle cx="781.2" cy="224.8" r="5.15"/><circle cx="755.0" cy="227.8" r="5.15"/><circle cx="758.5" cy="227.8" r="5.15"/><circle cx="762.0" cy="227.8" r="5.15"/><circle cx="765.5" cy="227.8" r="5.15"/><circle cx="769.0" cy="227.8" r="5.15"/><circle cx="772.5" cy="227.8" r="5.15"/><circle cx="776.0" cy="227.8" r="5.15"/><circle cx="779.5" cy="227.8" r="5.15"/><circle cx="783.0" cy="227.8" r="5.15"/><circle cx="753.2" cy="230.9" r="5.15"/><circle cx="756.7" cy="230.9" r="5.15"/><circle cx="760.2" cy="230.9" r="5.15"/><circle cx="763.7" cy="230.9" r="5.15"/><circle cx="767.2" cy="230.9" r="5.15"/><circle cx="770.7" cy="230.9" r="5.15"/><circle cx="774.2" cy="230.9" r="5.15"/><circle cx="777.7" cy="230.9" r="5.15"/><circle cx="781.2" cy="230.9" r="5.15"/><circle cx="755.0" cy="233.9" r="5.15"/><circle cx="758.5" cy="233.9" r="5.15"/><circle cx="762.0" cy="233.9" r="5.15"/><circle cx="765.5" cy="233.9" r="5.15"/><circle cx="769.0" cy="233.9" r="5.15"/><circle cx="772.5" cy="233.9" r="5.15"/><circle cx="776.0" cy="233.9" r="5.15"/><circle cx="779.5" cy="233.9" r="5.15"/><circle cx="783.0" cy="233.9" r="5.15"/><circle cx="760.2" cy="236.9" r="5.15"/><circle cx="763.7" cy="236.9" r="5.15"/><circle cx="767.2" cy="236.9" r="5.15"/><circle cx="770.7" cy="236.9" r="5.15"/><circle cx="774.2" cy="236.9" r="5.15"/><circle cx="777.7" cy="236.9" r="5.15"/><circle cx="781.2" cy="236.9" r="5.15"/><circle cx="814.8" cy="255.7" r="5.15"/><circle cx="823.5" cy="259.4" r="5.15"/><circle cx="787.3" cy="256.5" r="5.15"/><circle cx="794.5" cy="260.1" r="5.15"/><circle cx="800.3" cy="256.5" r="5.15"/><circle cx="793.1" cy="265.9" r="5.15"/><circle cx="784.4" cy="277.5" r="5.15"/><circle cx="788.7" cy="283.3" r="5.15"/><circle cx="797.4" cy="276.1" r="5.15"/><circle cx="803.2" cy="279.0" r="5.15"/><circle cx="794.5" cy="202.0" r="5.15"/><circle cx="789.4" cy="207.8" r="5.15"/><circle cx="796.0" cy="219.5" r="5.15"/><circle cx="794.5" cy="231.1" r="5.15"/><circle cx="793.1" cy="235.4" r="5.15"/><circle cx="785.8" cy="242.7" r="5.15"/><circle cx="782.9" cy="220.9" r="5.15"/><circle cx="780.7" cy="189.0" r="5.15"/><circle cx="780.0" cy="200.6" r="5.15"/></g>
<g fill="#984ea3"><circle cx="583.0" cy="192.8" r="4.2"/><circle cx="597.0" cy="194.1" r="4.2"/><circle cx="609.4" cy="205.7" r="4.2"/><circle cx="609.4" cy="210.1" r="4.2"/><circle cx="588.2" cy="209.6" r="4.2"/><circle cx="588.2" cy="216.1" r="4.2"/><circle cx="622.3" cy="219.4" r="4.2"/><circle cx="627.4" cy="220.5" r="4.2"/><circle cx="685.8" cy="132.2" r="4.2"/><circle cx="685.8" cy="138.6" r="4.2"/><circle cx="683.2" cy="142.5" r="4.2"/><circle cx="669.0" cy="145.9" r="4.2"/><circle cx="661.3" cy="150.8" r="4.2"/><circle cx="681.9" cy="152.1" r="4.2"/><circle cx="766.6" cy="134.8" r="4.2"/><circle cx="740.8" cy="152.1" r="4.2"/><circle cx="758.1" cy="161.9" r="4.2"/><circle cx="780.0" cy="169.6" r="4.2"/><circle cx="774.8" cy="176.1" r="4.2"/><circle cx="771.0" cy="179.9" r="4.2"/><circle cx="768.4" cy="183.8" r="4.2"/><circle cx="778.7" cy="189.0" r="4.2"/><circle cx="777.9" cy="199.3" r="4.2"/><circle cx="794.2" cy="201.9" r="4.2"/><circle cx="789.0" cy="207.0" r="4.2"/><circle cx="776.6" cy="210.9" r="4.2"/><circle cx="796.0" cy="219.9" r="4.2"/><circle cx="794.2" cy="229.0" r="4.2"/><circle cx="792.9" cy="234.1" r="4.2"/><circle cx="739.5" cy="230.3" r="4.2"/><circle cx="731.0" cy="243.2" r="4.2"/><circle cx="731.7" cy="249.6" r="4.2"/><circle cx="623.9" cy="219.9" r="4.2"/><circle cx="643.2" cy="230.3" r="4.2"/><circle cx="645.8" cy="234.1" r="4.2"/><circle cx="652.3" cy="232.8" r="4.2"/><circle cx="656.1" cy="234.1" r="4.2"/><circle cx="761.9" cy="218.6" r="4.2"/><circle cx="769.7" cy="221.2" r="4.2"/><circle cx="774.8" cy="223.8" r="4.2"/><circle cx="782.6" cy="219.9" r="4.2"/><circle cx="759.4" cy="225.1" r="4.2"/><circle cx="754.2" cy="230.3" r="4.2"/><circle cx="749.0" cy="234.1" r="4.2"/><circle cx="756.8" cy="239.3" r="4.2"/><circle cx="764.5" cy="241.9" r="4.2"/><circle cx="772.3" cy="238.0" r="4.2"/><circle cx="777.4" cy="232.8" r="4.2"/><circle cx="782.6" cy="240.6" r="4.2"/><circle cx="786.5" cy="244.5" r="4.2"/><circle cx="768.4" cy="230.3" r="4.2"/><circle cx="774.8" cy="243.2" r="4.2"/><circle cx="765.8" cy="235.4" r="4.2"/><circle cx="787.7" cy="256.1" r="4.2"/><circle cx="800.6" cy="256.1" r="4.2"/><circle cx="814.8" cy="256.1" r="4.2"/><circle cx="823.9" cy="257.4" r="4.2"/><circle cx="732.3" cy="250.6" r="4.2"/><circle cx="676.3" cy="275.6" r="4.2"/><circle cx="636.8" cy="286.7" r="4.2"/><circle cx="641.2" cy="281.5" r="4.2"/><circle cx="771.0" cy="267.4" r="4.2"/><circle cx="760.6" cy="273.8" r="4.2"/><circle cx="764.5" cy="278.5" r="4.2"/><circle cx="771.0" cy="291.9" r="4.2"/><circle cx="787.2" cy="257.0" r="4.2"/><circle cx="795.5" cy="258.3" r="4.2"/><circle cx="801.9" cy="257.0" r="4.2"/><circle cx="814.8" cy="255.7" r="4.2"/><circle cx="823.9" cy="259.6" r="4.2"/><circle cx="792.9" cy="264.8" r="4.2"/><circle cx="798.1" cy="273.8" r="4.2"/><circle cx="783.9" cy="277.7" r="4.2"/><circle cx="787.7" cy="282.8" r="4.2"/><circle cx="794.2" cy="280.3" r="4.2"/><circle cx="803.2" cy="277.7" r="4.2"/><circle cx="811.0" cy="273.8" r="4.2"/><circle cx="818.7" cy="271.2" r="4.2"/><circle cx="826.5" cy="269.9" r="4.2"/><circle cx="832.9" cy="268.6" r="4.2"/><circle cx="829.0" cy="264.8" r="4.2"/><circle cx="821.3" cy="266.1" r="4.2"/><circle cx="743.1" cy="309.2" r="4.2"/><circle cx="746.5" cy="317.7" r="4.2"/><circle cx="738.7" cy="328.0" r="4.2"/><circle cx="743.9" cy="331.9" r="4.2"/><circle cx="734.8" cy="346.8" r="4.2"/><circle cx="723.2" cy="354.6" r="4.2"/><circle cx="725.8" cy="360.3" r="4.2"/><circle cx="721.2" cy="362.8" r="4.2"/><circle cx="716.8" cy="373.7" r="4.2"/><circle cx="822.3" cy="270.5" r="4.2"/><circle cx="825.8" cy="270.5" r="4.2"/><circle cx="829.3" cy="270.5" r="4.2"/><circle cx="813.6" cy="273.5" r="4.2"/><circle cx="817.1" cy="273.5" r="4.2"/><circle cx="820.6" cy="273.5" r="4.2"/><circle cx="765.5" cy="221.8" r="4.2"/><circle cx="769.0" cy="221.8" r="4.2"/><circle cx="772.5" cy="221.8" r="4.2"/><circle cx="776.0" cy="221.8" r="4.2"/><circle cx="760.2" cy="224.8" r="4.2"/><circle cx="763.7" cy="224.8" r="4.2"/><circle cx="767.2" cy="224.8" r="4.2"/><circle cx="770.7" cy="224.8" r="4.2"/><circle cx="774.2" cy="224.8" r="4.2"/><circle cx="777.7" cy="224.8" r="4.2"/><circle cx="781.2" cy="224.8" r="4.2"/><circle cx="755.0" cy="227.8" r="4.2"/><circle cx="758.5" cy="227.8" r="4.2"/><circle cx="762.0" cy="227.8" r="4.2"/><circle cx="765.5" cy="227.8" r="4.2"/><circle cx="769.0" cy="227.8" r="4.2"/><circle cx="772.5" cy="227.8" r="4.2"/><circle cx="776.0" cy="227.8" r="4.2"/><circle cx="779.5" cy="227.8" r="4.2"/><circle cx="783.0" cy="227.8" r="4.2"/><circle cx="753.2" cy="230.9" r="4.2"/><circle cx="756.7" cy="230.9" r="4.2"/><circle cx="760.2" cy="230.9" r="4.2"/><circle cx="763.7" cy="230.9" r="4.2"/><circle cx="767.2" cy="230.9" r="4.2"/><circle cx="770.7" cy="230.9" r="4.2"/><circle cx="774.2" cy="230.9" r="4.2"/><circle cx="777.7" cy="230.9" r="4.2"/><circle cx="781.2" cy="230.9" r="4.2"/><circle cx="755.0" cy="233.9" r="4.2"/><circle cx="758.5" cy="233.9" r="4.2"/><circle cx="762.0" cy="233.9" r="4.2"/><circle cx="765.5" cy="233.9" r="4.2"/><circle cx="769.0" cy="233.9" r="4.2"/><circle cx="772.5" cy="233.9" r="4.2"/><circle cx="776.0" cy="233.9" r="4.2"/><circle cx="779.5" cy="233.9" r="4.2"/><circle cx="783.0" cy="233.9" r="4.2"/><circle cx="760.2" cy="236.9" r="4.2"/><circle cx="763.7" cy="236.9" r="4.2"/><circle cx="767.2" cy="236.9" r="4.2"/><circle cx="770.7" cy="236.9" r="4.2"/><circle cx="774.2" cy="236.9" r="4.2"/><circle cx="777.7" cy="236.9" r="4.2"/><circle cx="781.2" cy="236.9" r="4.2"/><circle cx="814.8" cy="255.7" r="4.2"/><circle cx="823.5" cy="259.4" r="4.2"/><circle cx="787.3" cy="256.5" r="4.2"/><circle cx="794.5" cy="260.1" r="4.2"/><circle cx="800.3" cy="256.5" r="4.2"/><circle cx="793.1" cy="265.9" r="4.2"/><circle cx="784.4" cy="277.5" r="4.2"/><circle cx="788.7" cy="283.3" r="4.2"/><circle cx="797.4" cy="276.1" r="4.2"/><circle cx="803.2" cy="279.0" r="4.2"/><circle cx="794.5" cy="202.0" r="4.2"/><circle cx="789.4" cy="207.8" r="4.2"/><circle cx="796.0" cy="219.5" r="4.2"/><circle cx="794.5" cy="231.1" r="4.2"/><circle cx="793.1" cy="235.4" r="4.2"/><circle cx="785.8" cy="242.7" r="4.2"/><circle cx="782.9" cy="220.9" r="4.2"/><circle cx="780.7" cy="189.0" r="4.2"/><circle cx="780.0" cy="200.6" r="4.2"/></g>
<g fill="#111"><circle cx="853.5" cy="173.5" r="5.15"/><circle cx="858.7" cy="170.9" r="5.15"/><circle cx="912.1" cy="175.3" r="5.15"/><circle cx="925.8" cy="176.1" r="5.15"/><circle cx="878.1" cy="182.5" r="5.15"/><circle cx="832.9" cy="190.3" r="5.15"/><circle cx="835.5" cy="195.4" r="5.15"/><circle cx="895.6" cy="190.3" r="5.15"/><circle cx="927.1" cy="195.4" r="5.15"/><circle cx="823.1" cy="207.8" r="5.15"/><circle cx="861.3" cy="204.5" r="5.15"/><circle cx="865.2" cy="207.0" r="5.15"/><circle cx="889.7" cy="204.5" r="5.15"/><circle cx="875.5" cy="211.7" r="5.15"/><circle cx="880.6" cy="211.7" r="5.15"/><circle cx="893.5" cy="211.7" r="5.15"/><circle cx="905.7" cy="216.1" r="5.15"/><circle cx="915.5" cy="204.5" r="5.15"/><circle cx="921.9" cy="201.9" r="5.15"/><circle cx="927.1" cy="204.5" r="5.15"/><circle cx="924.5" cy="210.9" r="5.15"/><circle cx="919.4" cy="216.1" r="5.15"/><circle cx="914.2" cy="219.9" r="5.15"/><circle cx="909.0" cy="226.4" r="5.15"/><circle cx="841.4" cy="219.4" r="5.15"/><circle cx="854.8" cy="222.0" r="5.15"/><circle cx="834.2" cy="227.2" r="5.15"/><circle cx="829.0" cy="234.9" r="5.15"/><circle cx="818.2" cy="239.3" r="5.15"/><circle cx="893.5" cy="227.7" r="5.15"/><circle cx="888.4" cy="234.1" r="5.15"/><circle cx="862.6" cy="212.2" r="5.15"/><circle cx="867.7" cy="219.9" r="5.15"/><circle cx="865.2" cy="225.1" r="5.15"/><circle cx="860.0" cy="230.3" r="5.15"/><circle cx="854.8" cy="235.4" r="5.15"/><circle cx="849.7" cy="240.6" r="5.15"/><circle cx="844.5" cy="245.7" r="5.15"/><circle cx="841.9" cy="252.2" r="5.15"/><circle cx="852.3" cy="245.7" r="5.15"/><circle cx="860.0" cy="240.6" r="5.15"/><circle cx="867.7" cy="235.4" r="5.15"/><circle cx="875.5" cy="230.3" r="5.15"/><circle cx="880.6" cy="227.7" r="5.15"/><circle cx="883.2" cy="232.8" r="5.15"/><circle cx="875.5" cy="240.6" r="5.15"/><circle cx="867.7" cy="245.7" r="5.15"/><circle cx="860.0" cy="250.9" r="5.15"/><circle cx="852.3" cy="256.1" r="5.15"/><circle cx="872.9" cy="248.3" r="5.15"/><circle cx="862.6" cy="256.1" r="5.15"/><circle cx="847.1" cy="256.1" r="5.15"/><circle cx="878.1" cy="235.4" r="5.15"/><circle cx="870.3" cy="227.7" r="5.15"/><circle cx="925.7" cy="176.1" r="5.15"/><circle cx="926.5" cy="195.4" r="5.15"/><circle cx="925.2" cy="201.9" r="5.15"/><circle cx="926.5" cy="207.0" r="5.15"/><circle cx="922.6" cy="212.2" r="5.15"/><circle cx="920.0" cy="217.4" r="5.15"/><circle cx="841.9" cy="253.2" r="5.15"/><circle cx="849.7" cy="253.2" r="5.15"/><circle cx="857.4" cy="251.9" r="5.15"/><circle cx="865.2" cy="250.6" r="5.15"/><circle cx="844.5" cy="260.9" r="5.15"/><circle cx="852.3" cy="260.9" r="5.15"/><circle cx="860.0" cy="258.3" r="5.15"/><circle cx="841.9" cy="267.4" r="5.15"/><circle cx="849.7" cy="266.1" r="5.15"/><circle cx="839.4" cy="248.0" r="5.15"/><circle cx="872.9" cy="248.0" r="5.15"/><circle cx="863.9" cy="207.4" r="5.15"/><circle cx="862.1" cy="210.4" r="5.15"/><circle cx="865.6" cy="210.4" r="5.15"/><circle cx="863.9" cy="213.4" r="5.15"/><circle cx="863.9" cy="225.6" r="5.15"/><circle cx="865.6" cy="228.6" r="5.15"/><circle cx="869.1" cy="228.6" r="5.15"/><circle cx="860.4" cy="231.6" r="5.15"/><circle cx="863.9" cy="231.6" r="5.15"/><circle cx="867.4" cy="231.6" r="5.15"/><circle cx="870.9" cy="231.6" r="5.15"/><circle cx="874.4" cy="231.6" r="5.15"/><circle cx="877.9" cy="231.6" r="5.15"/><circle cx="881.4" cy="231.6" r="5.15"/><circle cx="858.6" cy="234.6" r="5.15"/><circle cx="862.1" cy="234.6" r="5.15"/><circle cx="865.6" cy="234.6" r="5.15"/><circle cx="869.1" cy="234.6" r="5.15"/><circle cx="872.6" cy="234.6" r="5.15"/><circle cx="876.1" cy="234.6" r="5.15"/><circle cx="879.6" cy="234.6" r="5.15"/><circle cx="883.1" cy="234.6" r="5.15"/><circle cx="853.4" cy="237.7" r="5.15"/><circle cx="856.9" cy="237.7" r="5.15"/><circle cx="860.4" cy="237.7" r="5.15"/><circle cx="863.9" cy="237.7" r="5.15"/><circle cx="867.4" cy="237.7" r="5.15"/><circle cx="870.9" cy="237.7" r="5.15"/><circle cx="874.4" cy="237.7" r="5.15"/><circle cx="877.9" cy="237.7" r="5.15"/><circle cx="848.1" cy="240.7" r="5.15"/><circle cx="851.6" cy="240.7" r="5.15"/><circle cx="855.1" cy="240.7" r="5.15"/><circle cx="858.6" cy="240.7" r="5.15"/><circle cx="862.1" cy="240.7" r="5.15"/><circle cx="865.6" cy="240.7" r="5.15"/><circle cx="869.1" cy="240.7" r="5.15"/><circle cx="872.6" cy="240.7" r="5.15"/><circle cx="876.1" cy="240.7" r="5.15"/><circle cx="846.4" cy="243.7" r="5.15"/><circle cx="849.9" cy="243.7" r="5.15"/><circle cx="853.4" cy="243.7" r="5.15"/><circle cx="856.9" cy="243.7" r="5.15"/><circle cx="860.4" cy="243.7" r="5.15"/><circle cx="863.9" cy="243.7" r="5.15"/><circle cx="867.4" cy="243.7" r="5.15"/><circle cx="870.9" cy="243.7" r="5.15"/><circle cx="844.6" cy="246.8" r="5.15"/><circle cx="848.1" cy="246.8" r="5.15"/><circle cx="851.6" cy="246.8" r="5.15"/><circle cx="855.1" cy="246.8" r="5.15"/><circle cx="858.6" cy="246.8" r="5.15"/><circle cx="862.1" cy="246.8" r="5.15"/><circle cx="865.6" cy="246.8" r="5.15"/><circle cx="842.9" cy="249.8" r="5.15"/><circle cx="846.4" cy="249.8" r="5.15"/><circle cx="849.9" cy="249.8" r="5.15"/><circle cx="853.4" cy="249.8" r="5.15"/><circle cx="856.9" cy="249.8" r="5.15"/><circle cx="860.4" cy="249.8" r="5.15"/><circle cx="863.9" cy="249.8" r="5.15"/><circle cx="841.1" cy="252.8" r="5.15"/><circle cx="844.6" cy="252.8" r="5.15"/><circle cx="848.1" cy="252.8" r="5.15"/><circle cx="851.6" cy="252.8" r="5.15"/><circle cx="855.1" cy="252.8" r="5.15"/><circle cx="858.6" cy="252.8" r="5.15"/><circle cx="842.9" cy="255.9" r="5.15"/><circle cx="846.4" cy="255.9" r="5.15"/><circle cx="849.9" cy="255.9" r="5.15"/><circle cx="853.4" cy="255.9" r="5.15"/><circle cx="856.9" cy="255.9" r="5.15"/><circle cx="841.1" cy="258.9" r="5.15"/><circle cx="844.6" cy="258.9" r="5.15"/><circle cx="848.1" cy="258.9" r="5.15"/><circle cx="851.6" cy="258.9" r="5.15"/><circle cx="855.1" cy="258.9" r="5.15"/><circle cx="842.9" cy="261.9" r="5.15"/><circle cx="846.4" cy="261.9" r="5.15"/><circle cx="849.9" cy="261.9" r="5.15"/><circle cx="853.4" cy="261.9" r="5.15"/><circle cx="841.1" cy="265.0" r="5.15"/><circle cx="844.6" cy="265.0" r="5.15"/><circle cx="848.1" cy="265.0" r="5.15"/><circle cx="855.5" cy="174.5" r="5.15"/><circle cx="878.0" cy="182.9" r="5.15"/><circle cx="912.1" cy="175.2" r="5.15"/><circle cx="925.9" cy="175.9" r="5.15"/><circle cx="833.7" cy="190.4" r="5.15"/><circle cx="836.6" cy="196.2" r="5.15"/><circle cx="823.1" cy="207.8" r="5.15"/><circle cx="841.7" cy="218.7" r="5.15"/><circle cx="833.0" cy="224.5" r="5.15"/><circle cx="852.6" cy="222.4" r="5.15"/><circle cx="830.1" cy="234.7" r="5.15"/><circle cx="818.0" cy="239.0" r="5.15"/><circle cx="835.9" cy="241.2" r="5.15"/><circle cx="896.1" cy="189.7" r="5.15"/><circle cx="889.6" cy="203.5" r="5.15"/><circle cx="893.2" cy="211.5" r="5.15"/><circle cx="906.3" cy="215.8" r="5.15"/><circle cx="908.5" cy="226.0" r="5.15"/><circle cx="916.4" cy="203.5" r="5.15"/><circle cx="921.5" cy="202.0" r="5.15"/><circle cx="927.3" cy="194.8" r="5.15"/><circle cx="928.1" cy="206.4" r="5.15"/><circle cx="923.0" cy="210.7" r="5.15"/><circle cx="919.4" cy="215.1" r="5.15"/><circle cx="915.0" cy="219.5" r="5.15"/><circle cx="894.7" cy="227.4" r="5.15"/><circle cx="891.0" cy="234.0" r="5.15"/><circle cx="874.4" cy="211.9" r="5.15"/><circle cx="880.2" cy="211.9" r="5.15"/></g>
<g fill="#4daf4a"><circle cx="853.5" cy="173.5" r="4.2"/><circle cx="858.7" cy="170.9" r="4.2"/><circle cx="912.1" cy="175.3" r="4.2"/><circle cx="925.8" cy="176.1" r="4.2"/><circle cx="878.1" cy="182.5" r="4.2"/><circle cx="832.9" cy="190.3" r="4.2"/><circle cx="835.5" cy="195.4" r="4.2"/><circle cx="895.6" cy="190.3" r="4.2"/><circle cx="927.1" cy="195.4" r="4.2"/><circle cx="823.1" cy="207.8" r="4.2"/><circle cx="861.3" cy="204.5" r="4.2"/><circle cx="865.2" cy="207.0" r="4.2"/><circle cx="889.7" cy="204.5" r="4.2"/><circle cx="875.5" cy="211.7" r="4.2"/><circle cx="880.6" cy="211.7" r="4.2"/><circle cx="893.5" cy="211.7" r="4.2"/><circle cx="905.7" cy="216.1" r="4.2"/><circle cx="915.5" cy="204.5" r="4.2"/><circle cx="921.9" cy="201.9" r="4.2"/><circle cx="927.1" cy="204.5" r="4.2"/><circle cx="924.5" cy="210.9" r="4.2"/><circle cx="919.4" cy="216.1" r="4.2"/><circle cx="914.2" cy="219.9" r="4.2"/><circle cx="909.0" cy="226.4" r="4.2"/><circle cx="841.4" cy="219.4" r="4.2"/><circle cx="854.8" cy="222.0" r="4.2"/><circle cx="834.2" cy="227.2" r="4.2"/><circle cx="829.0" cy="234.9" r="4.2"/><circle cx="818.2" cy="239.3" r="4.2"/><circle cx="893.5" cy="227.7" r="4.2"/><circle cx="888.4" cy="234.1" r="4.2"/><circle cx="862.6" cy="212.2" r="4.2"/><circle cx="867.7" cy="219.9" r="4.2"/><circle cx="865.2" cy="225.1" r="4.2"/><circle cx="860.0" cy="230.3" r="4.2"/><circle cx="854.8" cy="235.4" r="4.2"/><circle cx="849.7" cy="240.6" r="4.2"/><circle cx="844.5" cy="245.7" r="4.2"/><circle cx="841.9" cy="252.2" r="4.2"/><circle cx="852.3" cy="245.7" r="4.2"/><circle cx="860.0" cy="240.6" r="4.2"/><circle cx="867.7" cy="235.4" r="4.2"/><circle cx="875.5" cy="230.3" r="4.2"/><circle cx="880.6" cy="227.7" r="4.2"/><circle cx="883.2" cy="232.8" r="4.2"/><circle cx="875.5" cy="240.6" r="4.2"/><circle cx="867.7" cy="245.7" r="4.2"/><circle cx="860.0" cy="250.9" r="4.2"/><circle cx="852.3" cy="256.1" r="4.2"/><circle cx="872.9" cy="248.3" r="4.2"/><circle cx="862.6" cy="256.1" r="4.2"/><circle cx="847.1" cy="256.1" r="4.2"/><circle cx="878.1" cy="235.4" r="4.2"/><circle cx="870.3" cy="227.7" r="4.2"/><circle cx="925.7" cy="176.1" r="4.2"/><circle cx="926.5" cy="195.4" r="4.2"/><circle cx="925.2" cy="201.9" r="4.2"/><circle cx="926.5" cy="207.0" r="4.2"/><circle cx="922.6" cy="212.2" r="4.2"/><circle cx="920.0" cy="217.4" r="4.2"/><circle cx="841.9" cy="253.2" r="4.2"/><circle cx="849.7" cy="253.2" r="4.2"/><circle cx="857.4" cy="251.9" r="4.2"/><circle cx="865.2" cy="250.6" r="4.2"/><circle cx="844.5" cy="260.9" r="4.2"/><circle cx="852.3" cy="260.9" r="4.2"/><circle cx="860.0" cy="258.3" r="4.2"/><circle cx="841.9" cy="267.4" r="4.2"/><circle cx="849.7" cy="266.1" r="4.2"/><circle cx="839.4" cy="248.0" r="4.2"/><circle cx="872.9" cy="248.0" r="4.2"/><circle cx="863.9" cy="207.4" r="4.2"/><circle cx="862.1" cy="210.4" r="4.2"/><circle cx="865.6" cy="210.4" r="4.2"/><circle cx="863.9" cy="213.4" r="4.2"/><circle cx="863.9" cy="225.6" r="4.2"/><circle cx="865.6" cy="228.6" r="4.2"/><circle cx="869.1" cy="228.6" r="4.2"/><circle cx="860.4" cy="231.6" r="4.2"/><circle cx="863.9" cy="231.6" r="4.2"/><circle cx="867.4" cy="231.6" r="4.2"/><circle cx="870.9" cy="231.6" r="4.2"/><circle cx="874.4" cy="231.6" r="4.2"/><circle cx="877.9" cy="231.6" r="4.2"/><circle cx="881.4" cy="231.6" r="4.2"/><circle cx="858.6" cy="234.6" r="4.2"/><circle cx="862.1" cy="234.6" r="4.2"/><circle cx="865.6" cy="234.6" r="4.2"/><circle cx="869.1" cy="234.6" r="4.2"/><circle cx="872.6" cy="234.6" r="4.2"/><circle cx="876.1" cy="234.6" r="4.2"/><circle cx="879.6" cy="234.6" r="4.2"/><circle cx="883.1" cy="234.6" r="4.2"/><circle cx="853.4" cy="237.7" r="4.2"/><circle cx="856.9" cy="237.7" r="4.2"/><circle cx="860.4" cy="237.7" r="4.2"/><circle cx="863.9" cy="237.7" r="4.2"/><circle cx="867.4" cy="237.7" r="4.2"/><circle cx="870.9" cy="237.7" r="4.2"/><circle cx="874.4" cy="237.7" r="4.2"/><circle cx="877.9" cy="237.7" r="4.2"/><circle cx="848.1" cy="240.7" r="4.2"/><circle cx="851.6" cy="240.7" r="4.2"/><circle cx="855.1" cy="240.7" r="4.2"/><circle cx="858.6" cy="240.7" r="4.2"/><circle cx="862.1" cy="240.7" r="4.2"/><circle cx="865.6" cy="240.7" r="4.2"/><circle cx="869.1" cy="240.7" r="4.2"/><circle cx="872.6" cy="240.7" r="4.2"/><circle cx="876.1" cy="240.7" r="4.2"/><circle cx="846.4" cy="243.7" r="4.2"/><circle cx="849.9" cy="243.7" r="4.2"/><circle cx="853.4" cy="243.7" r="4.2"/><circle cx="856.9" cy="243.7" r="4.2"/><circle cx="860.4" cy="243.7" r="4.2"/><circle cx="863.9" cy="243.7" r="4.2"/><circle cx="867.4" cy="243.7" r="4.2"/><circle cx="870.9" cy="243.7" r="4.2"/><circle cx="844.6" cy="246.8" r="4.2"/><circle cx="848.1" cy="246.8" r="4.2"/><circle cx="851.6" cy="246.8" r="4.2"/><circle cx="855.1" cy="246.8" r="4.2"/><circle cx="858.6" cy="246.8" r="4.2"/><circle cx="862.1" cy="246.8" r="4.2"/><circle cx="865.6" cy="246.8" r="4.2"/><circle cx="842.9" cy="249.8" r="4.2"/><circle cx="846.4" cy="249.8" r="4.2"/><circle cx="849.9" cy="249.8" r="4.2"/><circle cx="853.4" cy="249.8" r="4.2"/><circle cx="856.9" cy="249.8" r="4.2"/><circle cx="860.4" cy="249.8" r="4.2"/><circle cx="863.9" cy="249.8" r="4.2"/><circle cx="841.1" cy="252.8" r="4.2"/><circle cx="844.6" cy="252.8" r="4.2"/><circle cx="848.1" cy="252.8" r="4.2"/><circle cx="851.6" cy="252.8" r="4.2"/><circle cx="855.1" cy="252.8" r="4.2"/><circle cx="858.6" cy="252.8" r="4.2"/><circle cx="842.9" cy="255.9" r="4.2"/><circle cx="846.4" cy="255.9" r="4.2"/><circle cx="849.9" cy="255.9" r="4.2"/><circle cx="853.4" cy="255.9" r="4.2"/><circle cx="856.9" cy="255.9" r="4.2"/><circle cx="841.1" cy="258.9" r="4.2"/><circle cx="844.6" cy="258.9" r="4.2"/><circle cx="848.1" cy="258.9" r="4.2"/><circle cx="851.6" cy="258.9" r="4.2"/><circle cx="855.1" cy="258.9" r="4.2"/><circle cx="842.9" cy="261.9" r="4.2"/><circle cx="846.4" cy="261.9" r="4.2"/><circle cx="849.9" cy="261.9" r="4.2"/><circle cx="853.4" cy="261.9" r="4.2"/><circle cx="841.1" cy="265.0" r="4.2"/><circle cx="844.6" cy="265.0" r="4.2"/><circle cx="848.1" cy="265.0" r="4.2"/><circle cx="855.5" cy="174.5" r="4.2"/><circle cx="878.0" cy="182.9" r="4.2"/><circle cx="912.1" cy="175.2" r="4.2"/><circle cx="925.9" cy="175.9" r="4.2"/><circle cx="833.7" cy="190.4" r="4.2"/><circle cx="836.6" cy="196.2" r="4.2"/><circle cx="823.1" cy="207.8" r="4.2"/><circle cx="841.7" cy="218.7" r="4.2"/><circle cx="833.0" cy="224.5" r="4.2"/><circle cx="852.6" cy="222.4" r="4.2"/><circle cx="830.1" cy="234.7" r="4.2"/><circle cx="818.0" cy="239.0" r="4.2"/><circle cx="835.9" cy="241.2" r="4.2"/><circle cx="896.1" cy="189.7" r="4.2"/><circle cx="889.6" cy="203.5" r="4.2"/><circle cx="893.2" cy="211.5" r="4.2"/><circle cx="906.3" cy="215.8" r="4.2"/><circle cx="908.5" cy="226.0" r="4.2"/><circle cx="916.4" cy="203.5" r="4.2"/><circle cx="921.5" cy="202.0" r="4.2"/><circle cx="927.3" cy="194.8" r="4.2"/><circle cx="928.1" cy="206.4" r="4.2"/><circle cx="923.0" cy="210.7" r="4.2"/><circle cx="919.4" cy="215.1" r="4.2"/><circle cx="915.0" cy="219.5" r="4.2"/><circle cx="894.7" cy="227.4" r="4.2"/><circle cx="891.0" cy="234.0" r="4.2"/><circle cx="874.4" cy="211.9" r="4.2"/><circle cx="880.2" cy="211.9" r="4.2"/></g>
<g fill="#111"><circle cx="461.7" cy="142.5" r="5.15"/><circle cx="477.7" cy="148.5" r="5.15"/><circle cx="414.5" cy="161.9" r="5.15"/><circle cx="421.7" cy="173.0" r="5.15"/><circle cx="479.0" cy="163.2" r="5.15"/><circle cx="454.5" cy="165.2" r="5.15"/><circle cx="450.6" cy="169.6" r="5.15"/><circle cx="448.1" cy="174.8" r="5.15"/><circle cx="448.1" cy="198.0" r="5.15"/><circle cx="484.2" cy="200.6" r="5.15"/><circle cx="513.9" cy="210.1" r="5.15"/><circle cx="500.2" cy="214.8" r="5.15"/><circle cx="535.8" cy="220.5" r="5.15"/><circle cx="444.2" cy="221.2" r="5.15"/><circle cx="441.1" cy="231.0" r="5.15"/><circle cx="453.2" cy="230.3" r="5.15"/><circle cx="451.4" cy="239.3" r="5.15"/><circle cx="512.6" cy="227.7" r="5.15"/><circle cx="495.8" cy="238.0" r="5.15"/><circle cx="510.0" cy="247.8" r="5.15"/><circle cx="532.5" cy="247.0" r="5.15"/><circle cx="493.2" cy="256.1" r="5.15"/><circle cx="423.5" cy="238.0" r="5.15"/><circle cx="426.1" cy="243.2" r="5.15"/><circle cx="433.9" cy="247.0" r="5.15"/><circle cx="390.0" cy="240.6" r="5.15"/><circle cx="387.4" cy="247.0" r="5.15"/><circle cx="399.0" cy="244.5" r="5.15"/><circle cx="384.8" cy="252.2" r="5.15"/><circle cx="387.4" cy="251.9" r="5.15"/><circle cx="395.2" cy="258.3" r="5.15"/><circle cx="401.6" cy="259.6" r="5.15"/><circle cx="384.1" cy="265.5" r="5.15"/><circle cx="398.3" cy="277.2" r="5.15"/><circle cx="382.3" cy="286.7" r="5.15"/><circle cx="436.5" cy="267.4" r="5.15"/><circle cx="441.6" cy="273.8" r="5.15"/><circle cx="445.5" cy="279.0" r="5.15"/><circle cx="494.0" cy="256.3" r="5.15"/><circle cx="510.0" cy="249.3" r="5.15"/><circle cx="531.9" cy="248.0" r="5.15"/><circle cx="402.9" cy="311.2" r="5.15"/><circle cx="422.3" cy="284.1" r="5.15"/><circle cx="427.4" cy="286.7" r="5.15"/><circle cx="428.7" cy="291.9" r="5.15"/><circle cx="423.5" cy="295.7" r="5.15"/><circle cx="419.7" cy="299.6" r="5.15"/><circle cx="427.4" cy="300.9" r="5.15"/><circle cx="431.3" cy="302.2" r="5.15"/><circle cx="439.8" cy="300.9" r="5.15"/><circle cx="427.4" cy="316.4" r="5.15"/><circle cx="433.9" cy="315.1" r="5.15"/><circle cx="440.3" cy="313.8" r="5.15"/><circle cx="424.8" cy="322.8" r="5.15"/><circle cx="431.3" cy="324.1" r="5.15"/><circle cx="439.0" cy="322.8" r="5.15"/><circle cx="421.0" cy="330.6" r="5.15"/><circle cx="427.4" cy="331.9" r="5.15"/><circle cx="435.2" cy="330.6" r="5.15"/><circle cx="441.6" cy="330.6" r="5.15"/><circle cx="421.0" cy="337.0" r="5.15"/><circle cx="428.7" cy="339.6" r="5.15"/><circle cx="436.5" cy="338.3" r="5.15"/><circle cx="442.9" cy="338.3" r="5.15"/><circle cx="431.3" cy="344.8" r="5.15"/><circle cx="439.0" cy="344.8" r="5.15"/><circle cx="423.2" cy="286.6" r="5.15"/><circle cx="426.7" cy="286.6" r="5.15"/><circle cx="424.9" cy="289.7" r="5.15"/><circle cx="428.4" cy="289.7" r="5.15"/><circle cx="426.7" cy="292.7" r="5.15"/><circle cx="424.9" cy="295.7" r="5.15"/><circle cx="428.4" cy="295.7" r="5.15"/><circle cx="423.2" cy="298.8" r="5.15"/><circle cx="426.7" cy="298.8" r="5.15"/><circle cx="427.4" cy="317.0" r="5.15"/><circle cx="430.9" cy="317.0" r="5.15"/><circle cx="434.4" cy="317.0" r="5.15"/><circle cx="437.9" cy="317.0" r="5.15"/><circle cx="429.1" cy="320.0" r="5.15"/><circle cx="432.6" cy="320.0" r="5.15"/><circle cx="436.1" cy="320.0" r="5.15"/><circle cx="439.6" cy="320.0" r="5.15"/><circle cx="427.4" cy="323.0" r="5.15"/><circle cx="430.9" cy="323.0" r="5.15"/><circle cx="434.4" cy="323.0" r="5.15"/><circle cx="437.9" cy="323.0" r="5.15"/><circle cx="425.6" cy="326.1" r="5.15"/><circle cx="429.1" cy="326.1" r="5.15"/><circle cx="432.6" cy="326.1" r="5.15"/><circle cx="436.1" cy="326.1" r="5.15"/><circle cx="439.6" cy="326.1" r="5.15"/><circle cx="423.9" cy="329.1" r="5.15"/><circle cx="427.4" cy="329.1" r="5.15"/><circle cx="430.9" cy="329.1" r="5.15"/><circle cx="434.4" cy="329.1" r="5.15"/><circle cx="437.9" cy="329.1" r="5.15"/><circle cx="422.1" cy="332.1" r="5.15"/><circle cx="425.6" cy="332.1" r="5.15"/><circle cx="429.1" cy="332.1" r="5.15"/><circle cx="432.6" cy="332.1" r="5.15"/><circle cx="436.1" cy="332.1" r="5.15"/><circle cx="439.6" cy="332.1" r="5.15"/><circle cx="423.9" cy="335.2" r="5.15"/><circle cx="427.4" cy="335.2" r="5.15"/><circle cx="430.9" cy="335.2" r="5.15"/><circle cx="434.4" cy="335.2" r="5.15"/><circle cx="437.9" cy="335.2" r="5.15"/><circle cx="441.4" cy="335.2" r="5.15"/><circle cx="422.1" cy="338.2" r="5.15"/><circle cx="425.6" cy="338.2" r="5.15"/><circle cx="429.1" cy="338.2" r="5.15"/><circle cx="432.6" cy="338.2" r="5.15"/><circle cx="436.1" cy="338.2" r="5.15"/><circle cx="439.6" cy="338.2" r="5.15"/><circle cx="437.9" cy="341.2" r="5.15"/><circle cx="441.4" cy="341.2" r="5.15"/><circle cx="426.0" cy="238.6" r="5.15"/><circle cx="427.8" cy="241.6" r="5.15"/><circle cx="389.7" cy="248.3" r="5.15"/><circle cx="394.5" cy="258.3" r="5.15"/><circle cx="398.4" cy="260.3" r="5.15"/><circle cx="402.3" cy="261.5" r="5.15"/><circle cx="436.1" cy="267.7" r="5.15"/><circle cx="441.0" cy="275.7" r="5.15"/><circle cx="445.5" cy="280.3" r="5.15"/><circle cx="453.2" cy="229.9" r="5.15"/><circle cx="451.9" cy="239.0" r="5.15"/></g>
<g fill="#5f9bd2"><circle cx="461.7" cy="142.5" r="4.2"/><circle cx="477.7" cy="148.5" r="4.2"/><circle cx="414.5" cy="161.9" r="4.2"/><circle cx="421.7" cy="173.0" r="4.2"/><circle cx="479.0" cy="163.2" r="4.2"/><circle cx="454.5" cy="165.2" r="4.2"/><circle cx="450.6" cy="169.6" r="4.2"/><circle cx="448.1" cy="174.8" r="4.2"/><circle cx="448.1" cy="198.0" r="4.2"/><circle cx="484.2" cy="200.6" r="4.2"/><circle cx="513.9" cy="210.1" r="4.2"/><circle cx="500.2" cy="214.8" r="4.2"/><circle cx="535.8" cy="220.5" r="4.2"/><circle cx="444.2" cy="221.2" r="4.2"/><circle cx="441.1" cy="231.0" r="4.2"/><circle cx="453.2" cy="230.3" r="4.2"/><circle cx="451.4" cy="239.3" r="4.2"/><circle cx="512.6" cy="227.7" r="4.2"/><circle cx="495.8" cy="238.0" r="4.2"/><circle cx="510.0" cy="247.8" r="4.2"/><circle cx="532.5" cy="247.0" r="4.2"/><circle cx="493.2" cy="256.1" r="4.2"/><circle cx="423.5" cy="238.0" r="4.2"/><circle cx="426.1" cy="243.2" r="4.2"/><circle cx="433.9" cy="247.0" r="4.2"/><circle cx="390.0" cy="240.6" r="4.2"/><circle cx="387.4" cy="247.0" r="4.2"/><circle cx="399.0" cy="244.5" r="4.2"/><circle cx="384.8" cy="252.2" r="4.2"/><circle cx="387.4" cy="251.9" r="4.2"/><circle cx="395.2" cy="258.3" r="4.2"/><circle cx="401.6" cy="259.6" r="4.2"/><circle cx="384.1" cy="265.5" r="4.2"/><circle cx="398.3" cy="277.2" r="4.2"/><circle cx="382.3" cy="286.7" r="4.2"/><circle cx="436.5" cy="267.4" r="4.2"/><circle cx="441.6" cy="273.8" r="4.2"/><circle cx="445.5" cy="279.0" r="4.2"/><circle cx="494.0" cy="256.3" r="4.2"/><circle cx="510.0" cy="249.3" r="4.2"/><circle cx="531.9" cy="248.0" r="4.2"/><circle cx="402.9" cy="311.2" r="4.2"/><circle cx="422.3" cy="284.1" r="4.2"/><circle cx="427.4" cy="286.7" r="4.2"/><circle cx="428.7" cy="291.9" r="4.2"/><circle cx="423.5" cy="295.7" r="4.2"/><circle cx="419.7" cy="299.6" r="4.2"/><circle cx="427.4" cy="300.9" r="4.2"/><circle cx="431.3" cy="302.2" r="4.2"/><circle cx="439.8" cy="300.9" r="4.2"/><circle cx="427.4" cy="316.4" r="4.2"/><circle cx="433.9" cy="315.1" r="4.2"/><circle cx="440.3" cy="313.8" r="4.2"/><circle cx="424.8" cy="322.8" r="4.2"/><circle cx="431.3" cy="324.1" r="4.2"/><circle cx="439.0" cy="322.8" r="4.2"/><circle cx="421.0" cy="330.6" r="4.2"/><circle cx="427.4" cy="331.9" r="4.2"/><circle cx="435.2" cy="330.6" r="4.2"/><circle cx="441.6" cy="330.6" r="4.2"/><circle cx="421.0" cy="337.0" r="4.2"/><circle cx="428.7" cy="339.6" r="4.2"/><circle cx="436.5" cy="338.3" r="4.2"/><circle cx="442.9" cy="338.3" r="4.2"/><circle cx="431.3" cy="344.8" r="4.2"/><circle cx="439.0" cy="344.8" r="4.2"/><circle cx="423.2" cy="286.6" r="4.2"/><circle cx="426.7" cy="286.6" r="4.2"/><circle cx="424.9" cy="289.7" r="4.2"/><circle cx="428.4" cy="289.7" r="4.2"/><circle cx="426.7" cy="292.7" r="4.2"/><circle cx="424.9" cy="295.7" r="4.2"/><circle cx="428.4" cy="295.7" r="4.2"/><circle cx="423.2" cy="298.8" r="4.2"/><circle cx="426.7" cy="298.8" r="4.2"/><circle cx="427.4" cy="317.0" r="4.2"/><circle cx="430.9" cy="317.0" r="4.2"/><circle cx="434.4" cy="317.0" r="4.2"/><circle cx="437.9" cy="317.0" r="4.2"/><circle cx="429.1" cy="320.0" r="4.2"/><circle cx="432.6" cy="320.0" r="4.2"/><circle cx="436.1" cy="320.0" r="4.2"/><circle cx="439.6" cy="320.0" r="4.2"/><circle cx="427.4" cy="323.0" r="4.2"/><circle cx="430.9" cy="323.0" r="4.2"/><circle cx="434.4" cy="323.0" r="4.2"/><circle cx="437.9" cy="323.0" r="4.2"/><circle cx="425.6" cy="326.1" r="4.2"/><circle cx="429.1" cy="326.1" r="4.2"/><circle cx="432.6" cy="326.1" r="4.2"/><circle cx="436.1" cy="326.1" r="4.2"/><circle cx="439.6" cy="326.1" r="4.2"/><circle cx="423.9" cy="329.1" r="4.2"/><circle cx="427.4" cy="329.1" r="4.2"/><circle cx="430.9" cy="329.1" r="4.2"/><circle cx="434.4" cy="329.1" r="4.2"/><circle cx="437.9" cy="329.1" r="4.2"/><circle cx="422.1" cy="332.1" r="4.2"/><circle cx="425.6" cy="332.1" r="4.2"/><circle cx="429.1" cy="332.1" r="4.2"/><circle cx="432.6" cy="332.1" r="4.2"/><circle cx="436.1" cy="332.1" r="4.2"/><circle cx="439.6" cy="332.1" r="4.2"/><circle cx="423.9" cy="335.2" r="4.2"/><circle cx="427.4" cy="335.2" r="4.2"/><circle cx="430.9" cy="335.2" r="4.2"/><circle cx="434.4" cy="335.2" r="4.2"/><circle cx="437.9" cy="335.2" r="4.2"/><circle cx="441.4" cy="335.2" r="4.2"/><circle cx="422.1" cy="338.2" r="4.2"/><circle cx="425.6" cy="338.2" r="4.2"/><circle cx="429.1" cy="338.2" r="4.2"/><circle cx="432.6" cy="338.2" r="4.2"/><circle cx="436.1" cy="338.2" r="4.2"/><circle cx="439.6" cy="338.2" r="4.2"/><circle cx="437.9" cy="341.2" r="4.2"/><circle cx="441.4" cy="341.2" r="4.2"/><circle cx="426.0" cy="238.6" r="4.2"/><circle cx="427.8" cy="241.6" r="4.2"/><circle cx="389.7" cy="248.3" r="4.2"/><circle cx="394.5" cy="258.3" r="4.2"/><circle cx="398.4" cy="260.3" r="4.2"/><circle cx="402.3" cy="261.5" r="4.2"/><circle cx="436.1" cy="267.7" r="4.2"/><circle cx="441.0" cy="275.7" r="4.2"/><circle cx="445.5" cy="280.3" r="4.2"/><circle cx="453.2" cy="229.9" r="4.2"/><circle cx="451.9" cy="239.0" r="4.2"/></g>
<g fill="#111"><circle cx="311.0" cy="244.5" r="5.15"/><circle cx="311.0" cy="249.6" r="5.15"/><circle cx="273.5" cy="254.8" r="5.15"/><circle cx="310.0" cy="245.7" r="5.15"/><circle cx="274.1" cy="255.7" r="5.15"/><circle cx="309.7" cy="251.9" r="5.15"/><circle cx="301.2" cy="273.0" r="5.15"/><circle cx="258.1" cy="286.7" r="5.15"/><circle cx="263.2" cy="289.8" r="5.15"/><circle cx="278.7" cy="288.5" r="5.15"/><circle cx="316.1" cy="293.2" r="5.15"/><circle cx="318.7" cy="294.5" r="5.15"/><circle cx="244.6" cy="305.5" r="5.15"/><circle cx="236.9" cy="328.0" r="5.15"/><circle cx="249.0" cy="328.8" r="5.15"/><circle cx="268.9" cy="331.9" r="5.15"/><circle cx="285.9" cy="322.8" r="5.15"/><circle cx="283.9" cy="330.6" r="5.15"/><circle cx="260.6" cy="341.4" r="5.15"/><circle cx="242.6" cy="342.2" r="5.15"/><circle cx="241.3" cy="347.4" r="5.15"/><circle cx="245.2" cy="351.2" r="5.15"/><circle cx="249.0" cy="353.8" r="5.15"/><circle cx="242.6" cy="356.4" r="5.15"/><circle cx="260.6" cy="353.0" r="5.15"/><circle cx="256.0" cy="360.3" r="5.15"/><circle cx="233.5" cy="361.5" r="5.15"/><circle cx="238.7" cy="365.4" r="5.15"/><circle cx="269.7" cy="364.6" r="5.15"/><circle cx="247.7" cy="376.5" r="5.15"/><circle cx="276.1" cy="384.8" r="5.15"/><circle cx="286.5" cy="379.6" r="5.15"/><circle cx="230.2" cy="402.1" r="5.15"/><circle cx="296.8" cy="346.1" r="5.15"/><circle cx="299.4" cy="351.2" r="5.15"/><circle cx="303.2" cy="356.4" r="5.15"/><circle cx="305.8" cy="361.5" r="5.15"/><circle cx="308.4" cy="365.4" r="5.15"/><circle cx="312.3" cy="349.9" r="5.15"/><circle cx="313.5" cy="338.3" r="5.15"/><circle cx="316.1" cy="333.2" r="5.15"/><circle cx="318.7" cy="337.0" r="5.15"/><circle cx="318.7" cy="371.9" r="5.15"/><circle cx="348.2" cy="263.5" r="5.15"/><circle cx="340.2" cy="286.7" r="5.15"/><circle cx="317.7" cy="291.9" r="5.15"/><circle cx="319.0" cy="295.7" r="5.15"/><circle cx="327.3" cy="307.9" r="5.15"/><circle cx="384.1" cy="322.8" r="5.15"/><circle cx="393.9" cy="332.6" r="5.15"/><circle cx="383.0" cy="344.8" r="5.15"/><circle cx="384.1" cy="353.3" r="5.15"/><circle cx="403.7" cy="349.4" r="5.15"/><circle cx="373.2" cy="355.9" r="5.15"/><circle cx="361.6" cy="359.0" r="5.15"/><circle cx="357.7" cy="362.8" r="5.15"/><circle cx="337.1" cy="368.5" r="5.15"/><circle cx="320.8" cy="371.4" r="5.15"/><circle cx="351.3" cy="349.4" r="5.15"/><circle cx="342.3" cy="351.2" r="5.15"/><circle cx="334.5" cy="352.5" r="5.15"/><circle cx="328.1" cy="348.6" r="5.15"/><circle cx="321.6" cy="344.8" r="5.15"/><circle cx="316.5" cy="338.3" r="5.15"/><circle cx="315.2" cy="331.9" r="5.15"/><circle cx="311.3" cy="349.9" r="5.15"/><circle cx="312.6" cy="340.9" r="5.15"/></g>
<g fill="#ff7f00"><circle cx="311.0" cy="244.5" r="4.2"/><circle cx="311.0" cy="249.6" r="4.2"/><circle cx="273.5" cy="254.8" r="4.2"/><circle cx="310.0" cy="245.7" r="4.2"/><circle cx="274.1" cy="255.7" r="4.2"/><circle cx="309.7" cy="251.9" r="4.2"/><circle cx="301.2" cy="273.0" r="4.2"/><circle cx="258.1" cy="286.7" r="4.2"/><circle cx="263.2" cy="289.8" r="4.2"/><circle cx="278.7" cy="288.5" r="4.2"/><circle cx="316.1" cy="293.2" r="4.2"/><circle cx="318.7" cy="294.5" r="4.2"/><circle cx="244.6" cy="305.5" r="4.2"/><circle cx="236.9" cy="328.0" r="4.2"/><circle cx="249.0" cy="328.8" r="4.2"/><circle cx="268.9" cy="331.9" r="4.2"/><circle cx="285.9" cy="322.8" r="4.2"/><circle cx="283.9" cy="330.6" r="4.2"/><circle cx="260.6" cy="341.4" r="4.2"/><circle cx="242.6" cy="342.2" r="4.2"/><circle cx="241.3" cy="347.4" r="4.2"/><circle cx="245.2" cy="351.2" r="4.2"/><circle cx="249.0" cy="353.8" r="4.2"/><circle cx="242.6" cy="356.4" r="4.2"/><circle cx="260.6" cy="353.0" r="4.2"/><circle cx="256.0" cy="360.3" r="4.2"/><circle cx="233.5" cy="361.5" r="4.2"/><circle cx="238.7" cy="365.4" r="4.2"/><circle cx="269.7" cy="364.6" r="4.2"/><circle cx="247.7" cy="376.5" r="4.2"/><circle cx="276.1" cy="384.8" r="4.2"/><circle cx="286.5" cy="379.6" r="4.2"/><circle cx="230.2" cy="402.1" r="4.2"/><circle cx="296.8" cy="346.1" r="4.2"/><circle cx="299.4" cy="351.2" r="4.2"/><circle cx="303.2" cy="356.4" r="4.2"/><circle cx="305.8" cy="361.5" r="4.2"/><circle cx="308.4" cy="365.4" r="4.2"/><circle cx="312.3" cy="349.9" r="4.2"/><circle cx="313.5" cy="338.3" r="4.2"/><circle cx="316.1" cy="333.2" r="4.2"/><circle cx="318.7" cy="337.0" r="4.2"/><circle cx="318.7" cy="371.9" r="4.2"/><circle cx="348.2" cy="263.5" r="4.2"/><circle cx="340.2" cy="286.7" r="4.2"/><circle cx="317.7" cy="291.9" r="4.2"/><circle cx="319.0" cy="295.7" r="4.2"/><circle cx="327.3" cy="307.9" r="4.2"/><circle cx="384.1" cy="322.8" r="4.2"/><circle cx="393.9" cy="332.6" r="4.2"/><circle cx="383.0" cy="344.8" r="4.2"/><circle cx="384.1" cy="353.3" r="4.2"/><circle cx="403.7" cy="349.4" r="4.2"/><circle cx="373.2" cy="355.9" r="4.2"/><circle cx="361.6" cy="359.0" r="4.2"/><circle cx="357.7" cy="362.8" r="4.2"/><circle cx="337.1" cy="368.5" r="4.2"/><circle cx="320.8" cy="371.4" r="4.2"/><circle cx="351.3" cy="349.4" r="4.2"/><circle cx="342.3" cy="351.2" r="4.2"/><circle cx="334.5" cy="352.5" r="4.2"/><circle cx="328.1" cy="348.6" r="4.2"/><circle cx="321.6" cy="344.8" r="4.2"/><circle cx="316.5" cy="338.3" r="4.2"/><circle cx="315.2" cy="331.9" r="4.2"/><circle cx="311.3" cy="349.9" r="4.2"/><circle cx="312.6" cy="340.9" r="4.2"/></g>
<g fill="#111"><circle cx="191.0" cy="413.9" r="5.15"/><circle cx="274.1" cy="408.0" r="5.15"/><circle cx="264.5" cy="422.2" r="5.15"/><circle cx="267.1" cy="427.4" r="5.15"/><circle cx="267.1" cy="431.2" r="5.15"/><circle cx="301.9" cy="431.2" r="5.15"/><circle cx="215.5" cy="439.7" r="5.15"/><circle cx="225.0" cy="451.9" r="5.15"/><circle cx="225.8" cy="481.5" r="5.15"/><circle cx="228.4" cy="484.1" r="5.15"/><circle cx="245.2" cy="477.2" r="5.15"/><circle cx="250.3" cy="479.7" r="5.15"/><circle cx="269.7" cy="477.7" r="5.15"/><circle cx="276.9" cy="491.1" r="5.15"/><circle cx="265.8" cy="499.6" r="5.15"/><circle cx="373.2" cy="379.6" r="5.15"/><circle cx="375.8" cy="383.5" r="5.15"/><circle cx="387.4" cy="385.5" r="5.15"/><circle cx="370.6" cy="400.3" r="5.15"/><circle cx="365.5" cy="403.6" r="5.15"/><circle cx="368.8" cy="417.0" r="5.15"/><circle cx="377.6" cy="413.2" r="5.15"/><circle cx="386.9" cy="412.4" r="5.15"/><circle cx="381.0" cy="428.6" r="5.15"/><circle cx="340.2" cy="431.7" r="5.15"/><circle cx="386.9" cy="442.8" r="5.15"/><circle cx="346.6" cy="467.4" r="5.15"/><circle cx="344.8" cy="472.5" r="5.15"/><circle cx="374.0" cy="491.9" r="5.15"/><circle cx="265.8" cy="500.6" r="5.15"/><circle cx="265.0" cy="522.5" r="5.15"/><circle cx="287.7" cy="534.1" r="5.15"/><circle cx="292.9" cy="538.8" r="5.15"/><circle cx="300.6" cy="545.7" r="5.15"/><circle cx="316.1" cy="536.7" r="5.15"/><circle cx="256.0" cy="553.5" r="5.15"/><circle cx="249.0" cy="566.4" r="5.15"/><circle cx="254.2" cy="567.7" r="5.15"/><circle cx="251.6" cy="563.8" r="5.15"/><circle cx="309.7" cy="564.6" r="5.15"/><circle cx="352.6" cy="515.3" r="5.15"/><circle cx="373.2" cy="525.1" r="5.15"/><circle cx="397.0" cy="523.8" r="5.15"/><circle cx="388.2" cy="530.8" r="5.15"/><circle cx="344.1" cy="532.3" r="5.15"/><circle cx="315.7" cy="536.7" r="5.15"/><circle cx="360.8" cy="542.6" r="5.15"/><circle cx="311.3" cy="565.1" r="5.15"/></g>
<g fill="#c0171b"><circle cx="191.0" cy="413.9" r="4.2"/><circle cx="274.1" cy="408.0" r="4.2"/><circle cx="264.5" cy="422.2" r="4.2"/><circle cx="267.1" cy="427.4" r="4.2"/><circle cx="267.1" cy="431.2" r="4.2"/><circle cx="301.9" cy="431.2" r="4.2"/><circle cx="215.5" cy="439.7" r="4.2"/><circle cx="225.0" cy="451.9" r="4.2"/><circle cx="225.8" cy="481.5" r="4.2"/><circle cx="228.4" cy="484.1" r="4.2"/><circle cx="245.2" cy="477.2" r="4.2"/><circle cx="250.3" cy="479.7" r="4.2"/><circle cx="269.7" cy="477.7" r="4.2"/><circle cx="276.9" cy="491.1" r="4.2"/><circle cx="265.8" cy="499.6" r="4.2"/><circle cx="373.2" cy="379.6" r="4.2"/><circle cx="375.8" cy="383.5" r="4.2"/><circle cx="387.4" cy="385.5" r="4.2"/><circle cx="370.6" cy="400.3" r="4.2"/><circle cx="365.5" cy="403.6" r="4.2"/><circle cx="368.8" cy="417.0" r="4.2"/><circle cx="377.6" cy="413.2" r="4.2"/><circle cx="386.9" cy="412.4" r="4.2"/><circle cx="381.0" cy="428.6" r="4.2"/><circle cx="340.2" cy="431.7" r="4.2"/><circle cx="386.9" cy="442.8" r="4.2"/><circle cx="346.6" cy="467.4" r="4.2"/><circle cx="344.8" cy="472.5" r="4.2"/><circle cx="374.0" cy="491.9" r="4.2"/><circle cx="265.8" cy="500.6" r="4.2"/><circle cx="265.0" cy="522.5" r="4.2"/><circle cx="287.7" cy="534.1" r="4.2"/><circle cx="292.9" cy="538.8" r="4.2"/><circle cx="300.6" cy="545.7" r="4.2"/><circle cx="316.1" cy="536.7" r="4.2"/><circle cx="256.0" cy="553.5" r="4.2"/><circle cx="249.0" cy="566.4" r="4.2"/><circle cx="254.2" cy="567.7" r="4.2"/><circle cx="251.6" cy="563.8" r="4.2"/><circle cx="309.7" cy="564.6" r="4.2"/><circle cx="352.6" cy="515.3" r="4.2"/><circle cx="373.2" cy="525.1" r="4.2"/><circle cx="397.0" cy="523.8" r="4.2"/><circle cx="388.2" cy="530.8" r="4.2"/><circle cx="344.1" cy="532.3" r="4.2"/><circle cx="315.7" cy="536.7" r="4.2"/><circle cx="360.8" cy="542.6" r="4.2"/><circle cx="311.3" cy="565.1" r="4.2"/></g>
<g fill="#111"><circle cx="533.7" cy="355.6" r="5.15"/><circle cx="559.8" cy="375.2" r="5.15"/><circle cx="529.9" cy="378.8" r="5.15"/><circle cx="513.9" cy="389.4" r="5.15"/><circle cx="533.7" cy="410.6" r="5.15"/><circle cx="562.9" cy="422.2" r="5.15"/><circle cx="567.3" cy="427.4" r="5.15"/><circle cx="517.0" cy="427.4" r="5.15"/><circle cx="477.2" cy="417.0" r="5.15"/><circle cx="457.9" cy="417.5" r="5.15"/><circle cx="446.8" cy="410.6" r="5.15"/><circle cx="433.4" cy="411.1" r="5.15"/><circle cx="421.0" cy="410.1" r="5.15"/><circle cx="408.8" cy="424.3" r="5.15"/><circle cx="457.9" cy="430.7" r="5.15"/><circle cx="486.3" cy="437.2" r="5.15"/><circle cx="428.7" cy="444.1" r="5.15"/><circle cx="499.2" cy="455.7" r="5.15"/><circle cx="499.2" cy="459.6" r="5.15"/><circle cx="475.2" cy="471.7" r="5.15"/><circle cx="507.9" cy="473.8" r="5.15"/><circle cx="436.5" cy="473.0" r="5.15"/><circle cx="451.2" cy="481.5" r="5.15"/><circle cx="448.6" cy="489.8" r="5.15"/><circle cx="424.8" cy="497.0" r="5.15"/><circle cx="425.4" cy="500.9" r="5.15"/><circle cx="414.5" cy="371.9" r="5.15"/><circle cx="415.8" cy="377.0" r="5.15"/><circle cx="406.8" cy="388.6" r="5.15"/><circle cx="406.8" cy="395.1" r="5.15"/><circle cx="444.2" cy="366.7" r="5.15"/><circle cx="450.6" cy="368.0" r="5.15"/><circle cx="455.8" cy="364.1" r="5.15"/><circle cx="436.5" cy="373.9" r="5.15"/><circle cx="441.6" cy="374.5" r="5.15"/><circle cx="458.4" cy="378.3" r="5.15"/><circle cx="465.6" cy="385.5" r="5.15"/><circle cx="457.9" cy="390.5" r="5.15"/><circle cx="430.0" cy="388.6" r="5.15"/><circle cx="436.5" cy="388.6" r="5.15"/><circle cx="427.4" cy="395.1" r="5.15"/><circle cx="433.9" cy="396.4" r="5.15"/><circle cx="439.0" cy="395.1" r="5.15"/><circle cx="431.3" cy="401.5" r="5.15"/><circle cx="436.5" cy="402.3" r="5.15"/><circle cx="424.8" cy="500.6" r="5.15"/><circle cx="537.9" cy="515.5" r="5.15"/><circle cx="463.0" cy="529.7" r="5.15"/><circle cx="523.7" cy="533.6" r="5.15"/><circle cx="456.6" cy="550.9" r="5.15"/><circle cx="395.2" cy="556.8" r="5.15"/><circle cx="419.7" cy="555.3" r="5.15"/><circle cx="428.7" cy="555.3" r="5.15"/><circle cx="405.0" cy="568.2" r="5.15"/><circle cx="361.1" cy="575.4" r="5.15"/><circle cx="458.4" cy="578.0" r="5.15"/><circle cx="374.5" cy="562.5" r="5.15"/><circle cx="378.4" cy="566.4" r="5.15"/><circle cx="382.3" cy="567.7" r="5.15"/><circle cx="371.9" cy="570.3" r="5.15"/><circle cx="370.6" cy="574.1" r="5.15"/><circle cx="377.1" cy="572.8" r="5.15"/><circle cx="466.1" cy="559.9" r="5.15"/><circle cx="471.3" cy="558.6" r="5.15"/><circle cx="476.5" cy="557.9" r="5.15"/><circle cx="480.3" cy="556.8" r="5.15"/><circle cx="488.1" cy="559.9" r="5.15"/><circle cx="491.9" cy="556.1" r="5.15"/><circle cx="494.5" cy="561.2" r="5.15"/><circle cx="495.8" cy="566.4" r="5.15"/><circle cx="501.0" cy="567.2" r="5.15"/><circle cx="451.7" cy="364.5" r="5.15"/><circle cx="446.4" cy="367.6" r="5.15"/><circle cx="453.4" cy="367.6" r="5.15"/><circle cx="441.2" cy="370.6" r="5.15"/><circle cx="435.9" cy="373.6" r="5.15"/><circle cx="439.4" cy="373.6" r="5.15"/><circle cx="430.8" cy="389.4" r="5.15"/><circle cx="434.3" cy="389.4" r="5.15"/><circle cx="429.0" cy="392.4" r="5.15"/><circle cx="432.5" cy="392.4" r="5.15"/><circle cx="436.0" cy="392.4" r="5.15"/><circle cx="430.8" cy="395.4" r="5.15"/><circle cx="434.3" cy="395.4" r="5.15"/><circle cx="432.5" cy="398.5" r="5.15"/><circle cx="415.5" cy="372.3" r="5.15"/><circle cx="416.9" cy="378.5" r="5.15"/><circle cx="407.2" cy="388.8" r="5.15"/><circle cx="407.2" cy="395.7" r="5.15"/><circle cx="458.9" cy="378.5" r="5.15"/><circle cx="465.8" cy="385.4" r="5.15"/><circle cx="458.2" cy="390.6" r="5.15"/></g>
<g fill="#3d9140"><circle cx="533.7" cy="355.6" r="4.2"/><circle cx="559.8" cy="375.2" r="4.2"/><circle cx="529.9" cy="378.8" r="4.2"/><circle cx="513.9" cy="389.4" r="4.2"/><circle cx="533.7" cy="410.6" r="4.2"/><circle cx="562.9" cy="422.2" r="4.2"/><circle cx="567.3" cy="427.4" r="4.2"/><circle cx="517.0" cy="427.4" r="4.2"/><circle cx="477.2" cy="417.0" r="4.2"/><circle cx="457.9" cy="417.5" r="4.2"/><circle cx="446.8" cy="410.6" r="4.2"/><circle cx="433.4" cy="411.1" r="4.2"/><circle cx="421.0" cy="410.1" r="4.2"/><circle cx="408.8" cy="424.3" r="4.2"/><circle cx="457.9" cy="430.7" r="4.2"/><circle cx="486.3" cy="437.2" r="4.2"/><circle cx="428.7" cy="444.1" r="4.2"/><circle cx="499.2" cy="455.7" r="4.2"/><circle cx="499.2" cy="459.6" r="4.2"/><circle cx="475.2" cy="471.7" r="4.2"/><circle cx="507.9" cy="473.8" r="4.2"/><circle cx="436.5" cy="473.0" r="4.2"/><circle cx="451.2" cy="481.5" r="4.2"/><circle cx="448.6" cy="489.8" r="4.2"/><circle cx="424.8" cy="497.0" r="4.2"/><circle cx="425.4" cy="500.9" r="4.2"/><circle cx="414.5" cy="371.9" r="4.2"/><circle cx="415.8" cy="377.0" r="4.2"/><circle cx="406.8" cy="388.6" r="4.2"/><circle cx="406.8" cy="395.1" r="4.2"/><circle cx="444.2" cy="366.7" r="4.2"/><circle cx="450.6" cy="368.0" r="4.2"/><circle cx="455.8" cy="364.1" r="4.2"/><circle cx="436.5" cy="373.9" r="4.2"/><circle cx="441.6" cy="374.5" r="4.2"/><circle cx="458.4" cy="378.3" r="4.2"/><circle cx="465.6" cy="385.5" r="4.2"/><circle cx="457.9" cy="390.5" r="4.2"/><circle cx="430.0" cy="388.6" r="4.2"/><circle cx="436.5" cy="388.6" r="4.2"/><circle cx="427.4" cy="395.1" r="4.2"/><circle cx="433.9" cy="396.4" r="4.2"/><circle cx="439.0" cy="395.1" r="4.2"/><circle cx="431.3" cy="401.5" r="4.2"/><circle cx="436.5" cy="402.3" r="4.2"/><circle cx="424.8" cy="500.6" r="4.2"/><circle cx="537.9" cy="515.5" r="4.2"/><circle cx="463.0" cy="529.7" r="4.2"/><circle cx="523.7" cy="533.6" r="4.2"/><circle cx="456.6" cy="550.9" r="4.2"/><circle cx="395.2" cy="556.8" r="4.2"/><circle cx="419.7" cy="555.3" r="4.2"/><circle cx="428.7" cy="555.3" r="4.2"/><circle cx="405.0" cy="568.2" r="4.2"/><circle cx="361.1" cy="575.4" r="4.2"/><circle cx="458.4" cy="578.0" r="4.2"/><circle cx="374.5" cy="562.5" r="4.2"/><circle cx="378.4" cy="566.4" r="4.2"/><circle cx="382.3" cy="567.7" r="4.2"/><circle cx="371.9" cy="570.3" r="4.2"/><circle cx="370.6" cy="574.1" r="4.2"/><circle cx="377.1" cy="572.8" r="4.2"/><circle cx="466.1" cy="559.9" r="4.2"/><circle cx="471.3" cy="558.6" r="4.2"/><circle cx="476.5" cy="557.9" r="4.2"/><circle cx="480.3" cy="556.8" r="4.2"/><circle cx="488.1" cy="559.9" r="4.2"/><circle cx="491.9" cy="556.1" r="4.2"/><circle cx="494.5" cy="561.2" r="4.2"/><circle cx="495.8" cy="566.4" r="4.2"/><circle cx="501.0" cy="567.2" r="4.2"/><circle cx="451.7" cy="364.5" r="4.2"/><circle cx="446.4" cy="367.6" r="4.2"/><circle cx="453.4" cy="367.6" r="4.2"/><circle cx="441.2" cy="370.6" r="4.2"/><circle cx="435.9" cy="373.6" r="4.2"/><circle cx="439.4" cy="373.6" r="4.2"/><circle cx="430.8" cy="389.4" r="4.2"/><circle cx="434.3" cy="389.4" r="4.2"/><circle cx="429.0" cy="392.4" r="4.2"/><circle cx="432.5" cy="392.4" r="4.2"/><circle cx="436.0" cy="392.4" r="4.2"/><circle cx="430.8" cy="395.4" r="4.2"/><circle cx="434.3" cy="395.4" r="4.2"/><circle cx="432.5" cy="398.5" r="4.2"/><circle cx="415.5" cy="372.3" r="4.2"/><circle cx="416.9" cy="378.5" r="4.2"/><circle cx="407.2" cy="388.8" r="4.2"/><circle cx="407.2" cy="395.7" r="4.2"/><circle cx="458.9" cy="378.5" r="4.2"/><circle cx="465.8" cy="385.4" r="4.2"/><circle cx="458.2" cy="390.6" r="4.2"/></g>
<g fill="#111"><circle cx="483.4" cy="280.3" r="5.15"/><circle cx="486.3" cy="284.1" r="5.15"/><circle cx="521.6" cy="282.8" r="5.15"/><circle cx="525.5" cy="286.7" r="5.15"/><circle cx="527.3" cy="293.9" r="5.15"/><circle cx="571.2" cy="318.7" r="5.15"/><circle cx="504.1" cy="337.0" r="5.15"/><circle cx="470.0" cy="361.5" r="5.15"/><circle cx="473.9" cy="372.6" r="5.15"/><circle cx="488.8" cy="371.9" r="5.15"/><circle cx="446.8" cy="324.1" r="5.15"/><circle cx="450.6" cy="328.0" r="5.15"/><circle cx="453.2" cy="333.2" r="5.15"/><circle cx="454.5" cy="338.3" r="5.15"/><circle cx="450.6" cy="343.5" r="5.15"/><circle cx="445.5" cy="347.4" r="5.15"/><circle cx="440.3" cy="349.9" r="5.15"/><circle cx="435.2" cy="352.5" r="5.15"/><circle cx="432.6" cy="355.1" r="5.15"/><circle cx="439.0" cy="355.1" r="5.15"/><circle cx="445.5" cy="356.4" r="5.15"/><circle cx="451.9" cy="356.4" r="5.15"/><circle cx="457.1" cy="351.2" r="5.15"/><circle cx="462.3" cy="347.4" r="5.15"/><circle cx="464.8" cy="342.2" r="5.15"/><circle cx="470.0" cy="339.6" r="5.15"/><circle cx="475.2" cy="338.3" r="5.15"/><circle cx="479.0" cy="340.9" r="5.15"/><circle cx="477.7" cy="347.4" r="5.15"/><circle cx="471.3" cy="347.4" r="5.15"/><circle cx="480.3" cy="328.0" r="5.15"/><circle cx="484.2" cy="329.3" r="5.15"/><circle cx="449.4" cy="337.0" r="5.15"/><circle cx="458.4" cy="343.5" r="5.15"/><circle cx="450.6" cy="351.2" r="5.15"/><circle cx="450.3" cy="325.2" r="5.15"/><circle cx="452.0" cy="328.3" r="5.15"/><circle cx="450.3" cy="331.3" r="5.15"/><circle cx="453.8" cy="331.3" r="5.15"/><circle cx="457.3" cy="331.3" r="5.15"/><circle cx="452.0" cy="334.3" r="5.15"/><circle cx="455.5" cy="334.3" r="5.15"/><circle cx="453.8" cy="337.4" r="5.15"/><circle cx="457.3" cy="337.4" r="5.15"/><circle cx="452.0" cy="340.4" r="5.15"/><circle cx="455.5" cy="340.4" r="5.15"/><circle cx="459.0" cy="340.4" r="5.15"/><circle cx="462.5" cy="340.4" r="5.15"/><circle cx="473.0" cy="340.4" r="5.15"/><circle cx="476.5" cy="340.4" r="5.15"/><circle cx="450.3" cy="343.4" r="5.15"/><circle cx="453.8" cy="343.4" r="5.15"/><circle cx="457.3" cy="343.4" r="5.15"/><circle cx="460.8" cy="343.4" r="5.15"/><circle cx="464.3" cy="343.4" r="5.15"/><circle cx="467.8" cy="343.4" r="5.15"/><circle cx="471.3" cy="343.4" r="5.15"/><circle cx="474.8" cy="343.4" r="5.15"/><circle cx="448.5" cy="346.5" r="5.15"/><circle cx="452.0" cy="346.5" r="5.15"/><circle cx="455.5" cy="346.5" r="5.15"/><circle cx="459.0" cy="346.5" r="5.15"/><circle cx="462.5" cy="346.5" r="5.15"/><circle cx="473.0" cy="346.5" r="5.15"/><circle cx="476.5" cy="346.5" r="5.15"/><circle cx="443.3" cy="349.5" r="5.15"/><circle cx="446.8" cy="349.5" r="5.15"/><circle cx="450.3" cy="349.5" r="5.15"/><circle cx="453.8" cy="349.5" r="5.15"/><circle cx="457.3" cy="349.5" r="5.15"/><circle cx="460.8" cy="349.5" r="5.15"/><circle cx="464.3" cy="349.5" r="5.15"/><circle cx="438.0" cy="352.5" r="5.15"/><circle cx="441.5" cy="352.5" r="5.15"/><circle cx="445.0" cy="352.5" r="5.15"/><circle cx="448.5" cy="352.5" r="5.15"/><circle cx="452.0" cy="352.5" r="5.15"/><circle cx="439.8" cy="355.6" r="5.15"/><circle cx="443.3" cy="355.6" r="5.15"/><circle cx="446.8" cy="355.6" r="5.15"/><circle cx="450.3" cy="355.6" r="5.15"/><circle cx="482.4" cy="279.2" r="5.15"/><circle cx="485.1" cy="282.7" r="5.15"/><circle cx="486.5" cy="286.1" r="5.15"/><circle cx="521.7" cy="283.3" r="5.15"/><circle cx="525.8" cy="286.8" r="5.15"/><circle cx="527.2" cy="293.7" r="5.15"/><circle cx="481.0" cy="328.1" r="5.15"/></g>
<g fill="#ffff33"><circle cx="483.4" cy="280.3" r="4.2"/><circle cx="486.3" cy="284.1" r="4.2"/><circle cx="521.6" cy="282.8" r="4.2"/><circle cx="525.5" cy="286.7" r="4.2"/><circle cx="527.3" cy="293.9" r="4.2"/><circle cx="571.2" cy="318.7" r="4.2"/><circle cx="504.1" cy="337.0" r="4.2"/><circle cx="470.0" cy="361.5" r="4.2"/><circle cx="473.9" cy="372.6" r="4.2"/><circle cx="488.8" cy="371.9" r="4.2"/><circle cx="446.8" cy="324.1" r="4.2"/><circle cx="450.6" cy="328.0" r="4.2"/><circle cx="453.2" cy="333.2" r="4.2"/><circle cx="454.5" cy="338.3" r="4.2"/><circle cx="450.6" cy="343.5" r="4.2"/><circle cx="445.5" cy="347.4" r="4.2"/><circle cx="440.3" cy="349.9" r="4.2"/><circle cx="435.2" cy="352.5" r="4.2"/><circle cx="432.6" cy="355.1" r="4.2"/><circle cx="439.0" cy="355.1" r="4.2"/><circle cx="445.5" cy="356.4" r="4.2"/><circle cx="451.9" cy="356.4" r="4.2"/><circle cx="457.1" cy="351.2" r="4.2"/><circle cx="462.3" cy="347.4" r="4.2"/><circle cx="464.8" cy="342.2" r="4.2"/><circle cx="470.0" cy="339.6" r="4.2"/><circle cx="475.2" cy="338.3" r="4.2"/><circle cx="479.0" cy="340.9" r="4.2"/><circle cx="477.7" cy="347.4" r="4.2"/><circle cx="471.3" cy="347.4" r="4.2"/><circle cx="480.3" cy="328.0" r="4.2"/><circle cx="484.2" cy="329.3" r="4.2"/><circle cx="449.4" cy="337.0" r="4.2"/><circle cx="458.4" cy="343.5" r="4.2"/><circle cx="450.6" cy="351.2" r="4.2"/><circle cx="450.3" cy="325.2" r="4.2"/><circle cx="452.0" cy="328.3" r="4.2"/><circle cx="450.3" cy="331.3" r="4.2"/><circle cx="453.8" cy="331.3" r="4.2"/><circle cx="457.3" cy="331.3" r="4.2"/><circle cx="452.0" cy="334.3" r="4.2"/><circle cx="455.5" cy="334.3" r="4.2"/><circle cx="453.8" cy="337.4" r="4.2"/><circle cx="457.3" cy="337.4" r="4.2"/><circle cx="452.0" cy="340.4" r="4.2"/><circle cx="455.5" cy="340.4" r="4.2"/><circle cx="459.0" cy="340.4" r="4.2"/><circle cx="462.5" cy="340.4" r="4.2"/><circle cx="473.0" cy="340.4" r="4.2"/><circle cx="476.5" cy="340.4" r="4.2"/><circle cx="450.3" cy="343.4" r="4.2"/><circle cx="453.8" cy="343.4" r="4.2"/><circle cx="457.3" cy="343.4" r="4.2"/><circle cx="460.8" cy="343.4" r="4.2"/><circle cx="464.3" cy="343.4" r="4.2"/><circle cx="467.8" cy="343.4" r="4.2"/><circle cx="471.3" cy="343.4" r="4.2"/><circle cx="474.8" cy="343.4" r="4.2"/><circle cx="448.5" cy="346.5" r="4.2"/><circle cx="452.0" cy="346.5" r="4.2"/><circle cx="455.5" cy="346.5" r="4.2"/><circle cx="459.0" cy="346.5" r="4.2"/><circle cx="462.5" cy="346.5" r="4.2"/><circle cx="473.0" cy="346.5" r="4.2"/><circle cx="476.5" cy="346.5" r="4.2"/><circle cx="443.3" cy="349.5" r="4.2"/><circle cx="446.8" cy="349.5" r="4.2"/><circle cx="450.3" cy="349.5" r="4.2"/><circle cx="453.8" cy="349.5" r="4.2"/><circle cx="457.3" cy="349.5" r="4.2"/><circle cx="460.8" cy="349.5" r="4.2"/><circle cx="464.3" cy="349.5" r="4.2"/><circle cx="438.0" cy="352.5" r="4.2"/><circle cx="441.5" cy="352.5" r="4.2"/><circle cx="445.0" cy="352.5" r="4.2"/><circle cx="448.5" cy="352.5" r="4.2"/><circle cx="452.0" cy="352.5" r="4.2"/><circle cx="439.8" cy="355.6" r="4.2"/><circle cx="443.3" cy="355.6" r="4.2"/><circle cx="446.8" cy="355.6" r="4.2"/><circle cx="450.3" cy="355.6" r="4.2"/><circle cx="482.4" cy="279.2" r="4.2"/><circle cx="485.1" cy="282.7" r="4.2"/><circle cx="486.5" cy="286.1" r="4.2"/><circle cx="521.7" cy="283.3" r="4.2"/><circle cx="525.8" cy="286.8" r="4.2"/><circle cx="527.2" cy="293.7" r="4.2"/><circle cx="481.0" cy="328.1" r="4.2"/></g>
<g fill="#111"><circle cx="615.8" cy="331.1" r="5.15"/><circle cx="628.7" cy="351.2" r="5.15"/><circle cx="593.1" cy="378.8" r="5.15"/><circle cx="618.4" cy="376.3" r="5.15"/><circle cx="623.5" cy="420.4" r="5.15"/><circle cx="628.7" cy="423.5" r="5.15"/><circle cx="614.0" cy="428.6" r="5.15"/><circle cx="615.0" cy="441.5" r="5.15"/><circle cx="559.0" cy="453.7" r="5.15"/><circle cx="582.3" cy="450.6" r="5.15"/><circle cx="587.4" cy="452.6" r="5.15"/><circle cx="602.1" cy="455.7" r="5.15"/><circle cx="617.1" cy="463.0" r="5.15"/><circle cx="578.4" cy="471.2" r="5.15"/><circle cx="599.5" cy="486.7" r="5.15"/><circle cx="590.0" cy="506.1" r="5.15"/><circle cx="630.3" cy="352.0" r="5.15"/><circle cx="678.1" cy="363.6" r="5.15"/><circle cx="620.0" cy="376.3" r="5.15"/><circle cx="702.6" cy="371.9" r="5.15"/><circle cx="674.2" cy="375.7" r="5.15"/><circle cx="681.9" cy="382.2" r="5.15"/><circle cx="689.2" cy="385.3" r="5.15"/><circle cx="710.3" cy="379.6" r="5.15"/><circle cx="705.2" cy="383.5" r="5.15"/><circle cx="701.3" cy="388.6" r="5.15"/><circle cx="702.6" cy="393.8" r="5.15"/><circle cx="674.2" cy="395.9" r="5.15"/><circle cx="694.1" cy="402.1" r="5.15"/><circle cx="638.8" cy="404.6" r="5.15"/><circle cx="678.1" cy="411.4" r="5.15"/><circle cx="687.1" cy="411.4" r="5.15"/><circle cx="692.3" cy="411.4" r="5.15"/><circle cx="623.9" cy="420.4" r="5.15"/><circle cx="631.6" cy="427.4" r="5.15"/><circle cx="660.0" cy="427.4" r="5.15"/><circle cx="652.8" cy="435.1" r="5.15"/><circle cx="667.7" cy="419.6" r="5.15"/><circle cx="674.2" cy="418.3" r="5.15"/><circle cx="680.6" cy="419.6" r="5.15"/><circle cx="685.8" cy="422.2" r="5.15"/><circle cx="670.3" cy="426.1" r="5.15"/><circle cx="676.8" cy="427.4" r="5.15"/><circle cx="684.5" cy="428.6" r="5.15"/><circle cx="671.6" cy="432.5" r="5.15"/><circle cx="680.6" cy="433.8" r="5.15"/><circle cx="685.8" cy="435.1" r="5.15"/><circle cx="666.5" cy="439.0" r="5.15"/><circle cx="667.7" cy="445.4" r="5.15"/><circle cx="678.1" cy="446.7" r="5.15"/><circle cx="685.8" cy="444.1" r="5.15"/><circle cx="672.9" cy="451.9" r="5.15"/><circle cx="676.8" cy="457.0" r="5.15"/><circle cx="691.0" cy="460.1" r="5.15"/><circle cx="661.3" cy="471.2" r="5.15"/><circle cx="670.3" cy="473.0" r="5.15"/><circle cx="651.0" cy="499.6" r="5.15"/><circle cx="674.2" cy="498.3" r="5.15"/><circle cx="629.0" cy="506.1" r="5.15"/><circle cx="620.0" cy="462.2" r="5.15"/><circle cx="691.0" cy="472.5" r="5.15"/><circle cx="696.1" cy="472.5" r="5.15"/><circle cx="689.7" cy="479.0" r="5.15"/><circle cx="697.4" cy="479.0" r="5.15"/><circle cx="702.6" cy="481.5" r="5.15"/><circle cx="692.3" cy="485.4" r="5.15"/><circle cx="700.0" cy="488.0" r="5.15"/><circle cx="707.7" cy="485.4" r="5.15"/><circle cx="714.2" cy="486.7" r="5.15"/><circle cx="719.4" cy="490.6" r="5.15"/><circle cx="710.3" cy="493.2" r="5.15"/><circle cx="718.1" cy="497.0" r="5.15"/><circle cx="705.2" cy="495.7" r="5.15"/><circle cx="697.4" cy="497.0" r="5.15"/><circle cx="692.3" cy="499.6" r="5.15"/><circle cx="700.0" cy="503.5" r="5.15"/><circle cx="710.3" cy="503.5" r="5.15"/><circle cx="590.0" cy="508.3" r="5.15"/><circle cx="591.3" cy="514.8" r="5.15"/><circle cx="615.0" cy="517.4" r="5.15"/><circle cx="628.7" cy="505.7" r="5.15"/><circle cx="630.3" cy="505.7" r="5.15"/><circle cx="651.0" cy="499.3" r="5.15"/><circle cx="674.2" cy="499.3" r="5.15"/><circle cx="692.3" cy="500.6" r="5.15"/><circle cx="697.4" cy="504.5" r="5.15"/><circle cx="702.6" cy="508.3" r="5.15"/><circle cx="707.7" cy="503.2" r="5.15"/><circle cx="712.9" cy="500.6" r="5.15"/><circle cx="716.8" cy="498.0" r="5.15"/><circle cx="694.8" cy="512.2" r="5.15"/><circle cx="700.0" cy="514.8" r="5.15"/><circle cx="691.0" cy="516.1" r="5.15"/><circle cx="704.9" cy="384.2" r="5.15"/><circle cx="703.2" cy="387.2" r="5.15"/><circle cx="701.4" cy="390.2" r="5.15"/><circle cx="672.0" cy="421.3" r="5.15"/><circle cx="675.5" cy="421.3" r="5.15"/><circle cx="679.0" cy="421.3" r="5.15"/><circle cx="682.5" cy="421.3" r="5.15"/><circle cx="677.2" cy="424.4" r="5.15"/><circle cx="680.7" cy="424.4" r="5.15"/><circle cx="684.2" cy="424.4" r="5.15"/><circle cx="679.0" cy="427.4" r="5.15"/><circle cx="682.5" cy="427.4" r="5.15"/><circle cx="677.2" cy="430.4" r="5.15"/><circle cx="680.7" cy="430.4" r="5.15"/><circle cx="684.2" cy="430.4" r="5.15"/><circle cx="675.5" cy="433.4" r="5.15"/><circle cx="679.0" cy="433.4" r="5.15"/><circle cx="682.5" cy="433.4" r="5.15"/><circle cx="673.7" cy="436.5" r="5.15"/><circle cx="677.2" cy="436.5" r="5.15"/><circle cx="680.7" cy="436.5" r="5.15"/><circle cx="668.5" cy="439.5" r="5.15"/><circle cx="672.0" cy="439.5" r="5.15"/><circle cx="675.5" cy="439.5" r="5.15"/><circle cx="679.0" cy="439.5" r="5.15"/><circle cx="682.5" cy="439.5" r="5.15"/><circle cx="666.7" cy="442.5" r="5.15"/><circle cx="670.2" cy="442.5" r="5.15"/><circle cx="673.7" cy="442.5" r="5.15"/><circle cx="677.2" cy="442.5" r="5.15"/><circle cx="680.7" cy="442.5" r="5.15"/><circle cx="684.2" cy="442.5" r="5.15"/><circle cx="668.5" cy="445.6" r="5.15"/><circle cx="672.0" cy="445.6" r="5.15"/><circle cx="675.5" cy="445.6" r="5.15"/><circle cx="679.0" cy="445.6" r="5.15"/><circle cx="670.2" cy="448.6" r="5.15"/><circle cx="673.7" cy="448.6" r="5.15"/><circle cx="677.2" cy="448.6" r="5.15"/><circle cx="675.5" cy="451.6" r="5.15"/><circle cx="692.9" cy="474.9" r="5.15"/><circle cx="696.4" cy="474.9" r="5.15"/><circle cx="691.2" cy="478.0" r="5.15"/><circle cx="694.7" cy="478.0" r="5.15"/><circle cx="698.2" cy="478.0" r="5.15"/><circle cx="701.7" cy="478.0" r="5.15"/><circle cx="692.9" cy="481.0" r="5.15"/><circle cx="696.4" cy="481.0" r="5.15"/><circle cx="699.9" cy="481.0" r="5.15"/><circle cx="703.4" cy="481.0" r="5.15"/><circle cx="694.7" cy="484.0" r="5.15"/><circle cx="698.2" cy="484.0" r="5.15"/><circle cx="701.7" cy="484.0" r="5.15"/><circle cx="705.2" cy="484.0" r="5.15"/><circle cx="708.7" cy="484.0" r="5.15"/><circle cx="699.9" cy="487.0" r="5.15"/><circle cx="703.4" cy="487.0" r="5.15"/><circle cx="706.9" cy="487.0" r="5.15"/><circle cx="710.4" cy="487.0" r="5.15"/><circle cx="713.9" cy="487.0" r="5.15"/><circle cx="717.4" cy="487.0" r="5.15"/><circle cx="708.7" cy="490.1" r="5.15"/><circle cx="712.2" cy="490.1" r="5.15"/><circle cx="715.7" cy="490.1" r="5.15"/><circle cx="719.2" cy="490.1" r="5.15"/><circle cx="710.4" cy="493.1" r="5.15"/><circle cx="713.9" cy="493.1" r="5.15"/><circle cx="717.4" cy="493.1" r="5.15"/><circle cx="712.2" cy="496.1" r="5.15"/><circle cx="715.7" cy="496.1" r="5.15"/><circle cx="719.2" cy="496.1" r="5.15"/><circle cx="710.4" cy="499.2" r="5.15"/><circle cx="713.9" cy="499.2" r="5.15"/><circle cx="717.4" cy="499.2" r="5.15"/><circle cx="708.7" cy="502.2" r="5.15"/><circle cx="712.2" cy="502.2" r="5.15"/><circle cx="703.4" cy="505.2" r="5.15"/><circle cx="706.9" cy="505.2" r="5.15"/><circle cx="710.4" cy="505.2" r="5.15"/><circle cx="698.2" cy="508.3" r="5.15"/><circle cx="701.7" cy="508.3" r="5.15"/><circle cx="713.8" cy="495.9" r="5.15"/><circle cx="701.5" cy="498.9" r="5.15"/><circle cx="705.0" cy="498.9" r="5.15"/><circle cx="708.5" cy="498.9" r="5.15"/><circle cx="712.0" cy="498.9" r="5.15"/><circle cx="715.5" cy="498.9" r="5.15"/><circle cx="699.8" cy="502.0" r="5.15"/><circle cx="703.3" cy="502.0" r="5.15"/><circle cx="706.8" cy="502.0" r="5.15"/><circle cx="710.3" cy="502.0" r="5.15"/><circle cx="713.8" cy="502.0" r="5.15"/><circle cx="701.5" cy="505.0" r="5.15"/><circle cx="705.0" cy="505.0" r="5.15"/><circle cx="708.5" cy="505.0" r="5.15"/><circle cx="699.8" cy="508.0" r="5.15"/><circle cx="703.3" cy="508.0" r="5.15"/><circle cx="706.8" cy="508.0" r="5.15"/><circle cx="694.5" cy="511.1" r="5.15"/><circle cx="698.0" cy="511.1" r="5.15"/><circle cx="701.5" cy="511.1" r="5.15"/><circle cx="678.0" cy="410.5" r="5.15"/><circle cx="687.5" cy="411.3" r="5.15"/><circle cx="693.8" cy="411.3" r="5.15"/><circle cx="694.3" cy="401.5" r="5.15"/><circle cx="659.9" cy="427.9" r="5.15"/><circle cx="652.8" cy="435.0" r="5.15"/><circle cx="660.7" cy="470.4" r="5.15"/><circle cx="662.3" cy="468.9" r="5.15"/><circle cx="690.6" cy="499.6" r="5.15"/><circle cx="696.2" cy="497.2" r="5.15"/></g>
<g fill="#ee5356"><circle cx="615.8" cy="331.1" r="4.2"/><circle cx="628.7" cy="351.2" r="4.2"/><circle cx="593.1" cy="378.8" r="4.2"/><circle cx="618.4" cy="376.3" r="4.2"/><circle cx="623.5" cy="420.4" r="4.2"/><circle cx="628.7" cy="423.5" r="4.2"/><circle cx="614.0" cy="428.6" r="4.2"/><circle cx="615.0" cy="441.5" r="4.2"/><circle cx="559.0" cy="453.7" r="4.2"/><circle cx="582.3" cy="450.6" r="4.2"/><circle cx="587.4" cy="452.6" r="4.2"/><circle cx="602.1" cy="455.7" r="4.2"/><circle cx="617.1" cy="463.0" r="4.2"/><circle cx="578.4" cy="471.2" r="4.2"/><circle cx="599.5" cy="486.7" r="4.2"/><circle cx="590.0" cy="506.1" r="4.2"/><circle cx="630.3" cy="352.0" r="4.2"/><circle cx="678.1" cy="363.6" r="4.2"/><circle cx="620.0" cy="376.3" r="4.2"/><circle cx="702.6" cy="371.9" r="4.2"/><circle cx="674.2" cy="375.7" r="4.2"/><circle cx="681.9" cy="382.2" r="4.2"/><circle cx="689.2" cy="385.3" r="4.2"/><circle cx="710.3" cy="379.6" r="4.2"/><circle cx="705.2" cy="383.5" r="4.2"/><circle cx="701.3" cy="388.6" r="4.2"/><circle cx="702.6" cy="393.8" r="4.2"/><circle cx="674.2" cy="395.9" r="4.2"/><circle cx="694.1" cy="402.1" r="4.2"/><circle cx="638.8" cy="404.6" r="4.2"/><circle cx="678.1" cy="411.4" r="4.2"/><circle cx="687.1" cy="411.4" r="4.2"/><circle cx="692.3" cy="411.4" r="4.2"/><circle cx="623.9" cy="420.4" r="4.2"/><circle cx="631.6" cy="427.4" r="4.2"/><circle cx="660.0" cy="427.4" r="4.2"/><circle cx="652.8" cy="435.1" r="4.2"/><circle cx="667.7" cy="419.6" r="4.2"/><circle cx="674.2" cy="418.3" r="4.2"/><circle cx="680.6" cy="419.6" r="4.2"/><circle cx="685.8" cy="422.2" r="4.2"/><circle cx="670.3" cy="426.1" r="4.2"/><circle cx="676.8" cy="427.4" r="4.2"/><circle cx="684.5" cy="428.6" r="4.2"/><circle cx="671.6" cy="432.5" r="4.2"/><circle cx="680.6" cy="433.8" r="4.2"/><circle cx="685.8" cy="435.1" r="4.2"/><circle cx="666.5" cy="439.0" r="4.2"/><circle cx="667.7" cy="445.4" r="4.2"/><circle cx="678.1" cy="446.7" r="4.2"/><circle cx="685.8" cy="444.1" r="4.2"/><circle cx="672.9" cy="451.9" r="4.2"/><circle cx="676.8" cy="457.0" r="4.2"/><circle cx="691.0" cy="460.1" r="4.2"/><circle cx="661.3" cy="471.2" r="4.2"/><circle cx="670.3" cy="473.0" r="4.2"/><circle cx="651.0" cy="499.6" r="4.2"/><circle cx="674.2" cy="498.3" r="4.2"/><circle cx="629.0" cy="506.1" r="4.2"/><circle cx="620.0" cy="462.2" r="4.2"/><circle cx="691.0" cy="472.5" r="4.2"/><circle cx="696.1" cy="472.5" r="4.2"/><circle cx="689.7" cy="479.0" r="4.2"/><circle cx="697.4" cy="479.0" r="4.2"/><circle cx="702.6" cy="481.5" r="4.2"/><circle cx="692.3" cy="485.4" r="4.2"/><circle cx="700.0" cy="488.0" r="4.2"/><circle cx="707.7" cy="485.4" r="4.2"/><circle cx="714.2" cy="486.7" r="4.2"/><circle cx="719.4" cy="490.6" r="4.2"/><circle cx="710.3" cy="493.2" r="4.2"/><circle cx="718.1" cy="497.0" r="4.2"/><circle cx="705.2" cy="495.7" r="4.2"/><circle cx="697.4" cy="497.0" r="4.2"/><circle cx="692.3" cy="499.6" r="4.2"/><circle cx="700.0" cy="503.5" r="4.2"/><circle cx="710.3" cy="503.5" r="4.2"/><circle cx="590.0" cy="508.3" r="4.2"/><circle cx="591.3" cy="514.8" r="4.2"/><circle cx="615.0" cy="517.4" r="4.2"/><circle cx="628.7" cy="505.7" r="4.2"/><circle cx="630.3" cy="505.7" r="4.2"/><circle cx="651.0" cy="499.3" r="4.2"/><circle cx="674.2" cy="499.3" r="4.2"/><circle cx="692.3" cy="500.6" r="4.2"/><circle cx="697.4" cy="504.5" r="4.2"/><circle cx="702.6" cy="508.3" r="4.2"/><circle cx="707.7" cy="503.2" r="4.2"/><circle cx="712.9" cy="500.6" r="4.2"/><circle cx="716.8" cy="498.0" r="4.2"/><circle cx="694.8" cy="512.2" r="4.2"/><circle cx="700.0" cy="514.8" r="4.2"/><circle cx="691.0" cy="516.1" r="4.2"/><circle cx="704.9" cy="384.2" r="4.2"/><circle cx="703.2" cy="387.2" r="4.2"/><circle cx="701.4" cy="390.2" r="4.2"/><circle cx="672.0" cy="421.3" r="4.2"/><circle cx="675.5" cy="421.3" r="4.2"/><circle cx="679.0" cy="421.3" r="4.2"/><circle cx="682.5" cy="421.3" r="4.2"/><circle cx="677.2" cy="424.4" r="4.2"/><circle cx="680.7" cy="424.4" r="4.2"/><circle cx="684.2" cy="424.4" r="4.2"/><circle cx="679.0" cy="427.4" r="4.2"/><circle cx="682.5" cy="427.4" r="4.2"/><circle cx="677.2" cy="430.4" r="4.2"/><circle cx="680.7" cy="430.4" r="4.2"/><circle cx="684.2" cy="430.4" r="4.2"/><circle cx="675.5" cy="433.4" r="4.2"/><circle cx="679.0" cy="433.4" r="4.2"/><circle cx="682.5" cy="433.4" r="4.2"/><circle cx="673.7" cy="436.5" r="4.2"/><circle cx="677.2" cy="436.5" r="4.2"/><circle cx="680.7" cy="436.5" r="4.2"/><circle cx="668.5" cy="439.5" r="4.2"/><circle cx="672.0" cy="439.5" r="4.2"/><circle cx="675.5" cy="439.5" r="4.2"/><circle cx="679.0" cy="439.5" r="4.2"/><circle cx="682.5" cy="439.5" r="4.2"/><circle cx="666.7" cy="442.5" r="4.2"/><circle cx="670.2" cy="442.5" r="4.2"/><circle cx="673.7" cy="442.5" r="4.2"/><circle cx="677.2" cy="442.5" r="4.2"/><circle cx="680.7" cy="442.5" r="4.2"/><circle cx="684.2" cy="442.5" r="4.2"/><circle cx="668.5" cy="445.6" r="4.2"/><circle cx="672.0" cy="445.6" r="4.2"/><circle cx="675.5" cy="445.6" r="4.2"/><circle cx="679.0" cy="445.6" r="4.2"/><circle cx="670.2" cy="448.6" r="4.2"/><circle cx="673.7" cy="448.6" r="4.2"/><circle cx="677.2" cy="448.6" r="4.2"/><circle cx="675.5" cy="451.6" r="4.2"/><circle cx="692.9" cy="474.9" r="4.2"/><circle cx="696.4" cy="474.9" r="4.2"/><circle cx="691.2" cy="478.0" r="4.2"/><circle cx="694.7" cy="478.0" r="4.2"/><circle cx="698.2" cy="478.0" r="4.2"/><circle cx="701.7" cy="478.0" r="4.2"/><circle cx="692.9" cy="481.0" r="4.2"/><circle cx="696.4" cy="481.0" r="4.2"/><circle cx="699.9" cy="481.0" r="4.2"/><circle cx="703.4" cy="481.0" r="4.2"/><circle cx="694.7" cy="484.0" r="4.2"/><circle cx="698.2" cy="484.0" r="4.2"/><circle cx="701.7" cy="484.0" r="4.2"/><circle cx="705.2" cy="484.0" r="4.2"/><circle cx="708.7" cy="484.0" r="4.2"/><circle cx="699.9" cy="487.0" r="4.2"/><circle cx="703.4" cy="487.0" r="4.2"/><circle cx="706.9" cy="487.0" r="4.2"/><circle cx="710.4" cy="487.0" r="4.2"/><circle cx="713.9" cy="487.0" r="4.2"/><circle cx="717.4" cy="487.0" r="4.2"/><circle cx="708.7" cy="490.1" r="4.2"/><circle cx="712.2" cy="490.1" r="4.2"/><circle cx="715.7" cy="490.1" r="4.2"/><circle cx="719.2" cy="490.1" r="4.2"/><circle cx="710.4" cy="493.1" r="4.2"/><circle cx="713.9" cy="493.1" r="4.2"/><circle cx="717.4" cy="493.1" r="4.2"/><circle cx="712.2" cy="496.1" r="4.2"/><circle cx="715.7" cy="496.1" r="4.2"/><circle cx="719.2" cy="496.1" r="4.2"/><circle cx="710.4" cy="499.2" r="4.2"/><circle cx="713.9" cy="499.2" r="4.2"/><circle cx="717.4" cy="499.2" r="4.2"/><circle cx="708.7" cy="502.2" r="4.2"/><circle cx="712.2" cy="502.2" r="4.2"/><circle cx="703.4" cy="505.2" r="4.2"/><circle cx="706.9" cy="505.2" r="4.2"/><circle cx="710.4" cy="505.2" r="4.2"/><circle cx="698.2" cy="508.3" r="4.2"/><circle cx="701.7" cy="508.3" r="4.2"/><circle cx="713.8" cy="495.9" r="4.2"/><circle cx="701.5" cy="498.9" r="4.2"/><circle cx="705.0" cy="498.9" r="4.2"/><circle cx="708.5" cy="498.9" r="4.2"/><circle cx="712.0" cy="498.9" r="4.2"/><circle cx="715.5" cy="498.9" r="4.2"/><circle cx="699.8" cy="502.0" r="4.2"/><circle cx="703.3" cy="502.0" r="4.2"/><circle cx="706.8" cy="502.0" r="4.2"/><circle cx="710.3" cy="502.0" r="4.2"/><circle cx="713.8" cy="502.0" r="4.2"/><circle cx="701.5" cy="505.0" r="4.2"/><circle cx="705.0" cy="505.0" r="4.2"/><circle cx="708.5" cy="505.0" r="4.2"/><circle cx="699.8" cy="508.0" r="4.2"/><circle cx="703.3" cy="508.0" r="4.2"/><circle cx="706.8" cy="508.0" r="4.2"/><circle cx="694.5" cy="511.1" r="4.2"/><circle cx="698.0" cy="511.1" r="4.2"/><circle cx="701.5" cy="511.1" r="4.2"/><circle cx="678.0" cy="410.5" r="4.2"/><circle cx="687.5" cy="411.3" r="4.2"/><circle cx="693.8" cy="411.3" r="4.2"/><circle cx="694.3" cy="401.5" r="4.2"/><circle cx="659.9" cy="427.9" r="4.2"/><circle cx="652.8" cy="435.0" r="4.2"/><circle cx="660.7" cy="470.4" r="4.2"/><circle cx="662.3" cy="468.9" r="4.2"/><circle cx="690.6" cy="499.6" r="4.2"/><circle cx="696.2" cy="497.2" r="4.2"/></g>
<g fill="#111"><circle cx="255.5" cy="585.7" r="5.15"/><circle cx="241.8" cy="596.8" r="5.15"/><circle cx="197.4" cy="628.3" r="5.15"/><circle cx="201.3" cy="630.9" r="5.15"/><circle cx="206.5" cy="627.0" r="5.15"/><circle cx="210.3" cy="624.5" r="5.15"/><circle cx="228.4" cy="623.7" r="5.15"/><circle cx="281.8" cy="634.8" r="5.15"/><circle cx="308.4" cy="630.9" r="5.15"/><circle cx="298.1" cy="676.8" r="5.15"/><circle cx="305.8" cy="701.9" r="5.15"/><circle cx="283.9" cy="599.9" r="5.15"/><circle cx="289.0" cy="596.1" r="5.15"/><circle cx="295.5" cy="595.5" r="5.15"/><circle cx="282.6" cy="614.1" r="5.15"/><circle cx="287.7" cy="612.8" r="5.15"/><circle cx="292.9" cy="609.0" r="5.15"/><circle cx="296.8" cy="606.4" r="5.15"/><circle cx="300.6" cy="611.5" r="5.15"/><circle cx="295.5" cy="616.7" r="5.15"/><circle cx="299.4" cy="620.6" r="5.15"/><circle cx="305.8" cy="615.4" r="5.15"/><circle cx="311.0" cy="612.8" r="5.15"/><circle cx="318.7" cy="605.1" r="5.15"/><circle cx="291.6" cy="603.8" r="5.15"/><circle cx="287.7" cy="606.4" r="5.15"/><circle cx="263.2" cy="669.6" r="5.15"/><circle cx="269.7" cy="664.5" r="5.15"/><circle cx="268.4" cy="678.6" r="5.15"/><circle cx="272.3" cy="683.8" r="5.15"/><circle cx="276.1" cy="689.0" r="5.15"/><circle cx="280.0" cy="694.1" r="5.15"/><circle cx="282.6" cy="700.6" r="5.15"/><circle cx="286.5" cy="707.0" r="5.15"/><circle cx="290.3" cy="712.2" r="5.15"/><circle cx="295.5" cy="716.1" r="5.15"/><circle cx="300.6" cy="719.9" r="5.15"/><circle cx="320.0" cy="730.3" r="5.15"/><circle cx="285.2" cy="669.6" r="5.15"/><circle cx="333.2" cy="596.8" r="5.15"/><circle cx="319.0" cy="605.9" r="5.15"/><circle cx="335.0" cy="617.5" r="5.15"/><circle cx="312.6" cy="612.8" r="5.15"/><circle cx="310.0" cy="630.9" r="5.15"/><circle cx="333.7" cy="652.8" r="5.15"/><circle cx="344.8" cy="651.5" r="5.15"/><circle cx="350.0" cy="658.0" r="5.15"/><circle cx="335.8" cy="668.3" r="5.15"/><circle cx="343.5" cy="668.3" r="5.15"/><circle cx="351.3" cy="668.3" r="5.15"/><circle cx="331.9" cy="673.5" r="5.15"/><circle cx="331.2" cy="694.9" r="5.15"/><circle cx="344.8" cy="685.1" r="5.15"/><circle cx="342.3" cy="690.3" r="5.15"/><circle cx="348.7" cy="694.1" r="5.15"/><circle cx="355.2" cy="691.5" r="5.15"/><circle cx="360.3" cy="689.0" r="5.15"/><circle cx="364.2" cy="690.3" r="5.15"/><circle cx="350.0" cy="699.3" r="5.15"/><circle cx="346.1" cy="700.6" r="5.15"/><circle cx="335.8" cy="714.8" r="5.15"/><circle cx="337.1" cy="719.9" r="5.15"/><circle cx="331.9" cy="719.9" r="5.15"/><circle cx="320.8" cy="731.5" r="5.15"/><circle cx="296.9" cy="606.6" r="5.15"/><circle cx="295.1" cy="609.6" r="5.15"/><circle cx="298.6" cy="609.6" r="5.15"/><circle cx="286.4" cy="612.6" r="5.15"/><circle cx="289.9" cy="612.6" r="5.15"/><circle cx="293.4" cy="612.6" r="5.15"/><circle cx="296.9" cy="612.6" r="5.15"/><circle cx="300.4" cy="612.6" r="5.15"/><circle cx="303.9" cy="612.6" r="5.15"/><circle cx="284.6" cy="615.7" r="5.15"/><circle cx="288.1" cy="615.7" r="5.15"/><circle cx="291.6" cy="615.7" r="5.15"/><circle cx="295.1" cy="615.7" r="5.15"/><circle cx="298.6" cy="615.7" r="5.15"/><circle cx="302.1" cy="615.7" r="5.15"/><circle cx="305.6" cy="615.7" r="5.15"/><circle cx="309.1" cy="615.7" r="5.15"/><circle cx="296.9" cy="618.7" r="5.15"/><circle cx="300.4" cy="618.7" r="5.15"/><circle cx="303.9" cy="618.7" r="5.15"/><circle cx="298.6" cy="621.7" r="5.15"/><circle cx="266.8" cy="666.9" r="5.15"/><circle cx="270.3" cy="666.9" r="5.15"/><circle cx="265.1" cy="669.9" r="5.15"/><circle cx="268.6" cy="669.9" r="5.15"/><circle cx="272.1" cy="669.9" r="5.15"/><circle cx="275.6" cy="669.9" r="5.15"/><circle cx="279.1" cy="669.9" r="5.15"/><circle cx="266.8" cy="673.0" r="5.15"/><circle cx="270.3" cy="673.0" r="5.15"/><circle cx="273.8" cy="673.0" r="5.15"/><circle cx="277.3" cy="673.0" r="5.15"/><circle cx="280.8" cy="673.0" r="5.15"/><circle cx="284.3" cy="673.0" r="5.15"/><circle cx="268.6" cy="676.0" r="5.15"/><circle cx="272.1" cy="676.0" r="5.15"/><circle cx="275.6" cy="676.0" r="5.15"/><circle cx="279.1" cy="676.0" r="5.15"/><circle cx="270.3" cy="679.0" r="5.15"/><circle cx="273.8" cy="679.0" r="5.15"/><circle cx="277.3" cy="679.0" r="5.15"/><circle cx="280.8" cy="679.0" r="5.15"/><circle cx="272.1" cy="682.0" r="5.15"/><circle cx="275.6" cy="682.0" r="5.15"/><circle cx="279.1" cy="682.0" r="5.15"/><circle cx="273.8" cy="685.1" r="5.15"/><circle cx="277.3" cy="685.1" r="5.15"/><circle cx="280.8" cy="685.1" r="5.15"/><circle cx="275.6" cy="688.1" r="5.15"/><circle cx="279.1" cy="688.1" r="5.15"/><circle cx="282.6" cy="688.1" r="5.15"/><circle cx="280.8" cy="691.1" r="5.15"/><circle cx="282.6" cy="694.2" r="5.15"/><circle cx="284.3" cy="697.2" r="5.15"/><circle cx="286.1" cy="700.2" r="5.15"/><circle cx="287.8" cy="703.3" r="5.15"/><circle cx="289.6" cy="706.3" r="5.15"/><circle cx="287.8" cy="709.3" r="5.15"/><circle cx="291.3" cy="709.3" r="5.15"/><circle cx="289.6" cy="712.4" r="5.15"/><circle cx="293.1" cy="712.4" r="5.15"/><circle cx="294.8" cy="715.4" r="5.15"/><circle cx="298.3" cy="715.4" r="5.15"/><circle cx="300.1" cy="718.4" r="5.15"/><circle cx="344.9" cy="688.2" r="5.15"/><circle cx="358.9" cy="688.2" r="5.15"/><circle cx="343.2" cy="691.2" r="5.15"/><circle cx="346.7" cy="691.2" r="5.15"/><circle cx="350.2" cy="691.2" r="5.15"/><circle cx="353.7" cy="691.2" r="5.15"/><circle cx="357.2" cy="691.2" r="5.15"/><circle cx="360.7" cy="691.2" r="5.15"/><circle cx="344.9" cy="694.2" r="5.15"/><circle cx="348.4" cy="694.2" r="5.15"/><circle cx="351.9" cy="694.2" r="5.15"/><circle cx="346.7" cy="697.3" r="5.15"/><circle cx="350.2" cy="697.3" r="5.15"/><circle cx="283.8" cy="599.6" r="5.15"/><circle cx="288.2" cy="596.1" r="5.15"/><circle cx="296.2" cy="595.2" r="5.15"/><circle cx="318.4" cy="605.8" r="5.15"/><circle cx="196.9" cy="627.1" r="5.15"/><circle cx="201.3" cy="629.8" r="5.15"/><circle cx="206.6" cy="626.2" r="5.15"/><circle cx="211.1" cy="623.6" r="5.15"/><circle cx="208.4" cy="628.0" r="5.15"/><circle cx="333.5" cy="652.8" r="5.15"/><circle cx="345.0" cy="651.1" r="5.15"/><circle cx="350.3" cy="657.3" r="5.15"/><circle cx="336.1" cy="666.2" r="5.15"/><circle cx="331.7" cy="673.2" r="5.15"/><circle cx="336.1" cy="672.4" r="5.15"/><circle cx="343.2" cy="668.8" r="5.15"/><circle cx="350.3" cy="668.8" r="5.15"/><circle cx="332.6" cy="720.3" r="5.15"/><circle cx="336.1" cy="714.1" r="5.15"/><circle cx="339.7" cy="718.5" r="5.15"/><circle cx="330.8" cy="694.5" r="5.15"/><circle cx="321.1" cy="730.6" r="5.15"/></g>
<g fill="#ffff66"><circle cx="255.5" cy="585.7" r="4.2"/><circle cx="241.8" cy="596.8" r="4.2"/><circle cx="197.4" cy="628.3" r="4.2"/><circle cx="201.3" cy="630.9" r="4.2"/><circle cx="206.5" cy="627.0" r="4.2"/><circle cx="210.3" cy="624.5" r="4.2"/><circle cx="228.4" cy="623.7" r="4.2"/><circle cx="281.8" cy="634.8" r="4.2"/><circle cx="308.4" cy="630.9" r="4.2"/><circle cx="298.1" cy="676.8" r="4.2"/><circle cx="305.8" cy="701.9" r="4.2"/><circle cx="283.9" cy="599.9" r="4.2"/><circle cx="289.0" cy="596.1" r="4.2"/><circle cx="295.5" cy="595.5" r="4.2"/><circle cx="282.6" cy="614.1" r="4.2"/><circle cx="287.7" cy="612.8" r="4.2"/><circle cx="292.9" cy="609.0" r="4.2"/><circle cx="296.8" cy="606.4" r="4.2"/><circle cx="300.6" cy="611.5" r="4.2"/><circle cx="295.5" cy="616.7" r="4.2"/><circle cx="299.4" cy="620.6" r="4.2"/><circle cx="305.8" cy="615.4" r="4.2"/><circle cx="311.0" cy="612.8" r="4.2"/><circle cx="318.7" cy="605.1" r="4.2"/><circle cx="291.6" cy="603.8" r="4.2"/><circle cx="287.7" cy="606.4" r="4.2"/><circle cx="263.2" cy="669.6" r="4.2"/><circle cx="269.7" cy="664.5" r="4.2"/><circle cx="268.4" cy="678.6" r="4.2"/><circle cx="272.3" cy="683.8" r="4.2"/><circle cx="276.1" cy="689.0" r="4.2"/><circle cx="280.0" cy="694.1" r="4.2"/><circle cx="282.6" cy="700.6" r="4.2"/><circle cx="286.5" cy="707.0" r="4.2"/><circle cx="290.3" cy="712.2" r="4.2"/><circle cx="295.5" cy="716.1" r="4.2"/><circle cx="300.6" cy="719.9" r="4.2"/><circle cx="320.0" cy="730.3" r="4.2"/><circle cx="285.2" cy="669.6" r="4.2"/><circle cx="333.2" cy="596.8" r="4.2"/><circle cx="319.0" cy="605.9" r="4.2"/><circle cx="335.0" cy="617.5" r="4.2"/><circle cx="312.6" cy="612.8" r="4.2"/><circle cx="310.0" cy="630.9" r="4.2"/><circle cx="333.7" cy="652.8" r="4.2"/><circle cx="344.8" cy="651.5" r="4.2"/><circle cx="350.0" cy="658.0" r="4.2"/><circle cx="335.8" cy="668.3" r="4.2"/><circle cx="343.5" cy="668.3" r="4.2"/><circle cx="351.3" cy="668.3" r="4.2"/><circle cx="331.9" cy="673.5" r="4.2"/><circle cx="331.2" cy="694.9" r="4.2"/><circle cx="344.8" cy="685.1" r="4.2"/><circle cx="342.3" cy="690.3" r="4.2"/><circle cx="348.7" cy="694.1" r="4.2"/><circle cx="355.2" cy="691.5" r="4.2"/><circle cx="360.3" cy="689.0" r="4.2"/><circle cx="364.2" cy="690.3" r="4.2"/><circle cx="350.0" cy="699.3" r="4.2"/><circle cx="346.1" cy="700.6" r="4.2"/><circle cx="335.8" cy="714.8" r="4.2"/><circle cx="337.1" cy="719.9" r="4.2"/><circle cx="331.9" cy="719.9" r="4.2"/><circle cx="320.8" cy="731.5" r="4.2"/><circle cx="296.9" cy="606.6" r="4.2"/><circle cx="295.1" cy="609.6" r="4.2"/><circle cx="298.6" cy="609.6" r="4.2"/><circle cx="286.4" cy="612.6" r="4.2"/><circle cx="289.9" cy="612.6" r="4.2"/><circle cx="293.4" cy="612.6" r="4.2"/><circle cx="296.9" cy="612.6" r="4.2"/><circle cx="300.4" cy="612.6" r="4.2"/><circle cx="303.9" cy="612.6" r="4.2"/><circle cx="284.6" cy="615.7" r="4.2"/><circle cx="288.1" cy="615.7" r="4.2"/><circle cx="291.6" cy="615.7" r="4.2"/><circle cx="295.1" cy="615.7" r="4.2"/><circle cx="298.6" cy="615.7" r="4.2"/><circle cx="302.1" cy="615.7" r="4.2"/><circle cx="305.6" cy="615.7" r="4.2"/><circle cx="309.1" cy="615.7" r="4.2"/><circle cx="296.9" cy="618.7" r="4.2"/><circle cx="300.4" cy="618.7" r="4.2"/><circle cx="303.9" cy="618.7" r="4.2"/><circle cx="298.6" cy="621.7" r="4.2"/><circle cx="266.8" cy="666.9" r="4.2"/><circle cx="270.3" cy="666.9" r="4.2"/><circle cx="265.1" cy="669.9" r="4.2"/><circle cx="268.6" cy="669.9" r="4.2"/><circle cx="272.1" cy="669.9" r="4.2"/><circle cx="275.6" cy="669.9" r="4.2"/><circle cx="279.1" cy="669.9" r="4.2"/><circle cx="266.8" cy="673.0" r="4.2"/><circle cx="270.3" cy="673.0" r="4.2"/><circle cx="273.8" cy="673.0" r="4.2"/><circle cx="277.3" cy="673.0" r="4.2"/><circle cx="280.8" cy="673.0" r="4.2"/><circle cx="284.3" cy="673.0" r="4.2"/><circle cx="268.6" cy="676.0" r="4.2"/><circle cx="272.1" cy="676.0" r="4.2"/><circle cx="275.6" cy="676.0" r="4.2"/><circle cx="279.1" cy="676.0" r="4.2"/><circle cx="270.3" cy="679.0" r="4.2"/><circle cx="273.8" cy="679.0" r="4.2"/><circle cx="277.3" cy="679.0" r="4.2"/><circle cx="280.8" cy="679.0" r="4.2"/><circle cx="272.1" cy="682.0" r="4.2"/><circle cx="275.6" cy="682.0" r="4.2"/><circle cx="279.1" cy="682.0" r="4.2"/><circle cx="273.8" cy="685.1" r="4.2"/><circle cx="277.3" cy="685.1" r="4.2"/><circle cx="280.8" cy="685.1" r="4.2"/><circle cx="275.6" cy="688.1" r="4.2"/><circle cx="279.1" cy="688.1" r="4.2"/><circle cx="282.6" cy="688.1" r="4.2"/><circle cx="280.8" cy="691.1" r="4.2"/><circle cx="282.6" cy="694.2" r="4.2"/><circle cx="284.3" cy="697.2" r="4.2"/><circle cx="286.1" cy="700.2" r="4.2"/><circle cx="287.8" cy="703.3" r="4.2"/><circle cx="289.6" cy="706.3" r="4.2"/><circle cx="287.8" cy="709.3" r="4.2"/><circle cx="291.3" cy="709.3" r="4.2"/><circle cx="289.6" cy="712.4" r="4.2"/><circle cx="293.1" cy="712.4" r="4.2"/><circle cx="294.8" cy="715.4" r="4.2"/><circle cx="298.3" cy="715.4" r="4.2"/><circle cx="300.1" cy="718.4" r="4.2"/><circle cx="344.9" cy="688.2" r="4.2"/><circle cx="358.9" cy="688.2" r="4.2"/><circle cx="343.2" cy="691.2" r="4.2"/><circle cx="346.7" cy="691.2" r="4.2"/><circle cx="350.2" cy="691.2" r="4.2"/><circle cx="353.7" cy="691.2" r="4.2"/><circle cx="357.2" cy="691.2" r="4.2"/><circle cx="360.7" cy="691.2" r="4.2"/><circle cx="344.9" cy="694.2" r="4.2"/><circle cx="348.4" cy="694.2" r="4.2"/><circle cx="351.9" cy="694.2" r="4.2"/><circle cx="346.7" cy="697.3" r="4.2"/><circle cx="350.2" cy="697.3" r="4.2"/><circle cx="283.8" cy="599.6" r="4.2"/><circle cx="288.2" cy="596.1" r="4.2"/><circle cx="296.2" cy="595.2" r="4.2"/><circle cx="318.4" cy="605.8" r="4.2"/><circle cx="196.9" cy="627.1" r="4.2"/><circle cx="201.3" cy="629.8" r="4.2"/><circle cx="206.6" cy="626.2" r="4.2"/><circle cx="211.1" cy="623.6" r="4.2"/><circle cx="208.4" cy="628.0" r="4.2"/><circle cx="333.5" cy="652.8" r="4.2"/><circle cx="345.0" cy="651.1" r="4.2"/><circle cx="350.3" cy="657.3" r="4.2"/><circle cx="336.1" cy="666.2" r="4.2"/><circle cx="331.7" cy="673.2" r="4.2"/><circle cx="336.1" cy="672.4" r="4.2"/><circle cx="343.2" cy="668.8" r="4.2"/><circle cx="350.3" cy="668.8" r="4.2"/><circle cx="332.6" cy="720.3" r="4.2"/><circle cx="336.1" cy="714.1" r="4.2"/><circle cx="339.7" cy="718.5" r="4.2"/><circle cx="330.8" cy="694.5" r="4.2"/><circle cx="321.1" cy="730.6" r="4.2"/></g>
<g fill="#111"><circle cx="365.5" cy="584.5" r="5.15"/><circle cx="370.6" cy="587.0" r="5.15"/><circle cx="373.2" cy="588.3" r="5.15"/><circle cx="379.7" cy="596.1" r="5.15"/><circle cx="386.6" cy="595.5" r="5.15"/><circle cx="357.2" cy="599.4" r="5.15"/><circle cx="409.4" cy="592.7" r="5.15"/><circle cx="426.1" cy="595.5" r="5.15"/><circle cx="401.6" cy="604.6" r="5.15"/><circle cx="417.6" cy="608.5" r="5.15"/><circle cx="433.9" cy="583.2" r="5.15"/><circle cx="444.2" cy="576.7" r="5.15"/><circle cx="446.8" cy="580.6" r="5.15"/><circle cx="445.5" cy="588.3" r="5.15"/><circle cx="444.2" cy="594.8" r="5.15"/><circle cx="463.0" cy="591.4" r="5.15"/><circle cx="464.1" cy="611.5" r="5.15"/><circle cx="430.5" cy="618.0" r="5.15"/><circle cx="435.2" cy="624.5" r="5.15"/><circle cx="428.7" cy="628.3" r="5.15"/><circle cx="386.1" cy="635.5" r="5.15"/><circle cx="393.4" cy="644.6" r="5.15"/><circle cx="408.1" cy="643.8" r="5.15"/><circle cx="411.2" cy="653.6" r="5.15"/><circle cx="393.9" cy="661.1" r="5.15"/><circle cx="489.4" cy="615.4" r="5.15"/><circle cx="491.9" cy="620.6" r="5.15"/><circle cx="489.4" cy="630.9" r="5.15"/><circle cx="498.4" cy="630.9" r="5.15"/><circle cx="444.2" cy="627.0" r="5.15"/><circle cx="450.6" cy="632.2" r="5.15"/><circle cx="467.4" cy="632.2" r="5.15"/><circle cx="472.6" cy="637.4" r="5.15"/><circle cx="451.9" cy="645.1" r="5.15"/><circle cx="459.7" cy="642.5" r="5.15"/><circle cx="481.6" cy="645.1" r="5.15"/><circle cx="476.5" cy="649.0" r="5.15"/><circle cx="491.9" cy="647.2" r="5.15"/><circle cx="497.1" cy="649.0" r="5.15"/><circle cx="467.4" cy="654.1" r="5.15"/><circle cx="472.6" cy="652.8" r="5.15"/><circle cx="457.1" cy="659.3" r="5.15"/><circle cx="464.8" cy="665.7" r="5.15"/><circle cx="471.3" cy="670.9" r="5.15"/><circle cx="472.6" cy="673.5" r="5.15"/><circle cx="482.9" cy="667.5" r="5.15"/><circle cx="450.6" cy="668.3" r="5.15"/><circle cx="439.0" cy="668.3" r="5.15"/><circle cx="431.3" cy="667.0" r="5.15"/><circle cx="423.5" cy="665.7" r="5.15"/><circle cx="414.5" cy="669.6" r="5.15"/><circle cx="408.1" cy="669.6" r="5.15"/><circle cx="400.3" cy="669.6" r="5.15"/><circle cx="395.2" cy="676.1" r="5.15"/><circle cx="390.0" cy="681.2" r="5.15"/><circle cx="387.4" cy="686.4" r="5.15"/><circle cx="397.7" cy="678.6" r="5.15"/><circle cx="402.9" cy="673.5" r="5.15"/><circle cx="374.5" cy="689.0" r="5.15"/><circle cx="370.6" cy="686.9" r="5.15"/><circle cx="461.0" cy="663.2" r="5.15"/><circle cx="467.4" cy="661.9" r="5.15"/><circle cx="398.2" cy="671.0" r="5.15"/><circle cx="401.7" cy="671.0" r="5.15"/><circle cx="405.2" cy="671.0" r="5.15"/><circle cx="408.7" cy="671.0" r="5.15"/><circle cx="412.2" cy="671.0" r="5.15"/><circle cx="392.9" cy="674.0" r="5.15"/><circle cx="396.4" cy="674.0" r="5.15"/><circle cx="399.9" cy="674.0" r="5.15"/><circle cx="403.4" cy="674.0" r="5.15"/><circle cx="391.2" cy="677.1" r="5.15"/><circle cx="394.7" cy="677.1" r="5.15"/><circle cx="398.2" cy="677.1" r="5.15"/><circle cx="389.4" cy="680.1" r="5.15"/><circle cx="392.9" cy="680.1" r="5.15"/><circle cx="396.4" cy="680.1" r="5.15"/><circle cx="391.2" cy="683.1" r="5.15"/><circle cx="389.4" cy="686.2" r="5.15"/><circle cx="427.5" cy="668.6" r="5.15"/><circle cx="431.0" cy="668.6" r="5.15"/><circle cx="434.5" cy="668.6" r="5.15"/><circle cx="441.5" cy="668.6" r="5.15"/><circle cx="445.0" cy="668.6" r="5.15"/><circle cx="478.0" cy="648.4" r="5.15"/><circle cx="472.8" cy="651.4" r="5.15"/><circle cx="476.3" cy="651.4" r="5.15"/><circle cx="467.5" cy="654.5" r="5.15"/><circle cx="471.0" cy="654.5" r="5.15"/><circle cx="462.3" cy="657.5" r="5.15"/><circle cx="465.8" cy="657.5" r="5.15"/><circle cx="469.3" cy="657.5" r="5.15"/><circle cx="460.5" cy="660.5" r="5.15"/><circle cx="464.0" cy="660.5" r="5.15"/><circle cx="465.8" cy="669.6" r="5.15"/><circle cx="469.3" cy="669.6" r="5.15"/><circle cx="454.6" cy="625.8" r="5.15"/><circle cx="458.1" cy="625.8" r="5.15"/><circle cx="461.6" cy="625.8" r="5.15"/><circle cx="445.9" cy="628.9" r="5.15"/><circle cx="449.4" cy="628.9" r="5.15"/><circle cx="452.9" cy="628.9" r="5.15"/><circle cx="456.4" cy="628.9" r="5.15"/><circle cx="459.9" cy="628.9" r="5.15"/><circle cx="463.4" cy="628.9" r="5.15"/><circle cx="447.6" cy="631.9" r="5.15"/><circle cx="451.1" cy="631.9" r="5.15"/><circle cx="454.6" cy="631.9" r="5.15"/><circle cx="458.1" cy="631.9" r="5.15"/><circle cx="461.6" cy="631.9" r="5.15"/><circle cx="465.1" cy="631.9" r="5.15"/><circle cx="468.6" cy="631.9" r="5.15"/><circle cx="452.9" cy="634.9" r="5.15"/><circle cx="456.4" cy="634.9" r="5.15"/><circle cx="459.9" cy="634.9" r="5.15"/><circle cx="470.4" cy="634.9" r="5.15"/><circle cx="454.6" cy="638.0" r="5.15"/><circle cx="458.1" cy="638.0" r="5.15"/><circle cx="367.3" cy="585.9" r="5.15"/><circle cx="372.9" cy="587.5" r="5.15"/><circle cx="445.5" cy="578.6" r="5.15"/><circle cx="445.5" cy="589.1" r="5.15"/><circle cx="443.9" cy="595.6" r="5.15"/><circle cx="431.0" cy="618.2" r="5.15"/><circle cx="431.8" cy="624.6" r="5.15"/><circle cx="427.7" cy="629.5" r="5.15"/><circle cx="489.0" cy="615.7" r="5.15"/><circle cx="492.3" cy="620.6" r="5.15"/><circle cx="489.0" cy="631.1" r="5.15"/><circle cx="497.1" cy="631.9" r="5.15"/><circle cx="492.3" cy="647.2" r="5.15"/><circle cx="497.1" cy="649.6" r="5.15"/><circle cx="373.7" cy="688.3" r="5.15"/><circle cx="369.7" cy="685.9" r="5.15"/></g>
<g fill="#7d3f8c"><circle cx="365.5" cy="584.5" r="4.2"/><circle cx="370.6" cy="587.0" r="4.2"/><circle cx="373.2" cy="588.3" r="4.2"/><circle cx="379.7" cy="596.1" r="4.2"/><circle cx="386.6" cy="595.5" r="4.2"/><circle cx="357.2" cy="599.4" r="4.2"/><circle cx="409.4" cy="592.7" r="4.2"/><circle cx="426.1" cy="595.5" r="4.2"/><circle cx="401.6" cy="604.6" r="4.2"/><circle cx="417.6" cy="608.5" r="4.2"/><circle cx="433.9" cy="583.2" r="4.2"/><circle cx="444.2" cy="576.7" r="4.2"/><circle cx="446.8" cy="580.6" r="4.2"/><circle cx="445.5" cy="588.3" r="4.2"/><circle cx="444.2" cy="594.8" r="4.2"/><circle cx="463.0" cy="591.4" r="4.2"/><circle cx="464.1" cy="611.5" r="4.2"/><circle cx="430.5" cy="618.0" r="4.2"/><circle cx="435.2" cy="624.5" r="4.2"/><circle cx="428.7" cy="628.3" r="4.2"/><circle cx="386.1" cy="635.5" r="4.2"/><circle cx="393.4" cy="644.6" r="4.2"/><circle cx="408.1" cy="643.8" r="4.2"/><circle cx="411.2" cy="653.6" r="4.2"/><circle cx="393.9" cy="661.1" r="4.2"/><circle cx="489.4" cy="615.4" r="4.2"/><circle cx="491.9" cy="620.6" r="4.2"/><circle cx="489.4" cy="630.9" r="4.2"/><circle cx="498.4" cy="630.9" r="4.2"/><circle cx="444.2" cy="627.0" r="4.2"/><circle cx="450.6" cy="632.2" r="4.2"/><circle cx="467.4" cy="632.2" r="4.2"/><circle cx="472.6" cy="637.4" r="4.2"/><circle cx="451.9" cy="645.1" r="4.2"/><circle cx="459.7" cy="642.5" r="4.2"/><circle cx="481.6" cy="645.1" r="4.2"/><circle cx="476.5" cy="649.0" r="4.2"/><circle cx="491.9" cy="647.2" r="4.2"/><circle cx="497.1" cy="649.0" r="4.2"/><circle cx="467.4" cy="654.1" r="4.2"/><circle cx="472.6" cy="652.8" r="4.2"/><circle cx="457.1" cy="659.3" r="4.2"/><circle cx="464.8" cy="665.7" r="4.2"/><circle cx="471.3" cy="670.9" r="4.2"/><circle cx="472.6" cy="673.5" r="4.2"/><circle cx="482.9" cy="667.5" r="4.2"/><circle cx="450.6" cy="668.3" r="4.2"/><circle cx="439.0" cy="668.3" r="4.2"/><circle cx="431.3" cy="667.0" r="4.2"/><circle cx="423.5" cy="665.7" r="4.2"/><circle cx="414.5" cy="669.6" r="4.2"/><circle cx="408.1" cy="669.6" r="4.2"/><circle cx="400.3" cy="669.6" r="4.2"/><circle cx="395.2" cy="676.1" r="4.2"/><circle cx="390.0" cy="681.2" r="4.2"/><circle cx="387.4" cy="686.4" r="4.2"/><circle cx="397.7" cy="678.6" r="4.2"/><circle cx="402.9" cy="673.5" r="4.2"/><circle cx="374.5" cy="689.0" r="4.2"/><circle cx="370.6" cy="686.9" r="4.2"/><circle cx="461.0" cy="663.2" r="4.2"/><circle cx="467.4" cy="661.9" r="4.2"/><circle cx="398.2" cy="671.0" r="4.2"/><circle cx="401.7" cy="671.0" r="4.2"/><circle cx="405.2" cy="671.0" r="4.2"/><circle cx="408.7" cy="671.0" r="4.2"/><circle cx="412.2" cy="671.0" r="4.2"/><circle cx="392.9" cy="674.0" r="4.2"/><circle cx="396.4" cy="674.0" r="4.2"/><circle cx="399.9" cy="674.0" r="4.2"/><circle cx="403.4" cy="674.0" r="4.2"/><circle cx="391.2" cy="677.1" r="4.2"/><circle cx="394.7" cy="677.1" r="4.2"/><circle cx="398.2" cy="677.1" r="4.2"/><circle cx="389.4" cy="680.1" r="4.2"/><circle cx="392.9" cy="680.1" r="4.2"/><circle cx="396.4" cy="680.1" r="4.2"/><circle cx="391.2" cy="683.1" r="4.2"/><circle cx="389.4" cy="686.2" r="4.2"/><circle cx="427.5" cy="668.6" r="4.2"/><circle cx="431.0" cy="668.6" r="4.2"/><circle cx="434.5" cy="668.6" r="4.2"/><circle cx="441.5" cy="668.6" r="4.2"/><circle cx="445.0" cy="668.6" r="4.2"/><circle cx="478.0" cy="648.4" r="4.2"/><circle cx="472.8" cy="651.4" r="4.2"/><circle cx="476.3" cy="651.4" r="4.2"/><circle cx="467.5" cy="654.5" r="4.2"/><circle cx="471.0" cy="654.5" r="4.2"/><circle cx="462.3" cy="657.5" r="4.2"/><circle cx="465.8" cy="657.5" r="4.2"/><circle cx="469.3" cy="657.5" r="4.2"/><circle cx="460.5" cy="660.5" r="4.2"/><circle cx="464.0" cy="660.5" r="4.2"/><circle cx="465.8" cy="669.6" r="4.2"/><circle cx="469.3" cy="669.6" r="4.2"/><circle cx="454.6" cy="625.8" r="4.2"/><circle cx="458.1" cy="625.8" r="4.2"/><circle cx="461.6" cy="625.8" r="4.2"/><circle cx="445.9" cy="628.9" r="4.2"/><circle cx="449.4" cy="628.9" r="4.2"/><circle cx="452.9" cy="628.9" r="4.2"/><circle cx="456.4" cy="628.9" r="4.2"/><circle cx="459.9" cy="628.9" r="4.2"/><circle cx="463.4" cy="628.9" r="4.2"/><circle cx="447.6" cy="631.9" r="4.2"/><circle cx="451.1" cy="631.9" r="4.2"/><circle cx="454.6" cy="631.9" r="4.2"/><circle cx="458.1" cy="631.9" r="4.2"/><circle cx="461.6" cy="631.9" r="4.2"/><circle cx="465.1" cy="631.9" r="4.2"/><circle cx="468.6" cy="631.9" r="4.2"/><circle cx="452.9" cy="634.9" r="4.2"/><circle cx="456.4" cy="634.9" r="4.2"/><circle cx="459.9" cy="634.9" r="4.2"/><circle cx="470.4" cy="634.9" r="4.2"/><circle cx="454.6" cy="638.0" r="4.2"/><circle cx="458.1" cy="638.0" r="4.2"/><circle cx="367.3" cy="585.9" r="4.2"/><circle cx="372.9" cy="587.5" r="4.2"/><circle cx="445.5" cy="578.6" r="4.2"/><circle cx="445.5" cy="589.1" r="4.2"/><circle cx="443.9" cy="595.6" r="4.2"/><circle cx="431.0" cy="618.2" r="4.2"/><circle cx="431.8" cy="624.6" r="4.2"/><circle cx="427.7" cy="629.5" r="4.2"/><circle cx="489.0" cy="615.7" r="4.2"/><circle cx="492.3" cy="620.6" r="4.2"/><circle cx="489.0" cy="631.1" r="4.2"/><circle cx="497.1" cy="631.9" r="4.2"/><circle cx="492.3" cy="647.2" r="4.2"/><circle cx="497.1" cy="649.6" r="4.2"/><circle cx="373.7" cy="688.3" r="4.2"/><circle cx="369.7" cy="685.9" r="4.2"/></g>
<g fill="#111"><circle cx="531.2" cy="549.6" r="5.15"/><circle cx="577.1" cy="543.2" r="5.15"/><circle cx="582.3" cy="550.9" r="5.15"/><circle cx="587.4" cy="552.7" r="5.15"/><circle cx="592.1" cy="555.3" r="5.15"/><circle cx="558.3" cy="584.5" r="5.15"/><circle cx="590.0" cy="587.8" r="5.15"/><circle cx="626.1" cy="598.1" r="5.15"/><circle cx="555.9" cy="615.4" r="5.15"/><circle cx="584.1" cy="615.9" r="5.15"/><circle cx="539.2" cy="630.9" r="5.15"/><circle cx="578.4" cy="624.5" r="5.15"/><circle cx="583.5" cy="625.7" r="5.15"/><circle cx="577.1" cy="632.2" r="5.15"/><circle cx="582.3" cy="633.5" r="5.15"/><circle cx="577.1" cy="639.9" r="5.15"/><circle cx="562.4" cy="664.5" r="5.15"/><circle cx="499.7" cy="667.5" r="5.15"/><circle cx="515.2" cy="672.7" r="5.15"/><circle cx="528.1" cy="665.7" r="5.15"/><circle cx="531.9" cy="661.9" r="5.15"/><circle cx="537.1" cy="659.3" r="5.15"/><circle cx="539.7" cy="655.4" r="5.15"/><circle cx="618.4" cy="550.9" r="5.15"/><circle cx="623.5" cy="553.5" r="5.15"/><circle cx="628.7" cy="556.1" r="5.15"/><circle cx="621.0" cy="562.5" r="5.15"/><circle cx="626.1" cy="565.1" r="5.15"/><circle cx="630.0" cy="544.5" r="5.15"/><circle cx="623.5" cy="567.7" r="5.15"/><circle cx="652.3" cy="518.6" r="5.15"/><circle cx="653.5" cy="526.4" r="5.15"/><circle cx="656.1" cy="532.8" r="5.15"/><circle cx="681.9" cy="516.1" r="5.15"/><circle cx="680.6" cy="522.5" r="5.15"/><circle cx="676.8" cy="527.7" r="5.15"/><circle cx="671.6" cy="525.1" r="5.15"/><circle cx="669.0" cy="531.5" r="5.15"/><circle cx="674.2" cy="534.1" r="5.15"/><circle cx="663.9" cy="535.4" r="5.15"/><circle cx="658.7" cy="539.3" r="5.15"/><circle cx="670.3" cy="540.6" r="5.15"/><circle cx="643.2" cy="536.2" r="5.15"/><circle cx="634.2" cy="540.6" r="5.15"/><circle cx="629.0" cy="544.5" r="5.15"/><circle cx="652.3" cy="545.7" r="5.15"/><circle cx="658.7" cy="548.3" r="5.15"/><circle cx="663.9" cy="549.6" r="5.15"/><circle cx="651.0" cy="553.5" r="5.15"/><circle cx="657.4" cy="556.1" r="5.15"/><circle cx="662.6" cy="558.6" r="5.15"/><circle cx="641.9" cy="552.2" r="5.15"/><circle cx="635.5" cy="554.8" r="5.15"/><circle cx="627.7" cy="553.5" r="5.15"/><circle cx="621.3" cy="553.5" r="5.15"/><circle cx="626.5" cy="561.2" r="5.15"/><circle cx="632.9" cy="562.5" r="5.15"/><circle cx="621.3" cy="565.1" r="5.15"/><circle cx="649.7" cy="562.5" r="5.15"/><circle cx="656.1" cy="565.1" r="5.15"/><circle cx="660.0" cy="566.4" r="5.15"/><circle cx="651.0" cy="570.3" r="5.15"/><circle cx="654.8" cy="572.8" r="5.15"/><circle cx="649.2" cy="581.9" r="5.15"/><circle cx="636.8" cy="589.6" r="5.15"/><circle cx="639.4" cy="594.8" r="5.15"/><circle cx="653.5" cy="592.2" r="5.15"/><circle cx="660.0" cy="592.2" r="5.15"/><circle cx="626.5" cy="598.1" r="5.15"/><circle cx="678.0" cy="521.8" r="5.15"/><circle cx="676.3" cy="524.8" r="5.15"/><circle cx="671.0" cy="527.9" r="5.15"/><circle cx="674.5" cy="527.9" r="5.15"/><circle cx="678.0" cy="527.9" r="5.15"/><circle cx="655.3" cy="530.9" r="5.15"/><circle cx="669.3" cy="530.9" r="5.15"/><circle cx="672.8" cy="530.9" r="5.15"/><circle cx="676.3" cy="530.9" r="5.15"/><circle cx="657.0" cy="533.9" r="5.15"/><circle cx="660.5" cy="533.9" r="5.15"/><circle cx="667.5" cy="533.9" r="5.15"/><circle cx="671.0" cy="533.9" r="5.15"/><circle cx="674.5" cy="533.9" r="5.15"/><circle cx="658.8" cy="537.0" r="5.15"/><circle cx="665.8" cy="537.0" r="5.15"/><circle cx="669.3" cy="537.0" r="5.15"/><circle cx="667.5" cy="540.0" r="5.15"/><circle cx="652.9" cy="547.1" r="5.15"/><circle cx="656.4" cy="547.1" r="5.15"/><circle cx="651.2" cy="550.2" r="5.15"/><circle cx="654.7" cy="550.2" r="5.15"/><circle cx="658.2" cy="550.2" r="5.15"/><circle cx="652.9" cy="553.2" r="5.15"/><circle cx="656.4" cy="553.2" r="5.15"/><circle cx="659.9" cy="553.2" r="5.15"/><circle cx="654.7" cy="556.2" r="5.15"/><circle cx="658.2" cy="556.2" r="5.15"/><circle cx="661.7" cy="556.2" r="5.15"/><circle cx="652.9" cy="559.3" r="5.15"/><circle cx="656.4" cy="559.3" r="5.15"/><circle cx="659.9" cy="559.3" r="5.15"/><circle cx="651.2" cy="562.3" r="5.15"/><circle cx="654.7" cy="562.3" r="5.15"/><circle cx="658.2" cy="562.3" r="5.15"/><circle cx="652.9" cy="565.3" r="5.15"/><circle cx="656.4" cy="565.3" r="5.15"/><circle cx="651.2" cy="568.4" r="5.15"/><circle cx="654.7" cy="568.4" r="5.15"/><circle cx="652.9" cy="571.4" r="5.15"/><circle cx="638.9" cy="538.5" r="5.15"/><circle cx="631.9" cy="544.5" r="5.15"/><circle cx="635.4" cy="544.5" r="5.15"/><circle cx="630.1" cy="547.6" r="5.15"/><circle cx="633.6" cy="547.6" r="5.15"/><circle cx="624.9" cy="550.6" r="5.15"/><circle cx="628.4" cy="550.6" r="5.15"/><circle cx="631.9" cy="550.6" r="5.15"/><circle cx="635.4" cy="550.6" r="5.15"/><circle cx="638.9" cy="550.6" r="5.15"/><circle cx="623.1" cy="553.6" r="5.15"/><circle cx="626.6" cy="553.6" r="5.15"/><circle cx="630.1" cy="553.6" r="5.15"/><circle cx="633.6" cy="553.6" r="5.15"/><circle cx="637.1" cy="553.6" r="5.15"/><circle cx="640.6" cy="553.6" r="5.15"/><circle cx="624.9" cy="556.7" r="5.15"/><circle cx="628.4" cy="556.7" r="5.15"/><circle cx="631.9" cy="556.7" r="5.15"/><circle cx="635.4" cy="556.7" r="5.15"/><circle cx="626.6" cy="559.7" r="5.15"/><circle cx="630.1" cy="559.7" r="5.15"/><circle cx="633.6" cy="559.7" r="5.15"/><circle cx="624.9" cy="562.7" r="5.15"/><circle cx="628.4" cy="562.7" r="5.15"/><circle cx="631.9" cy="562.7" r="5.15"/><circle cx="623.1" cy="565.7" r="5.15"/><circle cx="626.6" cy="565.7" r="5.15"/><circle cx="580.4" cy="628.3" r="5.15"/><circle cx="583.9" cy="628.3" r="5.15"/><circle cx="578.6" cy="631.3" r="5.15"/><circle cx="582.1" cy="631.3" r="5.15"/><circle cx="580.4" cy="634.4" r="5.15"/><circle cx="578.6" cy="637.4" r="5.15"/><circle cx="649.1" cy="581.7" r="5.15"/><circle cx="636.5" cy="589.2" r="5.15"/><circle cx="640.4" cy="593.9" r="5.15"/><circle cx="653.0" cy="592.3" r="5.15"/><circle cx="659.3" cy="591.5" r="5.15"/><circle cx="626.2" cy="598.3" r="5.15"/><circle cx="583.6" cy="616.0" r="5.15"/></g>
<g fill="#377eb8"><circle cx="531.2" cy="549.6" r="4.2"/><circle cx="577.1" cy="543.2" r="4.2"/><circle cx="582.3" cy="550.9" r="4.2"/><circle cx="587.4" cy="552.7" r="4.2"/><circle cx="592.1" cy="555.3" r="4.2"/><circle cx="558.3" cy="584.5" r="4.2"/><circle cx="590.0" cy="587.8" r="4.2"/><circle cx="626.1" cy="598.1" r="4.2"/><circle cx="555.9" cy="615.4" r="4.2"/><circle cx="584.1" cy="615.9" r="4.2"/><circle cx="539.2" cy="630.9" r="4.2"/><circle cx="578.4" cy="624.5" r="4.2"/><circle cx="583.5" cy="625.7" r="4.2"/><circle cx="577.1" cy="632.2" r="4.2"/><circle cx="582.3" cy="633.5" r="4.2"/><circle cx="577.1" cy="639.9" r="4.2"/><circle cx="562.4" cy="664.5" r="4.2"/><circle cx="499.7" cy="667.5" r="4.2"/><circle cx="515.2" cy="672.7" r="4.2"/><circle cx="528.1" cy="665.7" r="4.2"/><circle cx="531.9" cy="661.9" r="4.2"/><circle cx="537.1" cy="659.3" r="4.2"/><circle cx="539.7" cy="655.4" r="4.2"/><circle cx="618.4" cy="550.9" r="4.2"/><circle cx="623.5" cy="553.5" r="4.2"/><circle cx="628.7" cy="556.1" r="4.2"/><circle cx="621.0" cy="562.5" r="4.2"/><circle cx="626.1" cy="565.1" r="4.2"/><circle cx="630.0" cy="544.5" r="4.2"/><circle cx="623.5" cy="567.7" r="4.2"/><circle cx="652.3" cy="518.6" r="4.2"/><circle cx="653.5" cy="526.4" r="4.2"/><circle cx="656.1" cy="532.8" r="4.2"/><circle cx="681.9" cy="516.1" r="4.2"/><circle cx="680.6" cy="522.5" r="4.2"/><circle cx="676.8" cy="527.7" r="4.2"/><circle cx="671.6" cy="525.1" r="4.2"/><circle cx="669.0" cy="531.5" r="4.2"/><circle cx="674.2" cy="534.1" r="4.2"/><circle cx="663.9" cy="535.4" r="4.2"/><circle cx="658.7" cy="539.3" r="4.2"/><circle cx="670.3" cy="540.6" r="4.2"/><circle cx="643.2" cy="536.2" r="4.2"/><circle cx="634.2" cy="540.6" r="4.2"/><circle cx="629.0" cy="544.5" r="4.2"/><circle cx="652.3" cy="545.7" r="4.2"/><circle cx="658.7" cy="548.3" r="4.2"/><circle cx="663.9" cy="549.6" r="4.2"/><circle cx="651.0" cy="553.5" r="4.2"/><circle cx="657.4" cy="556.1" r="4.2"/><circle cx="662.6" cy="558.6" r="4.2"/><circle cx="641.9" cy="552.2" r="4.2"/><circle cx="635.5" cy="554.8" r="4.2"/><circle cx="627.7" cy="553.5" r="4.2"/><circle cx="621.3" cy="553.5" r="4.2"/><circle cx="626.5" cy="561.2" r="4.2"/><circle cx="632.9" cy="562.5" r="4.2"/><circle cx="621.3" cy="565.1" r="4.2"/><circle cx="649.7" cy="562.5" r="4.2"/><circle cx="656.1" cy="565.1" r="4.2"/><circle cx="660.0" cy="566.4" r="4.2"/><circle cx="651.0" cy="570.3" r="4.2"/><circle cx="654.8" cy="572.8" r="4.2"/><circle cx="649.2" cy="581.9" r="4.2"/><circle cx="636.8" cy="589.6" r="4.2"/><circle cx="639.4" cy="594.8" r="4.2"/><circle cx="653.5" cy="592.2" r="4.2"/><circle cx="660.0" cy="592.2" r="4.2"/><circle cx="626.5" cy="598.1" r="4.2"/><circle cx="678.0" cy="521.8" r="4.2"/><circle cx="676.3" cy="524.8" r="4.2"/><circle cx="671.0" cy="527.9" r="4.2"/><circle cx="674.5" cy="527.9" r="4.2"/><circle cx="678.0" cy="527.9" r="4.2"/><circle cx="655.3" cy="530.9" r="4.2"/><circle cx="669.3" cy="530.9" r="4.2"/><circle cx="672.8" cy="530.9" r="4.2"/><circle cx="676.3" cy="530.9" r="4.2"/><circle cx="657.0" cy="533.9" r="4.2"/><circle cx="660.5" cy="533.9" r="4.2"/><circle cx="667.5" cy="533.9" r="4.2"/><circle cx="671.0" cy="533.9" r="4.2"/><circle cx="674.5" cy="533.9" r="4.2"/><circle cx="658.8" cy="537.0" r="4.2"/><circle cx="665.8" cy="537.0" r="4.2"/><circle cx="669.3" cy="537.0" r="4.2"/><circle cx="667.5" cy="540.0" r="4.2"/><circle cx="652.9" cy="547.1" r="4.2"/><circle cx="656.4" cy="547.1" r="4.2"/><circle cx="651.2" cy="550.2" r="4.2"/><circle cx="654.7" cy="550.2" r="4.2"/><circle cx="658.2" cy="550.2" r="4.2"/><circle cx="652.9" cy="553.2" r="4.2"/><circle cx="656.4" cy="553.2" r="4.2"/><circle cx="659.9" cy="553.2" r="4.2"/><circle cx="654.7" cy="556.2" r="4.2"/><circle cx="658.2" cy="556.2" r="4.2"/><circle cx="661.7" cy="556.2" r="4.2"/><circle cx="652.9" cy="559.3" r="4.2"/><circle cx="656.4" cy="559.3" r="4.2"/><circle cx="659.9" cy="559.3" r="4.2"/><circle cx="651.2" cy="562.3" r="4.2"/><circle cx="654.7" cy="562.3" r="4.2"/><circle cx="658.2" cy="562.3" r="4.2"/><circle cx="652.9" cy="565.3" r="4.2"/><circle cx="656.4" cy="565.3" r="4.2"/><circle cx="651.2" cy="568.4" r="4.2"/><circle cx="654.7" cy="568.4" r="4.2"/><circle cx="652.9" cy="571.4" r="4.2"/><circle cx="638.9" cy="538.5" r="4.2"/><circle cx="631.9" cy="544.5" r="4.2"/><circle cx="635.4" cy="544.5" r="4.2"/><circle cx="630.1" cy="547.6" r="4.2"/><circle cx="633.6" cy="547.6" r="4.2"/><circle cx="624.9" cy="550.6" r="4.2"/><circle cx="628.4" cy="550.6" r="4.2"/><circle cx="631.9" cy="550.6" r="4.2"/><circle cx="635.4" cy="550.6" r="4.2"/><circle cx="638.9" cy="550.6" r="4.2"/><circle cx="623.1" cy="553.6" r="4.2"/><circle cx="626.6" cy="553.6" r="4.2"/><circle cx="630.1" cy="553.6" r="4.2"/><circle cx="633.6" cy="553.6" r="4.2"/><circle cx="637.1" cy="553.6" r="4.2"/><circle cx="640.6" cy="553.6" r="4.2"/><circle cx="624.9" cy="556.7" r="4.2"/><circle cx="628.4" cy="556.7" r="4.2"/><circle cx="631.9" cy="556.7" r="4.2"/><circle cx="635.4" cy="556.7" r="4.2"/><circle cx="626.6" cy="559.7" r="4.2"/><circle cx="630.1" cy="559.7" r="4.2"/><circle cx="633.6" cy="559.7" r="4.2"/><circle cx="624.9" cy="562.7" r="4.2"/><circle cx="628.4" cy="562.7" r="4.2"/><circle cx="631.9" cy="562.7" r="4.2"/><circle cx="623.1" cy="565.7" r="4.2"/><circle cx="626.6" cy="565.7" r="4.2"/><circle cx="580.4" cy="628.3" r="4.2"/><circle cx="583.9" cy="628.3" r="4.2"/><circle cx="578.6" cy="631.3" r="4.2"/><circle cx="582.1" cy="631.3" r="4.2"/><circle cx="580.4" cy="634.4" r="4.2"/><circle cx="578.6" cy="637.4" r="4.2"/><circle cx="649.1" cy="581.7" r="4.2"/><circle cx="636.5" cy="589.2" r="4.2"/><circle cx="640.4" cy="593.9" r="4.2"/><circle cx="653.0" cy="592.3" r="4.2"/><circle cx="659.3" cy="591.5" r="4.2"/><circle cx="626.2" cy="598.3" r="4.2"/><circle cx="583.6" cy="616.0" r="4.2"/></g>
<rect x="68.7" y="105.2" width="11.2" height="11.2" fill="#77c577" stroke="#111" stroke-width="2.2"/>
<rect x="443.8" y="64.1" width="11.2" height="11.2" fill="#e41a1c" stroke="#111" stroke-width="2.2"/>
<rect x="318.6" y="138.2" width="11.2" height="11.2" fill="#b373c0" stroke="#111" stroke-width="2.2"/>
<rect x="458.7" y="203.5" width="11.2" height="11.2" fill="#5f9bd2" stroke="#111" stroke-width="2.2"/>
<rect x="537.2" y="77.0" width="11.2" height="11.2" fill="#ff9f3f" stroke="#111" stroke-width="2.2"/>
<rect x="895.2" y="197.6" width="11.2" height="11.2" fill="#4daf4a" stroke="#111" stroke-width="2.2"/>
<rect x="284.7" y="332.2" width="11.2" height="11.2" fill="#ff7f00" stroke="#111" stroke-width="2.2"/>
<rect x="297.6" y="470.3" width="11.2" height="11.2" fill="#c0171b" stroke="#111" stroke-width="2.2"/>
<rect x="484.5" y="319.3" width="11.2" height="11.2" fill="#ffff33" stroke="#111" stroke-width="2.2"/>
<rect x="462.3" y="496.6" width="11.2" height="11.2" fill="#3d9140" stroke="#111" stroke-width="2.2"/>
<rect x="462.3" y="497.0" width="11.2" height="11.2" fill="#3d9140" stroke="#111" stroke-width="2.2"/>
<rect x="623.1" y="476.7" width="11.2" height="11.2" fill="#ee5356" stroke="#111" stroke-width="2.2"/>
<rect x="624.7" y="477.2" width="11.2" height="11.2" fill="#ee5356" stroke="#111" stroke-width="2.2"/>
<rect x="730.5" y="258.4" width="11.2" height="11.2" fill="#984ea3" stroke="#111" stroke-width="2.2"/>
<rect x="273.1" y="665.3" width="11.2" height="11.2" fill="#ffff66" stroke="#111" stroke-width="2.2"/>
<rect x="453.3" y="626.1" width="11.2" height="11.2" fill="#7d3f8c" stroke="#111" stroke-width="2.2"/>
<rect x="592.1" y="605.9" width="11.2" height="11.2" fill="#377eb8" stroke="#111" stroke-width="2.2"/>
</svg><div class="mbtn" style="left:8px;top:8px"><svg width="35" height="35"><path d="M17.5 6v23M6 17.5h23" stroke="#fff" stroke-width="2.6"/></svg></div>
<div class="mbtn" style="left:8px;top:46px"><svg width="35" height="35"><path d="M6 17.5h23" stroke="#fff" stroke-width="2.6"/></svg></div>
<div class="mbtn" style="left:8px;top:84px"><svg width="35" height="35"><g stroke="#fff" stroke-width="3.4" fill="#fff"><path d="M8 8L13.5 13.5M27 8L21.5 13.5M8 27L13.5 21.5M27 27L21.5 21.5"/><path d="M4 4h9l-9 9zM31 4h-9l9 9zM4 31h9l-9-9zM31 31h-9l9-9z" stroke="none"/></g></svg></div>
<div class="mbtn" style="left:1197px;top:8px;background:rgba(20,106,155,.93)"><svg width="35" height="35" viewBox="-17.5 -17.5 35 35"><g fill="#fff"><circle r="10.2"/><rect x="-3.8" y="-13.6" width="7.6" height="27.2" rx="2" transform="rotate(-15)"/><rect x="-3.8" y="-13.6" width="7.6" height="27.2" rx="2" transform="rotate(45)"/><rect x="-3.8" y="-13.6" width="7.6" height="27.2" rx="2" transform="rotate(105)"/></g><circle r="3.4" fill="#146a9b"/></svg></div>
<svg class="abs" style="left:8px;top:729px" width="90" height="24"><path d="M2 2v18h82V2" fill="none" stroke="#0a6291" stroke-width="2"/><text x="43" y="16" text-anchor="middle" font-family="Liberation Sans,sans-serif" font-size="12.5" fill="#0a6291">100 km</text></svg>
</div>
<div class="tog" style="left:427px;top:215px;width:141px;background:#146a9b">Situación inicial</div>
<div class="tog" style="left:571px;top:215px;width:242px;background:#4d4d4d">Resultado de la optimización</div>
<div id="legend"><div id="leghead"><span style="display:inline-block;font-size:14px;transform:scaleX(.878);transform-origin:0 50%">TERRITORIOS</span><svg class="abs" style="left:251px;top:12px" width="14" height="14"><path d="M1.5 1.5l11 11M12.5 1.5l-11 11" stroke="#fff" stroke-width="2.6"/></svg></div>
<div class="row" style="top:37px;height:36px;border-bottom:1.5px solid #01608f"><svg class="abs" style="left:4px;top:2px" width="34" height="33"><g fill="#fff" stroke="#222" stroke-width="1"><rect x=".5" y=".5" width="21" height="23"/><rect x="4.5" y="4.5" width="21" height="23"/><rect x="9.5" y="8.5" width="21" height="23"/></g></svg><div class="nm" style="top:10px">todos</div><svg class="eye" viewBox="0 0 25 15"><path d="M0 7.5C3.5 2.6 8 0 12.5 0S21.5 2.6 25 7.5C21.5 12.4 17 15 12.5 15S3.5 12.4 0 7.5Z" fill="#01608f"/><circle cx="12.5" cy="7.5" r="5.3" fill="#fff"/><circle cx="12.5" cy="7.5" r="3.2" fill="#01608f"/></svg></div>
<div class="row" style="top:73px"><div class="sw" style="background:#e41a1c"></div><div class="nm">Agustín Iglesias Gil</div><div class="ct">Clientes: 181</div><svg class="eye" viewBox="0 0 25 15"><path d="M0 7.5C3.5 2.6 8 0 12.5 0S21.5 2.6 25 7.5C21.5 12.4 17 15 12.5 15S3.5 12.4 0 7.5Z" fill="#01608f"/><circle cx="12.5" cy="7.5" r="5.3" fill="#fff"/><circle cx="12.5" cy="7.5" r="3.2" fill="#01608f"/></svg></div>
<div class="row" style="top:108px"><div class="sw" style="background:#984ea3"></div><div class="nm">Alberto Álvarez Torres</div><div class="ct">Clientes: 173</div><svg class="eye" viewBox="0 0 25 15"><path d="M0 7.5C3.5 2.6 8 0 12.5 0S21.5 2.6 25 7.5C21.5 12.4 17 15 12.5 15S3.5 12.4 0 7.5Z" fill="#01608f"/><circle cx="12.5" cy="7.5" r="5.3" fill="#fff"/><circle cx="12.5" cy="7.5" r="3.2" fill="#01608f"/></svg></div>
<div class="row" style="top:143px"><div class="sw" style="background:#377eb8"></div><div class="nm">Alfonso Mora Pérez</div><div class="ct">Clientes: 206</div><svg class="eye" viewBox="0 0 25 15"><path d="M0 7.5C3.5 2.6 8 0 12.5 0S21.5 2.6 25 7.5C21.5 12.4 17 15 12.5 15S3.5 12.4 0 7.5Z" fill="#01608f"/><circle cx="12.5" cy="7.5" r="5.3" fill="#fff"/><circle cx="12.5" cy="7.5" r="3.2" fill="#01608f"/></svg></div>
<div class="row" style="top:178px"><div class="sw" style="background:#4daf4a"></div><div class="nm">Ana María Caballero Cruz</div><div class="ct">Clientes: 256</div><svg class="eye" viewBox="0 0 25 15"><path d="M0 7.5C3.5 2.6 8 0 12.5 0S21.5 2.6 25 7.5C21.5 12.4 17 15 12.5 15S3.5 12.4 0 7.5Z" fill="#01608f"/><circle cx="12.5" cy="7.5" r="5.3" fill="#fff"/><circle cx="12.5" cy="7.5" r="3.2" fill="#01608f"/></svg></div>
<div class="row" style="top:213px"><div class="sw" style="background:#5f9bd2"></div><div class="nm">Antonia Ramírez Soler</div><div class="ct">Clientes: 181</div><svg class="eye" viewBox="0 0 25 15"><path d="M0 7.5C3.5 2.6 8 0 12.5 0S21.5 2.6 25 7.5C21.5 12.4 17 15 12.5 15S3.5 12.4 0 7.5Z" fill="#01608f"/><circle cx="12.5" cy="7.5" r="5.3" fill="#fff"/><circle cx="12.5" cy="7.5" r="3.2" fill="#01608f"/></svg></div>
<div class="row" style="top:248px"><div class="sw" style="background:#b373c0"></div><div class="nm">César Torres Prieto</div><div class="ct">Clientes: 205</div><svg class="eye" viewBox="0 0 25 15"><path d="M0 7.5C3.5 2.6 8 0 12.5 0S21.5 2.6 25 7.5C21.5 12.4 17 15 12.5 15S3.5 12.4 0 7.5Z" fill="#01608f"/><circle cx="12.5" cy="7.5" r="5.3" fill="#fff"/><circle cx="12.5" cy="7.5" r="3.2" fill="#01608f"/></svg></div>
<div class="row" style="top:283px"><div class="sw" style="background:#77c577"></div><div class="nm">Daniel Ortiz Gutiérrez</div><div class="ct">Clientes: 276</div><svg class="eye" viewBox="0 0 25 15"><path d="M0 7.5C3.5 2.6 8 0 12.5 0S21.5 2.6 25 7.5C21.5 12.4 17 15 12.5 15S3.5 12.4 0 7.5Z" fill="#01608f"/><circle cx="12.5" cy="7.5" r="5.3" fill="#fff"/><circle cx="12.5" cy="7.5" r="3.2" fill="#01608f"/></svg></div>
<div class="row" style="top:318px"><div class="sw" style="background:#ee5356"></div><div class="nm">Emilia Cortés González</div><div class="ct">Clientes: 258</div><svg class="eye" viewBox="0 0 25 15"><path d="M0 7.5C3.5 2.6 8 0 12.5 0S21.5 2.6 25 7.5C21.5 12.4 17 15 12.5 15S3.5 12.4 0 7.5Z" fill="#01608f"/><circle cx="12.5" cy="7.5" r="5.3" fill="#fff"/><circle cx="12.5" cy="7.5" r="3.2" fill="#01608f"/></svg></div>
<div class="row" style="top:353px"><div class="sw" style="background:#ffff33"></div><div class="nm">Francisco José Navarro Ramírez</div><div class="ct">Clientes: 386</div><svg class="eye" viewBox="0 0 25 15"><path d="M0 7.5C3.5 2.6 8 0 12.5 0S21.5 2.6 25 7.5C21.5 12.4 17 15 12.5 15S3.5 12.4 0 7.5Z" fill="#01608f"/><circle cx="12.5" cy="7.5" r="5.3" fill="#fff"/><circle cx="12.5" cy="7.5" r="3.2" fill="#01608f"/></svg></div>
<div class="row" style="top:388px"><div class="sw" style="background:#3d9140"></div><div class="nm">Julián Delgado Durán</div><div class="ct">Clientes: 209</div><svg class="eye" viewBox="0 0 25 15"><path d="M0 7.5C3.5 2.6 8 0 12.5 0S21.5 2.6 25 7.5C21.5 12.4 17 15 12.5 15S3.5 12.4 0 7.5Z" fill="#01608f"/><circle cx="12.5" cy="7.5" r="5.3" fill="#fff"/><circle cx="12.5" cy="7.5" r="3.2" fill="#01608f"/></svg></div>
<div class="row" style="top:423px"><div class="sw" style="background:#ff7f00"></div><div class="nm">María Rosa Diaz Núñez</div><div class="ct">Clientes: 121</div><svg class="eye" viewBox="0 0 25 15"><path d="M0 7.5C3.5 2.6 8 0 12.5 0S21.5 2.6 25 7.5C21.5 12.4 17 15 12.5 15S3.5 12.4 0 7.5Z" fill="#01608f"/><circle cx="12.5" cy="7.5" r="5.3" fill="#fff"/><circle cx="12.5" cy="7.5" r="3.2" fill="#01608f"/></svg></div>
<div class="row" style="top:458px"><div class="sw" style="background:#ffff66"></div><div class="nm">Noelia Ruiz Crespo</div><div class="ct">Clientes: 263</div><svg class="eye" viewBox="0 0 25 15"><path d="M0 7.5C3.5 2.6 8 0 12.5 0S21.5 2.6 25 7.5C21.5 12.4 17 15 12.5 15S3.5 12.4 0 7.5Z" fill="#01608f"/><circle cx="12.5" cy="7.5" r="5.3" fill="#fff"/><circle cx="12.5" cy="7.5" r="3.2" fill="#01608f"/></svg></div>
<div class="row" style="top:493px"><div class="sw" style="background:#c0171b"></div><div class="nm">Roberto Calvo Méndez</div><div class="ct">Clientes: 100</div><svg class="eye" viewBox="0 0 25 15"><path d="M0 7.5C3.5 2.6 8 0 12.5 0S21.5 2.6 25 7.5C21.5 12.4 17 15 12.5 15S3.5 12.4 0 7.5Z" fill="#01608f"/><circle cx="12.5" cy="7.5" r="5.3" fill="#fff"/><circle cx="12.5" cy="7.5" r="3.2" fill="#01608f"/></svg></div>
<div class="row" style="top:528px"><div class="sw" style="background:#7d3f8c"></div><div class="nm">Rocío Santana Alonso</div><div class="ct">Clientes: 246</div><svg class="eye" viewBox="0 0 25 15"><path d="M0 7.5C3.5 2.6 8 0 12.5 0S21.5 2.6 25 7.5C21.5 12.4 17 15 12.5 15S3.5 12.4 0 7.5Z" fill="#01608f"/><circle cx="12.5" cy="7.5" r="5.3" fill="#fff"/><circle cx="12.5" cy="7.5" r="3.2" fill="#01608f"/></svg></div>
<div class="row" style="top:563px"><div class="sw" style="background:#ff9f3f"></div><div class="nm">Teresa Muñoz Soler</div><div class="ct">Clientes: 298</div><svg class="eye" viewBox="0 0 25 15"><path d="M0 7.5C3.5 2.6 8 0 12.5 0S21.5 2.6 25 7.5C21.5 12.4 17 15 12.5 15S3.5 12.4 0 7.5Z" fill="#01608f"/><circle cx="12.5" cy="7.5" r="5.3" fill="#fff"/><circle cx="12.5" cy="7.5" r="3.2" fill="#01608f"/></svg></div>
</div>
<div class="fbtn" style="left:8px;width:104px;border:1.5px solid #0a6291;color:#0a6291;background:#fff;line-height:25px;padding-left:33px"><svg class="abs" style="left:8px;top:6px" width="18" height="14"><path d="M1 2.5a1.5 1.5 0 0 1 1.5-1.5h4l1.5 2h7.5a1.5 1.5 0 0 1 1.5 1.5v7a1.5 1.5 0 0 1-1.5 1.5h-13a1.5 1.5 0 0 1-1.5-1.5z" fill="none" stroke="#0a6291" stroke-width="1.4"/></svg>CARGAR</div>
<div class="fbtn" style="left:128px;width:116px;border:1.5px solid #0a6291;color:#0a6291;background:#fff;line-height:25px;padding-left:33px"><svg class="abs" style="left:9px;top:5px" width="16" height="16"><rect x="1" y="1" width="14" height="14" rx="2.5" fill="none" stroke="#0a6291" stroke-width="1.6"/><rect x="4.5" y="1" width="6" height="4.5" fill="none" stroke="#0a6291" stroke-width="1.4"/><circle cx="8" cy="10.5" r="1.8" fill="#0a6291"/></svg>GUARDAR</div>
<div class="fbtn" style="left:515px;width:86px;background:#a9a9a9;color:#fff;text-align:center">VOLVER</div>
<div class="fbtn" style="left:617px;width:104px;background:#01608f;color:#fff;text-align:center">SIGUIENTE</div>
</body></html>
